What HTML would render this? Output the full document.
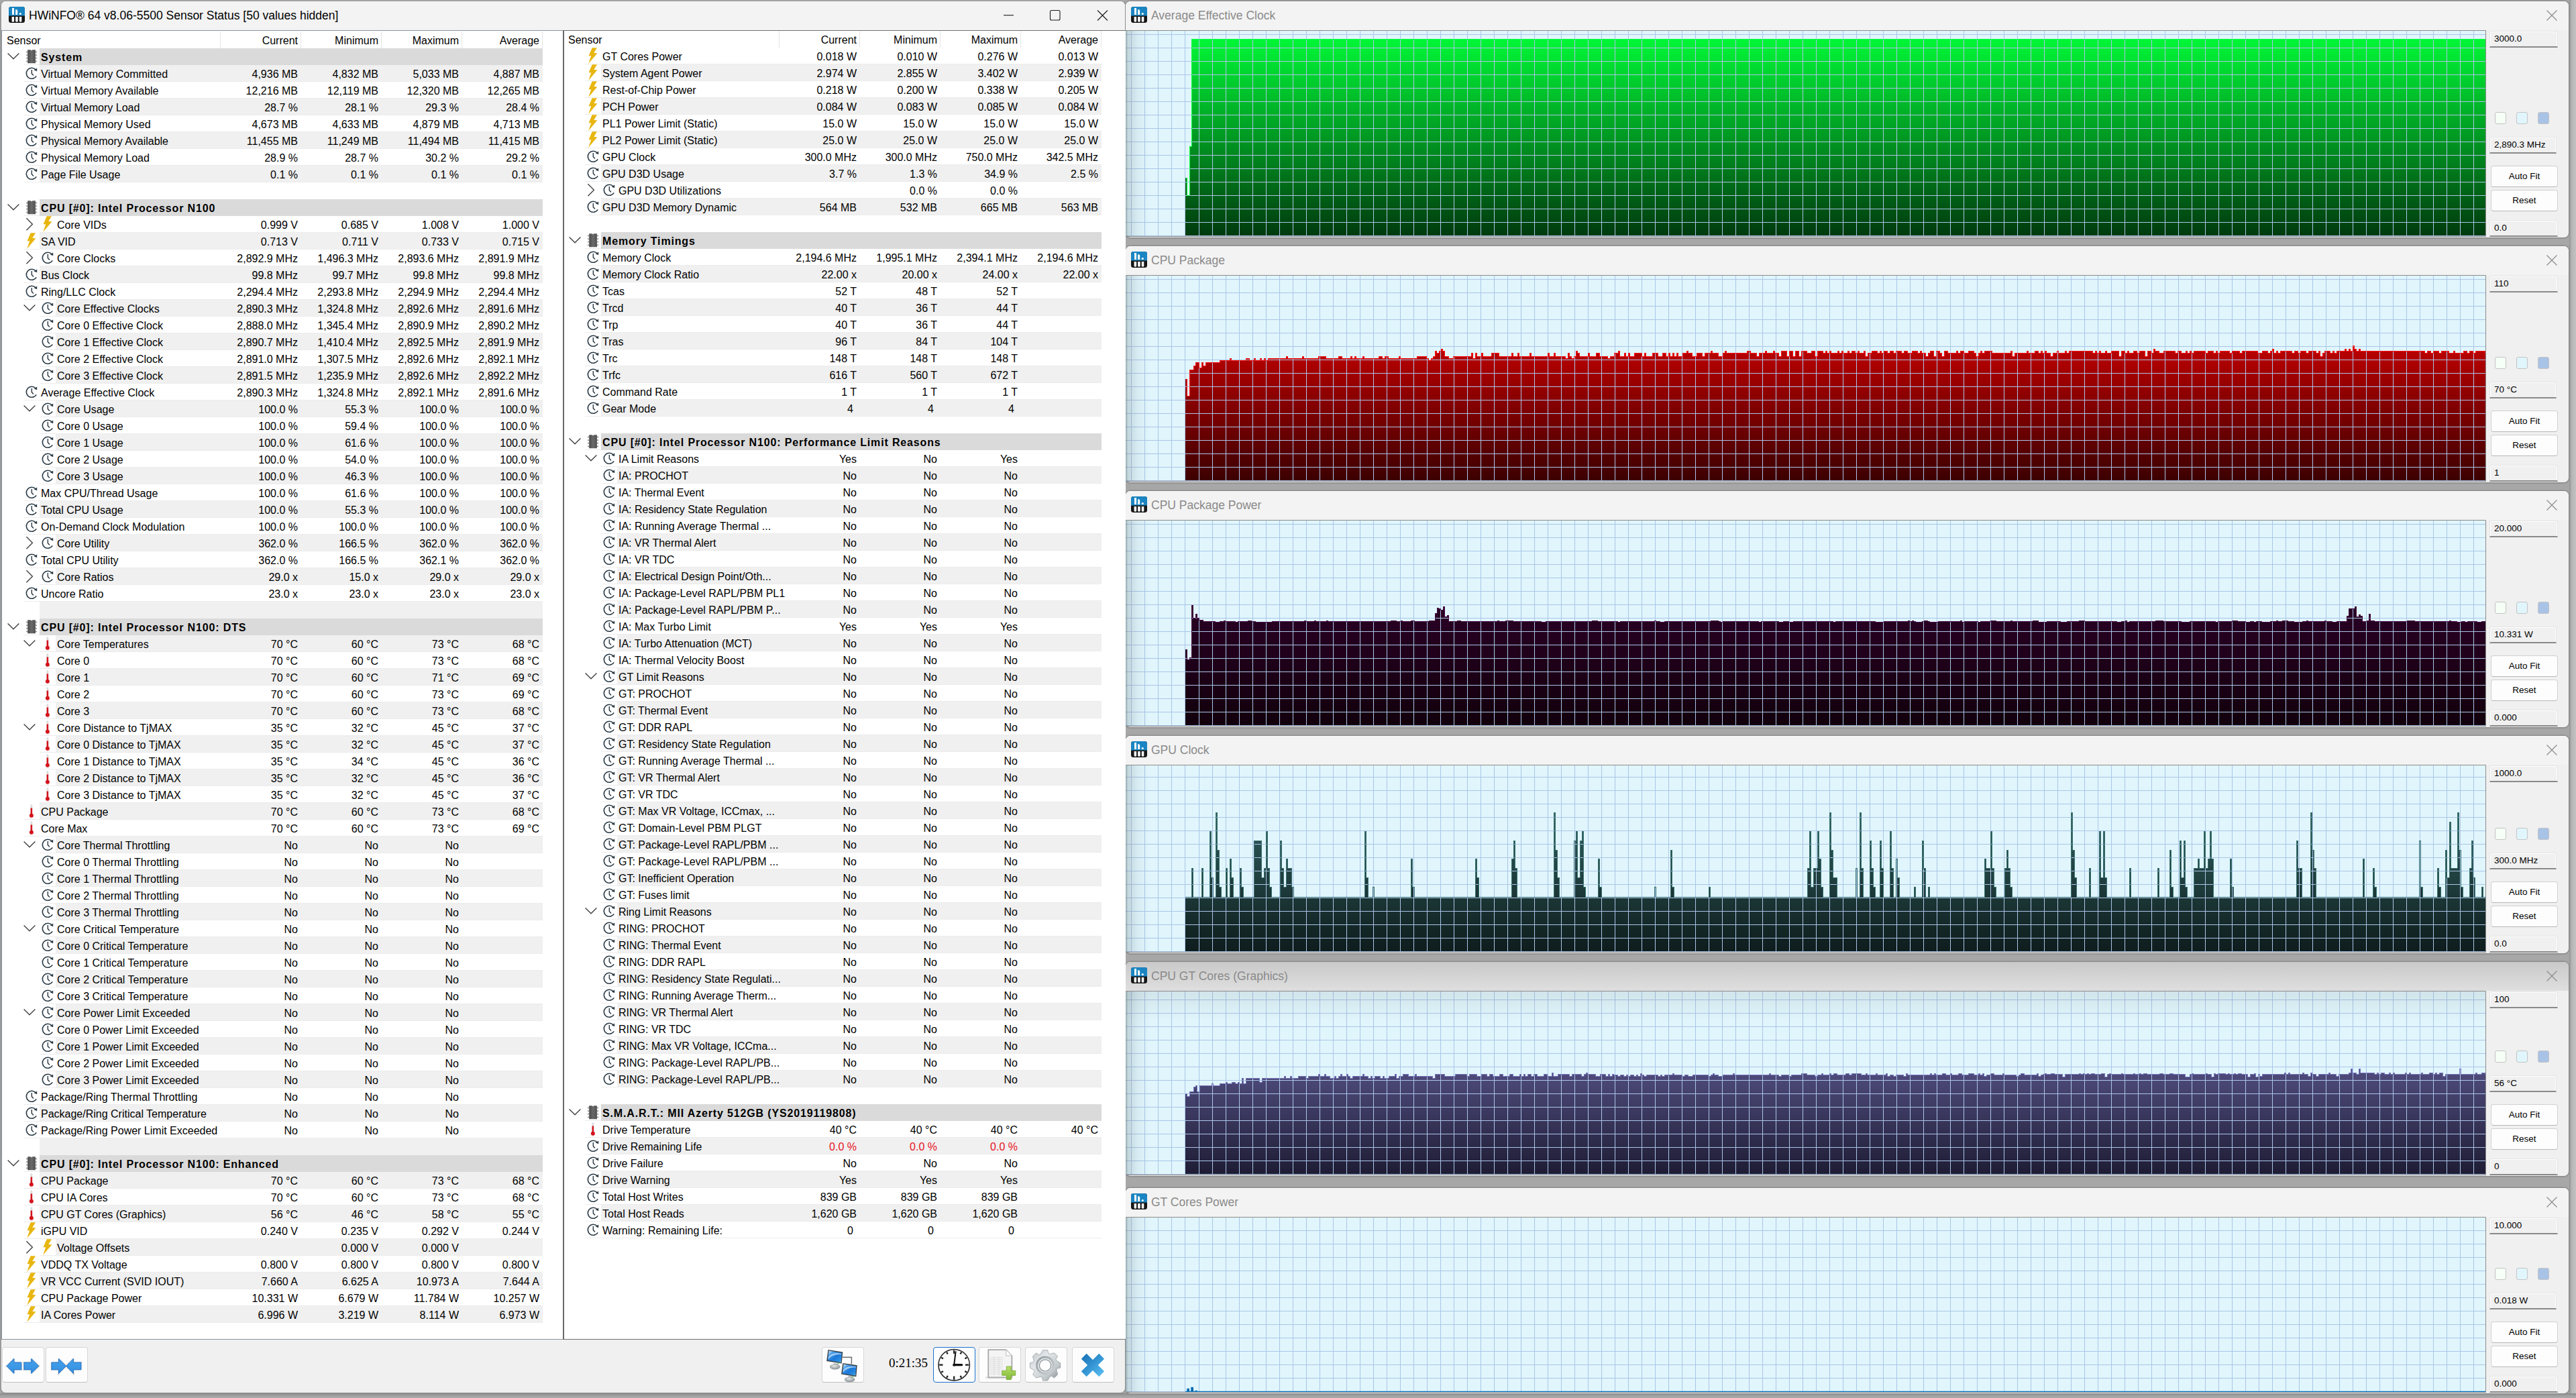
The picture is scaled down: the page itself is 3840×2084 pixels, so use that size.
<!DOCTYPE html><html><head><meta charset="utf-8"><style>
*{box-sizing:border-box}
html,body{margin:0;padding:0}
body{width:3840px;height:2084px;overflow:hidden;position:relative;background:#a7a7a7;font-family:"Liberation Sans",sans-serif;font-size:16px;color:#000}
.a{position:absolute}
.t{position:absolute;white-space:nowrap;line-height:27px;height:25px}
.v{position:absolute;white-space:nowrap;line-height:27px;height:25px;text-align:right;width:119px}
.bg1{position:absolute;height:25px;background:#f0f0f0}
.hd{position:absolute;height:25px;background:#dadada}
.sep{position:absolute;height:1px;background:#ececec}
.ic{position:absolute;width:24px;height:24px;background:#fcfcfc}
.b{font-weight:bold;letter-spacing:0.85px}
.red{color:#e81123}
svg.i{position:absolute;overflow:visible}
.btn{position:absolute;background:#fdfdfd;border:1px solid #d6d6d6;border-bottom-color:#c2c2c2;border-radius:4px}
.tb{position:absolute;background:#f0f0f0;border:1px solid #e4e4e4;border-bottom:2px solid #8a8a8a;box-shadow:inset 1px 1px 0 #fff,inset -1px 0 0 #fff;border-radius:3px 3px 0 0;font-size:13.5px;line-height:22px;padding-left:6px;white-space:nowrap}
.gbtn{position:absolute;background:#fdfdfd;border:1px solid #d0d0d0;border-bottom-color:#b8b8b8;border-radius:4px;font-size:13.5px;text-align:center;white-space:nowrap}
.sq{position:absolute;width:17px;height:18px;border:1px solid #c4c4c4;border-radius:3px}
</style></head><body>
<svg width="0" height="0" style="position:absolute"><defs>
<symbol id="clk" viewBox="0 0 24 25"><path d="M18.15 6.84 A8 8 0 1 0 19.23 16.3" fill="none" stroke="#2b3b46" stroke-width="1.6"/><path d="M20.2 4.6 L20.2 9.2 L15.8 7.6 Z" fill="#2b3b46"/><path d="M12.3 7 L12.3 12.6 L15 15.4" fill="none" stroke="#2b3b46" stroke-width="1.4"/></symbol>
<symbol id="bolt" viewBox="0 0 24 25"><path d="M10.7 0.3 L17.9 0.3 L13.3 8.1 L18.4 8.2 L5.2 24 L9.2 12.3 L5.5 12.3 Z" fill="#e8b611"/></symbol>
<symbol id="therm" viewBox="0 0 24 25"><rect x="10.4" y="2.2" width="2.9" height="15" rx="1.4" fill="#dcdcdc"/><rect x="10.6" y="7.5" width="2.5" height="10" fill="#d3141c"/><circle cx="11.85" cy="18.8" r="3" fill="#d3141c"/><ellipse cx="11.85" cy="22.7" rx="2.5" ry="0.5" fill="#e0e0e0"/></symbol>
<symbol id="chip" viewBox="0 0 24 25"><defs><linearGradient id="cg" x1="0" y1="0" x2="1" y2="0"><stop offset="0" stop-color="#4a4a4a"/><stop offset="0.5" stop-color="#6a6a6a"/><stop offset="1" stop-color="#505050"/></linearGradient></defs><g fill="#8a8a8a"><rect x="3.9" y="4.6" width="2.2" height="1.8" rx="0.8"/><rect x="3.9" y="9.2" width="2.2" height="1.8" rx="0.8"/><rect x="3.9" y="13.8" width="2.2" height="1.8" rx="0.8"/><rect x="3.9" y="18.4" width="2.2" height="1.8" rx="0.8"/><rect x="18" y="4.6" width="2.2" height="1.8" rx="0.8"/><rect x="18" y="9.2" width="2.2" height="1.8" rx="0.8"/><rect x="18" y="13.8" width="2.2" height="1.8" rx="0.8"/><rect x="18" y="18.4" width="2.2" height="1.8" rx="0.8"/></g><path d="M6.2 2.3 L10.8 2.3 L12 3.4 L13.2 2.3 L17.9 2.3 L17.9 22.3 L6.2 22.3 Z" fill="url(#cg)"/></symbol>
<symbol id="chv" viewBox="0 0 24 25"><path d="M0.6 7.4 L9 15.8 L17.4 7.4" fill="none" stroke="#404040" stroke-width="1.35"/></symbol>
<symbol id="chr" viewBox="0 0 24 25"><path d="M4.4 3.3 L13.4 12.3 L4.4 21.3" fill="none" stroke="#404040" stroke-width="1.35"/></symbol>
<symbol id="logo" viewBox="0 0 24 24"><rect x="0" y="0" width="24" height="24" rx="3.5" fill="#171717"/><path d="M3.5 0 H20.5 A3.5 3.5 0 0 1 24 3.5 V13.5 H0 V3.5 A3.5 3.5 0 0 1 3.5 0 Z" fill="#1a85c2"/><rect x="5" y="2" width="3" height="10" fill="#fff"/><path d="M10.2 4.3 H12 Q13.2 4.5 13.2 6.5 V12 H10.2 Z" fill="#fff"/><circle cx="17.3" cy="10.5" r="1.6" fill="#fff"/><path d="M4.6 15 H8.1 V22 Q6.4 23.3 4.6 22 Z M10.2 15 H13.7 V22 Q12 23.3 10.2 22 Z M15.8 15 H19.3 V22 Q17.6 23.3 15.8 22 Z" fill="#fff"/></symbol>
</defs></svg>
<div class="a" style="left:1677px;top:1px;width:2153px;height:354px;background:#f0f0f0;border:1px solid #8a8a8a;border-radius:8px;box-shadow:0 1px 1px rgba(0,0,0,0.12),0 -1px 1px rgba(0,0,0,0.08)"></div>
<div class="a" style="left:1678px;top:2px;width:2151px;height:43px;background:#f3f3f3;border-radius:7px 7px 0 0;border-top:1px solid #f9f9f9"></div>
<svg class="i" style="left:1686px;top:10px" width="24" height="24"><use href="#logo"/></svg>
<div class="a" style="left:1716px;top:11px;font-size:17.5px;line-height:24px;color:#8a8a8a;white-space:nowrap">Average Effective Clock</div>
<svg class="i" style="left:3796px;top:15px" width="16" height="16"><path d="M0.5 0.5 L15.5 15.5 M15.5 0.5 L0.5 15.5" stroke="#8e8e8e" stroke-width="1.3"/></svg>
<svg class="i" style="left:1678px;top:45px" width="2028" height="308">
<rect x="0" y="0" width="2028" height="308" fill="#e0f6fc"/>
<defs><linearGradient id="gc1" x1="0" y1="0" x2="0" y2="307" gradientUnits="userSpaceOnUse"><stop offset="0" stop-color="#00ff38"/><stop offset="1" stop-color="#003a0e"/></linearGradient></defs><path d="M89 307V220H92V246H95V173H98V13H101V13H104V13H107V13H110V13H113V13H116V13H119V13H122V13H125V13H128V13H131V13H134V13H137V13H140V13H143V13H146V13H149V13H152V13H155V13H158V13H161V13H164V13H167V13H170V13H173V13H176V13H179V13H182V13H185V13H188V13H191V13H194V13H197V13H200V13H203V13H206V13H209V13H212V13H215V13H218V13H221V13H224V13H227V13H230V13H233V13H236V13H239V13H242V13H245V13H248V13H251V13H254V13H257V13H260V13H263V13H266V13H269V13H272V13H275V13H278V13H281V13H284V13H287V13H290V13H293V13H296V13H299V13H302V13H305V13H308V13H311V13H314V13H317V13H320V13H323V13H326V13H329V13H332V13H335V13H338V13H341V13H344V13H347V13H350V13H353V13H356V13H359V13H362V13H365V13H368V13H371V13H374V13H377V13H380V13H383V13H386V13H389V13H392V13H395V13H398V13H401V13H404V13H407V13H410V13H413V13H416V13H419V13H422V13H425V13H428V13H431V13H434V13H437V13H440V13H443V13H446V13H449V13H452V13H455V13H458V13H461V13H464V13H467V13H470V13H473V13H476V13H479V13H482V13H485V13H488V13H491V13H494V13H497V13H500V13H503V13H506V13H509V13H512V13H515V13H518V13H521V13H524V13H527V13H530V13H533V13H536V13H539V13H542V13H545V13H548V13H551V13H554V13H557V13H560V13H563V13H566V13H569V13H572V13H575V13H578V13H581V13H584V13H587V13H590V13H593V13H596V13H599V13H602V13H605V13H608V13H611V13H614V13H617V13H620V13H623V13H626V13H629V13H632V13H635V13H638V13H641V13H644V13H647V13H650V13H653V13H656V13H659V13H662V13H665V13H668V13H671V13H674V13H677V13H680V13H683V13H686V13H689V13H692V13H695V13H698V13H701V13H704V13H707V13H710V13H713V13H716V13H719V13H722V13H725V13H728V13H731V13H734V13H737V13H740V13H743V13H746V13H749V13H752V13H755V13H758V13H761V13H764V13H767V13H770V13H773V13H776V13H779V13H782V13H785V13H788V13H791V13H794V13H797V13H800V13H803V13H806V13H809V13H812V13H815V13H818V13H821V13H824V13H827V13H830V13H833V13H836V13H839V13H842V13H845V13H848V13H851V13H854V13H857V13H860V13H863V13H866V13H869V13H872V13H875V13H878V13H881V13H884V13H887V13H890V13H893V13H896V13H899V13H902V13H905V13H908V13H911V13H914V13H917V13H920V13H923V13H926V13H929V13H932V13H935V13H938V13H941V13H944V13H947V13H950V13H953V13H956V13H959V13H962V13H965V13H968V13H971V13H974V13H977V13H980V13H983V13H986V13H989V13H992V13H995V13H998V13H1001V13H1004V13H1007V13H1010V13H1013V13H1016V13H1019V13H1022V13H1025V13H1028V13H1031V13H1034V13H1037V13H1040V13H1043V13H1046V13H1049V13H1052V13H1055V13H1058V13H1061V13H1064V13H1067V13H1070V13H1073V13H1076V13H1079V13H1082V13H1085V13H1088V13H1091V13H1094V13H1097V13H1100V13H1103V13H1106V13H1109V13H1112V13H1115V13H1118V13H1121V13H1124V13H1127V13H1130V13H1133V13H1136V13H1139V13H1142V13H1145V13H1148V13H1151V13H1154V13H1157V13H1160V13H1163V13H1166V13H1169V13H1172V13H1175V13H1178V13H1181V13H1184V13H1187V13H1190V13H1193V13H1196V13H1199V13H1202V13H1205V13H1208V13H1211V13H1214V13H1217V13H1220V13H1223V13H1226V13H1229V13H1232V13H1235V13H1238V13H1241V13H1244V13H1247V13H1250V13H1253V13H1256V13H1259V13H1262V13H1265V13H1268V13H1271V13H1274V13H1277V13H1280V13H1283V13H1286V13H1289V13H1292V13H1295V13H1298V13H1301V13H1304V13H1307V13H1310V13H1313V13H1316V13H1319V13H1322V13H1325V13H1328V13H1331V13H1334V13H1337V13H1340V13H1343V13H1346V13H1349V13H1352V13H1355V13H1358V13H1361V13H1364V13H1367V13H1370V13H1373V13H1376V13H1379V13H1382V13H1385V13H1388V13H1391V13H1394V13H1397V13H1400V13H1403V13H1406V13H1409V13H1412V13H1415V13H1418V13H1421V13H1424V13H1427V13H1430V13H1433V13H1436V13H1439V13H1442V13H1445V13H1448V13H1451V13H1454V13H1457V13H1460V13H1463V13H1466V13H1469V13H1472V13H1475V13H1478V13H1481V13H1484V13H1487V13H1490V13H1493V13H1496V13H1499V13H1502V13H1505V13H1508V13H1511V13H1514V13H1517V13H1520V13H1523V13H1526V13H1529V13H1532V13H1535V13H1538V13H1541V13H1544V13H1547V13H1550V13H1553V13H1556V13H1559V13H1562V13H1565V13H1568V13H1571V13H1574V13H1577V13H1580V13H1583V13H1586V13H1589V13H1592V13H1595V13H1598V13H1601V13H1604V13H1607V13H1610V13H1613V13H1616V13H1619V13H1622V13H1625V13H1628V13H1631V13H1634V13H1637V13H1640V13H1643V13H1646V13H1649V13H1652V13H1655V13H1658V13H1661V13H1664V13H1667V13H1670V13H1673V13H1676V13H1679V13H1682V13H1685V13H1688V13H1691V13H1694V13H1697V13H1700V13H1703V13H1706V13H1709V13H1712V13H1715V13H1718V13H1721V13H1724V13H1727V13H1730V13H1733V13H1736V13H1739V13H1742V13H1745V13H1748V13H1751V13H1754V13H1757V13H1760V13H1763V13H1766V13H1769V13H1772V13H1775V13H1778V13H1781V13H1784V13H1787V13H1790V13H1793V13H1796V13H1799V13H1802V13H1805V13H1808V13H1811V13H1814V13H1817V13H1820V13H1823V13H1826V13H1829V13H1832V13H1835V13H1838V13H1841V13H1844V13H1847V13H1850V13H1853V13H1856V13H1859V13H1862V13H1865V13H1868V13H1871V13H1874V13H1877V13H1880V13H1883V13H1886V13H1889V13H1892V13H1895V13H1898V13H1901V13H1904V13H1907V13H1910V13H1913V13H1916V13H1919V13H1922V13H1925V13H1928V13H1931V13H1934V13H1937V13H1940V13H1943V13H1946V13H1949V13H1952V13H1955V13H1958V13H1961V13H1964V13H1967V13H1970V13H1973V13H1976V13H1979V13H1982V13H1985V13H1988V13H1991V13H1994V13H1997V13H2000V13H2003V13H2006V13H2009V13H2012V13H2015V13H2018V13H2021V13H2024V13H2027V13H2027V307Z" fill="url(#gc1)"/>
<path d="M8.5 1V307M28.5 1V307M48.5 1V307M68.5 1V307M88.5 1V307M109.5 1V307M129.5 1V307M149.5 1V307M169.5 1V307M189.5 1V307M209.5 1V307M229.5 1V307M249.5 1V307M269.5 1V307M289.5 1V307M309.5 1V307M329.5 1V307M349.5 1V307M369.5 1V307M389.5 1V307M409.5 1V307M429.5 1V307M449.5 1V307M469.5 1V307M489.5 1V307M509.5 1V307M529.5 1V307M549.5 1V307M569.5 1V307M589.5 1V307M609.5 1V307M629.5 1V307M649.5 1V307M669.5 1V307M689.5 1V307M709.5 1V307M729.5 1V307M749.5 1V307M769.5 1V307M789.5 1V307M809.5 1V307M829.5 1V307M849.5 1V307M869.5 1V307M889.5 1V307M909.5 1V307M929.5 1V307M949.5 1V307M969.5 1V307M989.5 1V307M1009.5 1V307M1029.5 1V307M1049.5 1V307M1069.5 1V307M1089.5 1V307M1109.5 1V307M1129.5 1V307M1149.5 1V307M1169.5 1V307M1189.5 1V307M1209.5 1V307M1229.5 1V307M1249.5 1V307M1269.5 1V307M1289.5 1V307M1309.5 1V307M1329.5 1V307M1349.5 1V307M1369.5 1V307M1389.5 1V307M1409.5 1V307M1429.5 1V307M1449.5 1V307M1469.5 1V307M1489.5 1V307M1509.5 1V307M1529.5 1V307M1549.5 1V307M1569.5 1V307M1589.5 1V307M1609.5 1V307M1629.5 1V307M1649.5 1V307M1669.5 1V307M1689.5 1V307M1709.5 1V307M1729.5 1V307M1749.5 1V307M1769.5 1V307M1789.5 1V307M1809.5 1V307M1829.5 1V307M1849.5 1V307M1869.5 1V307M1889.5 1V307M1909.5 1V307M1929.5 1V307M1949.5 1V307M1969.5 1V307M1989.5 1V307M2009.5 1V307M0 306.5H2027M0 286.5H2027M0 266.5H2027M0 246.5H2027M0 226.5H2027M0 206.5H2027M0 186.5H2027M0 166.5H2027M0 146.5H2027M0 126.5H2027M0 106.5H2027M0 86.5H2027M0 66.5H2027M0 46.5H2027M0 26.5H2027M0 6.5H2027" stroke="#abc5e8" stroke-width="1" fill="none"/>
<path d="M89.5 220.5H91.5H91.5V246.5H94.5H95.5V173.5H97.5H98.5V13.5H100.5H103.5H106.5H109.5H112.5H115.5H118.5H121.5H124.5H127.5H130.5H133.5H136.5H139.5H142.5H145.5H148.5H151.5H154.5H157.5H160.5H163.5H166.5H169.5H172.5H175.5H178.5H181.5H184.5H187.5H190.5H193.5H196.5H199.5H202.5H205.5H208.5H211.5H214.5H217.5H220.5H223.5H226.5H229.5H232.5H235.5H238.5H241.5H244.5H247.5H250.5H253.5H256.5H259.5H262.5H265.5H268.5H271.5H274.5H277.5H280.5H283.5H286.5H289.5H292.5H295.5H298.5H301.5H304.5H307.5H310.5H313.5H316.5H319.5H322.5H325.5H328.5H331.5H334.5H337.5H340.5H343.5H346.5H349.5H352.5H355.5H358.5H361.5H364.5H367.5H370.5H373.5H376.5H379.5H382.5H385.5H388.5H391.5H394.5H397.5H400.5H403.5H406.5H409.5H412.5H415.5H418.5H421.5H424.5H427.5H430.5H433.5H436.5H439.5H442.5H445.5H448.5H451.5H454.5H457.5H460.5H463.5H466.5H469.5H472.5H475.5H478.5H481.5H484.5H487.5H490.5H493.5H496.5H499.5H502.5H505.5H508.5H511.5H514.5H517.5H520.5H523.5H526.5H529.5H532.5H535.5H538.5H541.5H544.5H547.5H550.5H553.5H556.5H559.5H562.5H565.5H568.5H571.5H574.5H577.5H580.5H583.5H586.5H589.5H592.5H595.5H598.5H601.5H604.5H607.5H610.5H613.5H616.5H619.5H622.5H625.5H628.5H631.5H634.5H637.5H640.5H643.5H646.5H649.5H652.5H655.5H658.5H661.5H664.5H667.5H670.5H673.5H676.5H679.5H682.5H685.5H688.5H691.5H694.5H697.5H700.5H703.5H706.5H709.5H712.5H715.5H718.5H721.5H724.5H727.5H730.5H733.5H736.5H739.5H742.5H745.5H748.5H751.5H754.5H757.5H760.5H763.5H766.5H769.5H772.5H775.5H778.5H781.5H784.5H787.5H790.5H793.5H796.5H799.5H802.5H805.5H808.5H811.5H814.5H817.5H820.5H823.5H826.5H829.5H832.5H835.5H838.5H841.5H844.5H847.5H850.5H853.5H856.5H859.5H862.5H865.5H868.5H871.5H874.5H877.5H880.5H883.5H886.5H889.5H892.5H895.5H898.5H901.5H904.5H907.5H910.5H913.5H916.5H919.5H922.5H925.5H928.5H931.5H934.5H937.5H940.5H943.5H946.5H949.5H952.5H955.5H958.5H961.5H964.5H967.5H970.5H973.5H976.5H979.5H982.5H985.5H988.5H991.5H994.5H997.5H1000.5H1003.5H1006.5H1009.5H1012.5H1015.5H1018.5H1021.5H1024.5H1027.5H1030.5H1033.5H1036.5H1039.5H1042.5H1045.5H1048.5H1051.5H1054.5H1057.5H1060.5H1063.5H1066.5H1069.5H1072.5H1075.5H1078.5H1081.5H1084.5H1087.5H1090.5H1093.5H1096.5H1099.5H1102.5H1105.5H1108.5H1111.5H1114.5H1117.5H1120.5H1123.5H1126.5H1129.5H1132.5H1135.5H1138.5H1141.5H1144.5H1147.5H1150.5H1153.5H1156.5H1159.5H1162.5H1165.5H1168.5H1171.5H1174.5H1177.5H1180.5H1183.5H1186.5H1189.5H1192.5H1195.5H1198.5H1201.5H1204.5H1207.5H1210.5H1213.5H1216.5H1219.5H1222.5H1225.5H1228.5H1231.5H1234.5H1237.5H1240.5H1243.5H1246.5H1249.5H1252.5H1255.5H1258.5H1261.5H1264.5H1267.5H1270.5H1273.5H1276.5H1279.5H1282.5H1285.5H1288.5H1291.5H1294.5H1297.5H1300.5H1303.5H1306.5H1309.5H1312.5H1315.5H1318.5H1321.5H1324.5H1327.5H1330.5H1333.5H1336.5H1339.5H1342.5H1345.5H1348.5H1351.5H1354.5H1357.5H1360.5H1363.5H1366.5H1369.5H1372.5H1375.5H1378.5H1381.5H1384.5H1387.5H1390.5H1393.5H1396.5H1399.5H1402.5H1405.5H1408.5H1411.5H1414.5H1417.5H1420.5H1423.5H1426.5H1429.5H1432.5H1435.5H1438.5H1441.5H1444.5H1447.5H1450.5H1453.5H1456.5H1459.5H1462.5H1465.5H1468.5H1471.5H1474.5H1477.5H1480.5H1483.5H1486.5H1489.5H1492.5H1495.5H1498.5H1501.5H1504.5H1507.5H1510.5H1513.5H1516.5H1519.5H1522.5H1525.5H1528.5H1531.5H1534.5H1537.5H1540.5H1543.5H1546.5H1549.5H1552.5H1555.5H1558.5H1561.5H1564.5H1567.5H1570.5H1573.5H1576.5H1579.5H1582.5H1585.5H1588.5H1591.5H1594.5H1597.5H1600.5H1603.5H1606.5H1609.5H1612.5H1615.5H1618.5H1621.5H1624.5H1627.5H1630.5H1633.5H1636.5H1639.5H1642.5H1645.5H1648.5H1651.5H1654.5H1657.5H1660.5H1663.5H1666.5H1669.5H1672.5H1675.5H1678.5H1681.5H1684.5H1687.5H1690.5H1693.5H1696.5H1699.5H1702.5H1705.5H1708.5H1711.5H1714.5H1717.5H1720.5H1723.5H1726.5H1729.5H1732.5H1735.5H1738.5H1741.5H1744.5H1747.5H1750.5H1753.5H1756.5H1759.5H1762.5H1765.5H1768.5H1771.5H1774.5H1777.5H1780.5H1783.5H1786.5H1789.5H1792.5H1795.5H1798.5H1801.5H1804.5H1807.5H1810.5H1813.5H1816.5H1819.5H1822.5H1825.5H1828.5H1831.5H1834.5H1837.5H1840.5H1843.5H1846.5H1849.5H1852.5H1855.5H1858.5H1861.5H1864.5H1867.5H1870.5H1873.5H1876.5H1879.5H1882.5H1885.5H1888.5H1891.5H1894.5H1897.5H1900.5H1903.5H1906.5H1909.5H1912.5H1915.5H1918.5H1921.5H1924.5H1927.5H1930.5H1933.5H1936.5H1939.5H1942.5H1945.5H1948.5H1951.5H1954.5H1957.5H1960.5H1963.5H1966.5H1969.5H1972.5H1975.5H1978.5H1981.5H1984.5H1987.5H1990.5H1993.5H1996.5H1999.5H2002.5H2005.5H2008.5H2011.5H2014.5H2017.5H2020.5H2023.5H2026.5H2026.5" fill="none" stroke="#00ff40" stroke-width="1"/>
<path d="M0 0.5H2027.5V307.5H0" stroke="#8c8c8c" stroke-width="1" fill="none"/>
<defs><linearGradient id="shc1" x1="0" x2="1"><stop offset="0" stop-color="#4e5e64" stop-opacity="0.5"/><stop offset="0.1" stop-color="#5a6a70" stop-opacity="0.22"/><stop offset="0.5" stop-color="#5a6a70" stop-opacity="0.07"/><stop offset="1" stop-color="#5a6a70" stop-opacity="0"/></linearGradient></defs>
<rect x="0" y="1" width="36" height="306" fill="url(#shc1)"/>
</svg>
<div class="tb" style="left:3711px;top:46px;width:102px;height:25px">3000.0</div>
<div class="sq" style="left:3719px;top:167px;background:#f6fff6"></div>
<div class="sq" style="left:3751px;top:167px;background:#e0f6fc"></div>
<div class="sq" style="left:3783px;top:167px;background:#a9c3e6"></div>
<div class="tb" style="left:3711px;top:204px;width:100px;height:25px">2,890.3 MHz</div>
<div class="gbtn" style="left:3713px;top:247px;width:100px;height:32px;line-height:30px">Auto Fit</div>
<div class="gbtn" style="left:3713px;top:283px;width:100px;height:32px;line-height:30px">Reset</div>
<div class="tb" style="left:3711px;top:328px;width:102px;height:25px">0.0</div>
<div class="a" style="left:1677px;top:366px;width:2153px;height:354px;background:#f0f0f0;border:1px solid #8a8a8a;border-radius:8px;box-shadow:0 1px 1px rgba(0,0,0,0.12),0 -1px 1px rgba(0,0,0,0.08)"></div>
<div class="a" style="left:1678px;top:367px;width:2151px;height:43px;background:#f3f3f3;border-radius:7px 7px 0 0;border-top:1px solid #f9f9f9"></div>
<svg class="i" style="left:1686px;top:375px" width="24" height="24"><use href="#logo"/></svg>
<div class="a" style="left:1716px;top:376px;font-size:17.5px;line-height:24px;color:#8a8a8a;white-space:nowrap">CPU Package</div>
<svg class="i" style="left:3796px;top:380px" width="16" height="16"><path d="M0.5 0.5 L15.5 15.5 M15.5 0.5 L0.5 15.5" stroke="#8e8e8e" stroke-width="1.3"/></svg>
<svg class="i" style="left:1678px;top:410px" width="2028" height="308">
<rect x="0" y="0" width="2028" height="308" fill="#e0f6fc"/>
<defs><linearGradient id="gc2" x1="0" y1="0" x2="0" y2="307" gradientUnits="userSpaceOnUse"><stop offset="0" stop-color="#ff0000"/><stop offset="1" stop-color="#3c0000"/></linearGradient></defs><path d="M89 307V155H92V180H95V141H98V141H101V135H104V130H107V130H110V138H113V130H116V135H119V130H122V130H125V130H128V130H131V130H134V130H137V130H140V127H143V127H146V127H149V127H152V127H155V124H158V127H161V127H164V127H167V127H170V127H173V127H176V127H179V124H182V124H185V127H188V127H191V124H194V127H197V127H200V124H203V127H206V124H209V127H212V124H215V124H218V124H221V124H224V124H227V124H230V124H233V124H236V124H239V121H242V124H245V124H248V124H251V124H254V124H257V124H260V124H263V121H266V124H269V124H272V124H275V124H278V124H281V124H284V124H287V121H290V121H293V121H296V121H299V124H302V124H305V124H308V124H311V124H314V124H317V121H320V121H323V124H326V124H329V124H332V124H335V121H338V124H341V121H344V124H347V124H350V124H353V121H356V124H359V124H362V124H365V124H368V124H371V124H374V124H377V121H380V121H383V124H386V121H389V121H392V124H395V124H398V124H401V124H404V124H407V121H410V124H413V124H416V124H419V124H422V124H425V124H428V124H431V124H434V121H437V121H440V121H443V121H446V121H449V124H452V127H455V124H458V121H461V113H464V116H467V113H470V110H473V113H476V121H479V121H482V124H485V124H488V121H491V121H494V121H497V121H500V121H503V121H506V121H509V121H512V121H515V116H518V124H521V116H524V121H527V121H530V116H533V121H536V121H539V121H542V121H545V116H548V116H551V116H554V116H557V121H560V121H563V121H566V121H569V121H572V121H575V116H578V121H581V121H584V116H587V121H590V121H593V121H596V121H599V121H602V116H605V121H608V121H611V121H614V121H617V121H620V121H623V121H626V121H629V116H632V121H635V121H638V116H641V121H644V121H647V121H650V121H653V121H656V124H659V116H662V121H665V124H668V121H671V113H674V116H677V121H680V121H683V121H686V121H689V116H692V121H695V121H698V121H701V116H704V116H707V121H710V121H713V121H716V121H719V124H722V121H725V121H728V116H731V116H734V113H737V121H740V121H743V116H746V121H749V116H752V121H755V121H758V116H761V116H764V116H767V116H770V121H773V116H776V121H779V121H782V121H785V116H788V116H791V116H794V121H797V121H800V116H803V116H806V121H809V116H812V121H815V116H818V121H821V116H824V121H827V121H830V116H833V116H836V113H839V116H842V116H845V121H848V121H851V116H854V116H857V116H860V121H863V116H866V116H869V116H872V113H875V116H878V116H881V116H884V121H887V121H890V116H893V113H896V116H899V116H902V116H905V116H908V116H911V116H914V116H917V116H920V116H923V116H926V113H929V113H932V116H935V116H938V116H941V121H944V116H947V116H950V116H953V113H956V116H959V116H962V116H965V113H968V116H971V116H974V121H977V113H980V113H983V113H986V121H989V113H992V113H995V121H998V113H1001V113H1004V121H1007V113H1010V113H1013V113H1016V116H1019V116H1022V113H1025V113H1028V121H1031V113H1034V113H1037V113H1040V116H1043V113H1046V116H1049V113H1052V116H1055V116H1058V116H1061V113H1064V116H1067V113H1070V116H1073V116H1076V113H1079V116H1082V113H1085V113H1088V116H1091V113H1094V116H1097V116H1100V113H1103V121H1106V116H1109V116H1112V113H1115V113H1118V113H1121V116H1124V113H1127V116H1130V113H1133V113H1136V116H1139V113H1142V113H1145V116H1148V113H1151V113H1154V113H1157V116H1160V113H1163V113H1166V116H1169V116H1172V113H1175V113H1178V113H1181V116H1184V113H1187V116H1190V116H1193V121H1196V116H1199V113H1202V113H1205V121H1208V113H1211V113H1214V116H1217V121H1220V113H1223V113H1226V116H1229V116H1232V116H1235V116H1238V113H1241V116H1244V113H1247V113H1250V116H1253V116H1256V113H1259V113H1262V113H1265V116H1268V121H1271V116H1274V113H1277V116H1280V113H1283V113H1286V113H1289V113H1292V116H1295V116H1298V116H1301V116H1304V116H1307V116H1310V116H1313V116H1316V116H1319V113H1322V121H1325V116H1328V116H1331V116H1334V116H1337V116H1340V116H1343V113H1346V116H1349V116H1352V116H1355V113H1358V113H1361V116H1364V113H1367V116H1370V113H1373V116H1376V116H1379V121H1382V116H1385V116H1388V113H1391V116H1394V116H1397V116H1400V113H1403V116H1406V113H1409V113H1412V113H1415V113H1418V113H1421V113H1424V113H1427V113H1430V113H1433V113H1436V113H1439V113H1442V116H1445V113H1448V116H1451V113H1454V116H1457V116H1460V113H1463V116H1466V116H1469V113H1472V113H1475V113H1478V113H1481V121H1484V113H1487V113H1490V116H1493V113H1496V116H1499V116H1502V113H1505V113H1508V116H1511V113H1514V113H1517V113H1520V121H1523V113H1526V113H1529V116H1532V110H1535V113H1538V113H1541V116H1544V116H1547V113H1550V113H1553V113H1556V113H1559V113H1562V113H1565V116H1568V113H1571V113H1574V116H1577V116H1580V113H1583V116H1586V113H1589V116H1592V113H1595V113H1598V113H1601V113H1604V113H1607V113H1610V116H1613V113H1616V113H1619V113H1622V116H1625V113H1628V116H1631V113H1634V113H1637V113H1640V113H1643V113H1646V116H1649V113H1652V113H1655V113H1658V113H1661V116H1664V113H1667V113H1670V113H1673V113H1676V113H1679V113H1682V113H1685V113H1688V116H1691V116H1694V113H1697V113H1700V113H1703V116H1706V113H1709V110H1712V116H1715V113H1718V116H1721V113H1724V113H1727V113H1730V113H1733V113H1736V113H1739V116H1742V113H1745V113H1748V116H1751V113H1754V113H1757V113H1760V116H1763V113H1766V113H1769V113H1772V113H1775V116H1778V113H1781V121H1784V116H1787V113H1790V113H1793V113H1796V116H1799V113H1802V116H1805V113H1808V113H1811V113H1814V113H1817V110H1820V113H1823V110H1826V113H1829V105H1832V110H1835V113H1838V110H1841V113H1844V113H1847V113H1850V113H1853V113H1856V113H1859V113H1862V113H1865V113H1868V113H1871V113H1874V113H1877V113H1880V113H1883V113H1886V113H1889V113H1892V113H1895V113H1898V113H1901V113H1904V113H1907V113H1910V113H1913V113H1916V113H1919V113H1922V113H1925V113H1928V113H1931V113H1934V113H1937V116H1940V113H1943V113H1946V116H1949V113H1952V113H1955V113H1958V116H1961V113H1964V113H1967V113H1970V113H1973V116H1976V116H1979V113H1982V116H1985V116H1988V116H1991V116H1994V113H1997V113H2000V116H2003V113H2006V113H2009V116H2012V113H2015V113H2018V113H2021V113H2024V113H2027V116H2027V307Z" fill="url(#gc2)"/>
<path d="M8.5 1V307M28.5 1V307M48.5 1V307M68.5 1V307M88.5 1V307M109.5 1V307M129.5 1V307M149.5 1V307M169.5 1V307M189.5 1V307M209.5 1V307M229.5 1V307M249.5 1V307M269.5 1V307M289.5 1V307M309.5 1V307M329.5 1V307M349.5 1V307M369.5 1V307M389.5 1V307M409.5 1V307M429.5 1V307M449.5 1V307M469.5 1V307M489.5 1V307M509.5 1V307M529.5 1V307M549.5 1V307M569.5 1V307M589.5 1V307M609.5 1V307M629.5 1V307M649.5 1V307M669.5 1V307M689.5 1V307M709.5 1V307M729.5 1V307M749.5 1V307M769.5 1V307M789.5 1V307M809.5 1V307M829.5 1V307M849.5 1V307M869.5 1V307M889.5 1V307M909.5 1V307M929.5 1V307M949.5 1V307M969.5 1V307M989.5 1V307M1009.5 1V307M1029.5 1V307M1049.5 1V307M1069.5 1V307M1089.5 1V307M1109.5 1V307M1129.5 1V307M1149.5 1V307M1169.5 1V307M1189.5 1V307M1209.5 1V307M1229.5 1V307M1249.5 1V307M1269.5 1V307M1289.5 1V307M1309.5 1V307M1329.5 1V307M1349.5 1V307M1369.5 1V307M1389.5 1V307M1409.5 1V307M1429.5 1V307M1449.5 1V307M1469.5 1V307M1489.5 1V307M1509.5 1V307M1529.5 1V307M1549.5 1V307M1569.5 1V307M1589.5 1V307M1609.5 1V307M1629.5 1V307M1649.5 1V307M1669.5 1V307M1689.5 1V307M1709.5 1V307M1729.5 1V307M1749.5 1V307M1769.5 1V307M1789.5 1V307M1809.5 1V307M1829.5 1V307M1849.5 1V307M1869.5 1V307M1889.5 1V307M1909.5 1V307M1929.5 1V307M1949.5 1V307M1969.5 1V307M1989.5 1V307M2009.5 1V307M0 306.5H2027M0 286.5H2027M0 266.5H2027M0 246.5H2027M0 226.5H2027M0 206.5H2027M0 186.5H2027M0 166.5H2027M0 146.5H2027M0 126.5H2027M0 106.5H2027M0 86.5H2027M0 66.5H2027M0 46.5H2027M0 26.5H2027M0 6.5H2027" stroke="#abc5e8" stroke-width="1" fill="none"/>
<path d="M89.5 155.5H91.5H91.5V180.5H94.5H95.5V141.5H97.5H100.5H101.5V135.5H103.5H104.5V130.5H106.5H109.5H109.5V138.5H112.5H113.5V130.5H115.5H115.5V135.5H118.5H119.5V130.5H121.5H124.5H127.5H130.5H133.5H136.5H139.5H140.5V127.5H142.5H145.5H148.5H151.5H154.5H155.5V124.5H157.5H157.5V127.5H160.5H163.5H166.5H169.5H172.5H175.5H178.5H179.5V124.5H181.5H184.5H184.5V127.5H187.5H190.5H191.5V124.5H193.5H193.5V127.5H196.5H199.5H200.5V124.5H202.5H202.5V127.5H205.5H206.5V124.5H208.5H208.5V127.5H211.5H212.5V124.5H214.5H217.5H220.5H223.5H226.5H229.5H232.5H235.5H238.5H239.5V121.5H241.5H241.5V124.5H244.5H247.5H250.5H253.5H256.5H259.5H262.5H263.5V121.5H265.5H265.5V124.5H268.5H271.5H274.5H277.5H280.5H283.5H286.5H287.5V121.5H289.5H292.5H295.5H298.5H298.5V124.5H301.5H304.5H307.5H310.5H313.5H316.5H317.5V121.5H319.5H322.5H322.5V124.5H325.5H328.5H331.5H334.5H335.5V121.5H337.5H337.5V124.5H340.5H341.5V121.5H343.5H343.5V124.5H346.5H349.5H352.5H353.5V121.5H355.5H355.5V124.5H358.5H361.5H364.5H367.5H370.5H373.5H376.5H377.5V121.5H379.5H382.5H382.5V124.5H385.5H386.5V121.5H388.5H391.5H391.5V124.5H394.5H397.5H400.5H403.5H406.5H407.5V121.5H409.5H409.5V124.5H412.5H415.5H418.5H421.5H424.5H427.5H430.5H433.5H434.5V121.5H436.5H439.5H442.5H445.5H448.5H448.5V124.5H451.5H451.5V127.5H454.5H455.5V124.5H457.5H458.5V121.5H460.5H461.5V113.5H463.5H463.5V116.5H466.5H467.5V113.5H469.5H470.5V110.5H472.5H472.5V113.5H475.5H475.5V121.5H478.5H481.5H481.5V124.5H484.5H487.5H488.5V121.5H490.5H493.5H496.5H499.5H502.5H505.5H508.5H511.5H514.5H515.5V116.5H517.5H517.5V124.5H520.5H521.5V116.5H523.5H523.5V121.5H526.5H529.5H530.5V116.5H532.5H532.5V121.5H535.5H538.5H541.5H544.5H545.5V116.5H547.5H550.5H553.5H556.5H556.5V121.5H559.5H562.5H565.5H568.5H571.5H574.5H575.5V116.5H577.5H577.5V121.5H580.5H583.5H584.5V116.5H586.5H586.5V121.5H589.5H592.5H595.5H598.5H601.5H602.5V116.5H604.5H604.5V121.5H607.5H610.5H613.5H616.5H619.5H622.5H625.5H628.5H629.5V116.5H631.5H631.5V121.5H634.5H637.5H638.5V116.5H640.5H640.5V121.5H643.5H646.5H649.5H652.5H655.5H655.5V124.5H658.5H659.5V116.5H661.5H661.5V121.5H664.5H664.5V124.5H667.5H668.5V121.5H670.5H671.5V113.5H673.5H673.5V116.5H676.5H676.5V121.5H679.5H682.5H685.5H688.5H689.5V116.5H691.5H691.5V121.5H694.5H697.5H700.5H701.5V116.5H703.5H706.5H706.5V121.5H709.5H712.5H715.5H718.5H718.5V124.5H721.5H722.5V121.5H724.5H727.5H728.5V116.5H730.5H733.5H734.5V113.5H736.5H736.5V121.5H739.5H742.5H743.5V116.5H745.5H745.5V121.5H748.5H749.5V116.5H751.5H751.5V121.5H754.5H757.5H758.5V116.5H760.5H763.5H766.5H769.5H769.5V121.5H772.5H773.5V116.5H775.5H775.5V121.5H778.5H781.5H784.5H785.5V116.5H787.5H790.5H793.5H793.5V121.5H796.5H799.5H800.5V116.5H802.5H805.5H805.5V121.5H808.5H809.5V116.5H811.5H811.5V121.5H814.5H815.5V116.5H817.5H817.5V121.5H820.5H821.5V116.5H823.5H823.5V121.5H826.5H829.5H830.5V116.5H832.5H835.5H836.5V113.5H838.5H838.5V116.5H841.5H844.5H844.5V121.5H847.5H850.5H851.5V116.5H853.5H856.5H859.5H859.5V121.5H862.5H863.5V116.5H865.5H868.5H871.5H872.5V113.5H874.5H874.5V116.5H877.5H880.5H883.5H883.5V121.5H886.5H889.5H890.5V116.5H892.5H893.5V113.5H895.5H895.5V116.5H898.5H901.5H904.5H907.5H910.5H913.5H916.5H919.5H922.5H925.5H926.5V113.5H928.5H931.5H931.5V116.5H934.5H937.5H940.5H940.5V121.5H943.5H944.5V116.5H946.5H949.5H952.5H953.5V113.5H955.5H955.5V116.5H958.5H961.5H964.5H965.5V113.5H967.5H967.5V116.5H970.5H973.5H973.5V121.5H976.5H977.5V113.5H979.5H982.5H985.5H985.5V121.5H988.5H989.5V113.5H991.5H994.5H994.5V121.5H997.5H998.5V113.5H1000.5H1003.5H1003.5V121.5H1006.5H1007.5V113.5H1009.5H1012.5H1015.5H1015.5V116.5H1018.5H1021.5H1022.5V113.5H1024.5H1027.5H1027.5V121.5H1030.5H1031.5V113.5H1033.5H1036.5H1039.5H1039.5V116.5H1042.5H1043.5V113.5H1045.5H1045.5V116.5H1048.5H1049.5V113.5H1051.5H1051.5V116.5H1054.5H1057.5H1060.5H1061.5V113.5H1063.5H1063.5V116.5H1066.5H1067.5V113.5H1069.5H1069.5V116.5H1072.5H1075.5H1076.5V113.5H1078.5H1078.5V116.5H1081.5H1082.5V113.5H1084.5H1087.5H1087.5V116.5H1090.5H1091.5V113.5H1093.5H1093.5V116.5H1096.5H1099.5H1100.5V113.5H1102.5H1102.5V121.5H1105.5H1106.5V116.5H1108.5H1111.5H1112.5V113.5H1114.5H1117.5H1120.5H1120.5V116.5H1123.5H1124.5V113.5H1126.5H1126.5V116.5H1129.5H1130.5V113.5H1132.5H1135.5H1135.5V116.5H1138.5H1139.5V113.5H1141.5H1144.5H1144.5V116.5H1147.5H1148.5V113.5H1150.5H1153.5H1156.5H1156.5V116.5H1159.5H1160.5V113.5H1162.5H1165.5H1165.5V116.5H1168.5H1171.5H1172.5V113.5H1174.5H1177.5H1180.5H1180.5V116.5H1183.5H1184.5V113.5H1186.5H1186.5V116.5H1189.5H1192.5H1192.5V121.5H1195.5H1196.5V116.5H1198.5H1199.5V113.5H1201.5H1204.5H1204.5V121.5H1207.5H1208.5V113.5H1210.5H1213.5H1213.5V116.5H1216.5H1216.5V121.5H1219.5H1220.5V113.5H1222.5H1225.5H1225.5V116.5H1228.5H1231.5H1234.5H1237.5H1238.5V113.5H1240.5H1240.5V116.5H1243.5H1244.5V113.5H1246.5H1249.5H1249.5V116.5H1252.5H1255.5H1256.5V113.5H1258.5H1261.5H1264.5H1264.5V116.5H1267.5H1267.5V121.5H1270.5H1271.5V116.5H1273.5H1274.5V113.5H1276.5H1276.5V116.5H1279.5H1280.5V113.5H1282.5H1285.5H1288.5H1291.5H1291.5V116.5H1294.5H1297.5H1300.5H1303.5H1306.5H1309.5H1312.5H1315.5H1318.5H1319.5V113.5H1321.5H1321.5V121.5H1324.5H1325.5V116.5H1327.5H1330.5H1333.5H1336.5H1339.5H1342.5H1343.5V113.5H1345.5H1345.5V116.5H1348.5H1351.5H1354.5H1355.5V113.5H1357.5H1360.5H1360.5V116.5H1363.5H1364.5V113.5H1366.5H1366.5V116.5H1369.5H1370.5V113.5H1372.5H1372.5V116.5H1375.5H1378.5H1378.5V121.5H1381.5H1382.5V116.5H1384.5H1387.5H1388.5V113.5H1390.5H1390.5V116.5H1393.5H1396.5H1399.5H1400.5V113.5H1402.5H1402.5V116.5H1405.5H1406.5V113.5H1408.5H1411.5H1414.5H1417.5H1420.5H1423.5H1426.5H1429.5H1432.5H1435.5H1438.5H1441.5H1441.5V116.5H1444.5H1445.5V113.5H1447.5H1447.5V116.5H1450.5H1451.5V113.5H1453.5H1453.5V116.5H1456.5H1459.5H1460.5V113.5H1462.5H1462.5V116.5H1465.5H1468.5H1469.5V113.5H1471.5H1474.5H1477.5H1480.5H1480.5V121.5H1483.5H1484.5V113.5H1486.5H1489.5H1489.5V116.5H1492.5H1493.5V113.5H1495.5H1495.5V116.5H1498.5H1501.5H1502.5V113.5H1504.5H1507.5H1507.5V116.5H1510.5H1511.5V113.5H1513.5H1516.5H1519.5H1519.5V121.5H1522.5H1523.5V113.5H1525.5H1528.5H1528.5V116.5H1531.5H1532.5V110.5H1534.5H1534.5V113.5H1537.5H1540.5H1540.5V116.5H1543.5H1546.5H1547.5V113.5H1549.5H1552.5H1555.5H1558.5H1561.5H1564.5H1564.5V116.5H1567.5H1568.5V113.5H1570.5H1573.5H1573.5V116.5H1576.5H1579.5H1580.5V113.5H1582.5H1582.5V116.5H1585.5H1586.5V113.5H1588.5H1588.5V116.5H1591.5H1592.5V113.5H1594.5H1597.5H1600.5H1603.5H1606.5H1609.5H1609.5V116.5H1612.5H1613.5V113.5H1615.5H1618.5H1621.5H1621.5V116.5H1624.5H1625.5V113.5H1627.5H1627.5V116.5H1630.5H1631.5V113.5H1633.5H1636.5H1639.5H1642.5H1645.5H1645.5V116.5H1648.5H1649.5V113.5H1651.5H1654.5H1657.5H1660.5H1660.5V116.5H1663.5H1664.5V113.5H1666.5H1669.5H1672.5H1675.5H1678.5H1681.5H1684.5H1687.5H1687.5V116.5H1690.5H1693.5H1694.5V113.5H1696.5H1699.5H1702.5H1702.5V116.5H1705.5H1706.5V113.5H1708.5H1709.5V110.5H1711.5H1711.5V116.5H1714.5H1715.5V113.5H1717.5H1717.5V116.5H1720.5H1721.5V113.5H1723.5H1726.5H1729.5H1732.5H1735.5H1738.5H1738.5V116.5H1741.5H1742.5V113.5H1744.5H1747.5H1747.5V116.5H1750.5H1751.5V113.5H1753.5H1756.5H1759.5H1759.5V116.5H1762.5H1763.5V113.5H1765.5H1768.5H1771.5H1774.5H1774.5V116.5H1777.5H1778.5V113.5H1780.5H1780.5V121.5H1783.5H1784.5V116.5H1786.5H1787.5V113.5H1789.5H1792.5H1795.5H1795.5V116.5H1798.5H1799.5V113.5H1801.5H1801.5V116.5H1804.5H1805.5V113.5H1807.5H1810.5H1813.5H1816.5H1817.5V110.5H1819.5H1819.5V113.5H1822.5H1823.5V110.5H1825.5H1825.5V113.5H1828.5H1829.5V105.5H1831.5H1831.5V110.5H1834.5H1834.5V113.5H1837.5H1838.5V110.5H1840.5H1840.5V113.5H1843.5H1846.5H1849.5H1852.5H1855.5H1858.5H1861.5H1864.5H1867.5H1870.5H1873.5H1876.5H1879.5H1882.5H1885.5H1888.5H1891.5H1894.5H1897.5H1900.5H1903.5H1906.5H1909.5H1912.5H1915.5H1918.5H1921.5H1924.5H1927.5H1930.5H1933.5H1936.5H1936.5V116.5H1939.5H1940.5V113.5H1942.5H1945.5H1945.5V116.5H1948.5H1949.5V113.5H1951.5H1954.5H1957.5H1957.5V116.5H1960.5H1961.5V113.5H1963.5H1966.5H1969.5H1972.5H1972.5V116.5H1975.5H1978.5H1979.5V113.5H1981.5H1981.5V116.5H1984.5H1987.5H1990.5H1993.5H1994.5V113.5H1996.5H1999.5H1999.5V116.5H2002.5H2003.5V113.5H2005.5H2008.5H2008.5V116.5H2011.5H2012.5V113.5H2014.5H2017.5H2020.5H2023.5H2026.5H2026.5V116.5H2026.5" fill="none" stroke="#ff1010" stroke-width="1"/>
<path d="M0 0.5H2027.5V307.5H0" stroke="#8c8c8c" stroke-width="1" fill="none"/>
<defs><linearGradient id="shc2" x1="0" x2="1"><stop offset="0" stop-color="#4e5e64" stop-opacity="0.5"/><stop offset="0.1" stop-color="#5a6a70" stop-opacity="0.22"/><stop offset="0.5" stop-color="#5a6a70" stop-opacity="0.07"/><stop offset="1" stop-color="#5a6a70" stop-opacity="0"/></linearGradient></defs>
<rect x="0" y="1" width="36" height="306" fill="url(#shc2)"/>
</svg>
<div class="tb" style="left:3711px;top:411px;width:102px;height:25px">110</div>
<div class="sq" style="left:3719px;top:532px;background:#f6fff6"></div>
<div class="sq" style="left:3751px;top:532px;background:#e0f6fc"></div>
<div class="sq" style="left:3783px;top:532px;background:#a9c3e6"></div>
<div class="tb" style="left:3711px;top:569px;width:100px;height:25px">70 °C</div>
<div class="gbtn" style="left:3713px;top:612px;width:100px;height:32px;line-height:30px">Auto Fit</div>
<div class="gbtn" style="left:3713px;top:648px;width:100px;height:32px;line-height:30px">Reset</div>
<div class="tb" style="left:3711px;top:693px;width:102px;height:25px">1</div>
<div class="a" style="left:1677px;top:731px;width:2153px;height:354px;background:#f0f0f0;border:1px solid #8a8a8a;border-radius:8px;box-shadow:0 1px 1px rgba(0,0,0,0.12),0 -1px 1px rgba(0,0,0,0.08)"></div>
<div class="a" style="left:1678px;top:732px;width:2151px;height:43px;background:#f3f3f3;border-radius:7px 7px 0 0;border-top:1px solid #f9f9f9"></div>
<svg class="i" style="left:1686px;top:740px" width="24" height="24"><use href="#logo"/></svg>
<div class="a" style="left:1716px;top:741px;font-size:17.5px;line-height:24px;color:#8a8a8a;white-space:nowrap">CPU Package Power</div>
<svg class="i" style="left:3796px;top:745px" width="16" height="16"><path d="M0.5 0.5 L15.5 15.5 M15.5 0.5 L0.5 15.5" stroke="#8e8e8e" stroke-width="1.3"/></svg>
<svg class="i" style="left:1678px;top:775px" width="2028" height="308">
<rect x="0" y="0" width="2028" height="308" fill="#e0f6fc"/>
<defs><linearGradient id="gc3" x1="0" y1="0" x2="0" y2="307" gradientUnits="userSpaceOnUse"><stop offset="0" stop-color="#3a0036"/><stop offset="1" stop-color="#12000c"/></linearGradient></defs><path d="M89 307V193H92V208H95V205H98V127H101V146H104V140H107V146H110V149H113V149H116V151H119V151H122V151H125V151H128V151H131V151H134V152H137V152H140V151H143V151H146V150H149V151H152V151H155V151H158V151H161V151H164V152H167V151H170V151H173V151H176V151H179V151H182V150H185V150H188V151H191V151H194V152H197V152H200V152H203V152H206V152H209V152H212V152H215V152H218V151H221V151H224V151H227V151H230V151H233V151H236V151H239V151H242V151H245V151H248V151H251V151H254V151H257V151H260V151H263V151H266V150H269V151H272V151H275V151H278V151H281V150H284V151H287V151H290V151H293V151H296V151H299V150H302V151H305V151H308V151H311V151H314V151H317V151H320V151H323V151H326V151H329V151H332V151H335V151H338V151H341V151H344V151H347V151H350V151H353V151H356V151H359V151H362V151H365V151H368V151H371V151H374V151H377V151H380V151H383V151H386V151H389V151H392V151H395V150H398V150H401V150H404V151H407V151H410V150H413V151H416V151H419V151H422V151H425V150H428V150H431V151H434V151H437V151H440V151H443V151H446V151H449V151H452V150H455V150H458V150H461V139H464V131H467V132H470V134H473V129H476V144H479V142H482V151H485V151H488V151H491V151H494V150H497V150H500V151H503V151H506V151H509V151H512V151H515V151H518V151H521V151H524V151H527V151H530V151H533V151H536V151H539V151H542V151H545V151H548V151H551V151H554V150H557V151H560V151H563V151H566V150H569V150H572V150H575V150H578V151H581V151H584V151H587V151H590V151H593V151H596V151H599V151H602V151H605V151H608V151H611V151H614V151H617V151H620V152H623V152H626V151H629V151H632V151H635V151H638V151H641V151H644V151H647V151H650V151H653V151H656V151H659V151H662V151H665V151H668V151H671V151H674V151H677V151H680V151H683V151H686V151H689V151H692V151H695V150H698V150H701V150H704V151H707V151H710V151H713V151H716V151H719V151H722V151H725V151H728V151H731V151H734V152H737V151H740V151H743V151H746V151H749V151H752V151H755V151H758V151H761V151H764V151H767V151H770V151H773V151H776V151H779V151H782V151H785V151H788V150H791V151H794V151H797V152H800V152H803V151H806V151H809V151H812V151H815V151H818V151H821V151H824V151H827V151H830V151H833V151H836V151H839V151H842V151H845V151H848V151H851V151H854V151H857V151H860V151H863V151H866V151H869V151H872V150H875V150H878V150H881V150H884V151H887V152H890V151H893V151H896V151H899V151H902V151H905V151H908V151H911V151H914V151H917V151H920V151H923V151H926V151H929V151H932V151H935V151H938V151H941V151H944V152H947V151H950V151H953V151H956V151H959V151H962V151H965V151H968V151H971V151H974V152H977V152H980V151H983V151H986V151H989V152H992V152H995V151H998V151H1001V151H1004V151H1007V151H1010V151H1013V151H1016V151H1019V151H1022V151H1025V151H1028V151H1031V151H1034V151H1037V151H1040V151H1043V151H1046V151H1049V151H1052V151H1055V152H1058V151H1061V151H1064V151H1067V151H1070V151H1073V151H1076V151H1079V151H1082V151H1085V151H1088V151H1091V151H1094V151H1097V151H1100V151H1103V151H1106V151H1109V151H1112V151H1115V151H1118V152H1121V152H1124V152H1127V152H1130V151H1133V151H1136V151H1139V151H1142V151H1145V151H1148V151H1151V151H1154V151H1157V151H1160V151H1163V151H1166V150H1169V151H1172V150H1175V151H1178V152H1181V152H1184V152H1187V151H1190V150H1193V150H1196V151H1199V152H1202V152H1205V152H1208V152H1211V151H1214V151H1217V151H1220V151H1223V151H1226V151H1229V151H1232V151H1235V151H1238V151H1241V151H1244V150H1247V152H1250V151H1253V151H1256V151H1259V151H1262V151H1265V151H1268V151H1271V152H1274V151H1277V151H1280V151H1283V151H1286V151H1289V150H1292V150H1295V150H1298V151H1301V151H1304V151H1307V151H1310V151H1313V151H1316V151H1319V150H1322V151H1325V151H1328V151H1331V151H1334V151H1337V151H1340V151H1343V151H1346V151H1349V151H1352V150H1355V150H1358V150H1361V152H1364V152H1367V152H1370V152H1373V151H1376V151H1379V151H1382V151H1385V151H1388V151H1391V151H1394V152H1397V152H1400V152H1403V151H1406V151H1409V151H1412V151H1415V151H1418V151H1421V150H1424V150H1427V150H1430V151H1433V151H1436V151H1439V151H1442V151H1445V151H1448V151H1451V151H1454V151H1457V151H1460V151H1463V151H1466V151H1469V151H1472V151H1475V151H1478V152H1481V152H1484V151H1487V151H1490V150H1493V152H1496V151H1499V151H1502V151H1505V151H1508V151H1511V151H1514V151H1517V151H1520V151H1523V151H1526V151H1529V151H1532V151H1535V150H1538V150H1541V150H1544V150H1547V151H1550V151H1553V151H1556V151H1559V151H1562V151H1565V151H1568V151H1571V151H1574V152H1577V152H1580V152H1583V152H1586V151H1589V151H1592V151H1595V151H1598V151H1601V151H1604V151H1607V151H1610V151H1613V151H1616V151H1619V151H1622V151H1625V152H1628V151H1631V151H1634V151H1637V151H1640V151H1643V151H1646V151H1649V150H1652V150H1655V150H1658V151H1661V151H1664V151H1667V151H1670V152H1673V152H1676V151H1679V151H1682V152H1685V151H1688V151H1691V151H1694V152H1697V152H1700V152H1703V152H1706V151H1709V151H1712V151H1715V150H1718V151H1721V151H1724V150H1727V150H1730V150H1733V151H1736V151H1739V151H1742V152H1745V152H1748V152H1751V152H1754V151H1757V151H1760V150H1763V151H1766V151H1769V151H1772V151H1775V151H1778V151H1781V151H1784V151H1787V150H1790V151H1793V151H1796V151H1799V152H1802V152H1805V151H1808V151H1811V151H1814V151H1817V151H1820V143H1823V132H1826V132H1829V132H1832V129H1835V144H1838V141H1841V143H1844V151H1847V151H1850V150H1853V140H1856V150H1859V150H1862V151H1865V151H1868V151H1871V151H1874V151H1877V151H1880V151H1883V151H1886V151H1889V151H1892V151H1895V151H1898V151H1901V151H1904V151H1907V151H1910V150H1913V150H1916V150H1919V150H1922V151H1925V151H1928V151H1931V151H1934V151H1937V151H1940V151H1943V151H1946V151H1949V151H1952V151H1955V151H1958V151H1961V151H1964V151H1967V151H1970V151H1973V150H1976V151H1979V151H1982V151H1985V152H1988V152H1991V151H1994V151H1997V152H2000V151H2003V151H2006V151H2009V151H2012V151H2015V152H2018V152H2021V151H2024V151H2027V151H2027V307Z" fill="url(#gc3)"/>
<path d="M8.5 1V307M28.5 1V307M48.5 1V307M68.5 1V307M88.5 1V307M109.5 1V307M129.5 1V307M149.5 1V307M169.5 1V307M189.5 1V307M209.5 1V307M229.5 1V307M249.5 1V307M269.5 1V307M289.5 1V307M309.5 1V307M329.5 1V307M349.5 1V307M369.5 1V307M389.5 1V307M409.5 1V307M429.5 1V307M449.5 1V307M469.5 1V307M489.5 1V307M509.5 1V307M529.5 1V307M549.5 1V307M569.5 1V307M589.5 1V307M609.5 1V307M629.5 1V307M649.5 1V307M669.5 1V307M689.5 1V307M709.5 1V307M729.5 1V307M749.5 1V307M769.5 1V307M789.5 1V307M809.5 1V307M829.5 1V307M849.5 1V307M869.5 1V307M889.5 1V307M909.5 1V307M929.5 1V307M949.5 1V307M969.5 1V307M989.5 1V307M1009.5 1V307M1029.5 1V307M1049.5 1V307M1069.5 1V307M1089.5 1V307M1109.5 1V307M1129.5 1V307M1149.5 1V307M1169.5 1V307M1189.5 1V307M1209.5 1V307M1229.5 1V307M1249.5 1V307M1269.5 1V307M1289.5 1V307M1309.5 1V307M1329.5 1V307M1349.5 1V307M1369.5 1V307M1389.5 1V307M1409.5 1V307M1429.5 1V307M1449.5 1V307M1469.5 1V307M1489.5 1V307M1509.5 1V307M1529.5 1V307M1549.5 1V307M1569.5 1V307M1589.5 1V307M1609.5 1V307M1629.5 1V307M1649.5 1V307M1669.5 1V307M1689.5 1V307M1709.5 1V307M1729.5 1V307M1749.5 1V307M1769.5 1V307M1789.5 1V307M1809.5 1V307M1829.5 1V307M1849.5 1V307M1869.5 1V307M1889.5 1V307M1909.5 1V307M1929.5 1V307M1949.5 1V307M1969.5 1V307M1989.5 1V307M2009.5 1V307M0 306.5H2027M0 286.5H2027M0 266.5H2027M0 246.5H2027M0 226.5H2027M0 206.5H2027M0 186.5H2027M0 166.5H2027M0 146.5H2027M0 126.5H2027M0 106.5H2027M0 86.5H2027M0 66.5H2027M0 46.5H2027M0 26.5H2027M0 6.5H2027" stroke="#abc5e8" stroke-width="1" fill="none"/>
<path d="M89.5 193.5H91.5H91.5V208.5H94.5H95.5V205.5H97.5H98.5V127.5H100.5H100.5V146.5H103.5H104.5V140.5H106.5H106.5V146.5H109.5H109.5V149.5H112.5H115.5H115.5V151.5H118.5H121.5H124.5H127.5H130.5H133.5H133.5V152.5H136.5H139.5H140.5V151.5H142.5H145.5H146.5V150.5H148.5H148.5V151.5H151.5H154.5H157.5H160.5H163.5H163.5V152.5H166.5H167.5V151.5H169.5H172.5H175.5H178.5H181.5H182.5V150.5H184.5H187.5H187.5V151.5H190.5H193.5H193.5V152.5H196.5H199.5H202.5H205.5H208.5H211.5H214.5H217.5H218.5V151.5H220.5H223.5H226.5H229.5H232.5H235.5H238.5H241.5H244.5H247.5H250.5H253.5H256.5H259.5H262.5H265.5H266.5V150.5H268.5H268.5V151.5H271.5H274.5H277.5H280.5H281.5V150.5H283.5H283.5V151.5H286.5H289.5H292.5H295.5H298.5H299.5V150.5H301.5H301.5V151.5H304.5H307.5H310.5H313.5H316.5H319.5H322.5H325.5H328.5H331.5H334.5H337.5H340.5H343.5H346.5H349.5H352.5H355.5H358.5H361.5H364.5H367.5H370.5H373.5H376.5H379.5H382.5H385.5H388.5H391.5H394.5H395.5V150.5H397.5H400.5H403.5H403.5V151.5H406.5H409.5H410.5V150.5H412.5H412.5V151.5H415.5H418.5H421.5H424.5H425.5V150.5H427.5H430.5H430.5V151.5H433.5H436.5H439.5H442.5H445.5H448.5H451.5H452.5V150.5H454.5H457.5H460.5H461.5V139.5H463.5H464.5V131.5H466.5H466.5V132.5H469.5H469.5V134.5H472.5H473.5V129.5H475.5H475.5V144.5H478.5H479.5V142.5H481.5H481.5V151.5H484.5H487.5H490.5H493.5H494.5V150.5H496.5H499.5H499.5V151.5H502.5H505.5H508.5H511.5H514.5H517.5H520.5H523.5H526.5H529.5H532.5H535.5H538.5H541.5H544.5H547.5H550.5H553.5H554.5V150.5H556.5H556.5V151.5H559.5H562.5H565.5H566.5V150.5H568.5H571.5H574.5H577.5H577.5V151.5H580.5H583.5H586.5H589.5H592.5H595.5H598.5H601.5H604.5H607.5H610.5H613.5H616.5H619.5H619.5V152.5H622.5H625.5H626.5V151.5H628.5H631.5H634.5H637.5H640.5H643.5H646.5H649.5H652.5H655.5H658.5H661.5H664.5H667.5H670.5H673.5H676.5H679.5H682.5H685.5H688.5H691.5H694.5H695.5V150.5H697.5H700.5H703.5H703.5V151.5H706.5H709.5H712.5H715.5H718.5H721.5H724.5H727.5H730.5H733.5H733.5V152.5H736.5H737.5V151.5H739.5H742.5H745.5H748.5H751.5H754.5H757.5H760.5H763.5H766.5H769.5H772.5H775.5H778.5H781.5H784.5H787.5H788.5V150.5H790.5H790.5V151.5H793.5H796.5H796.5V152.5H799.5H802.5H803.5V151.5H805.5H808.5H811.5H814.5H817.5H820.5H823.5H826.5H829.5H832.5H835.5H838.5H841.5H844.5H847.5H850.5H853.5H856.5H859.5H862.5H865.5H868.5H871.5H872.5V150.5H874.5H877.5H880.5H883.5H883.5V151.5H886.5H886.5V152.5H889.5H890.5V151.5H892.5H895.5H898.5H901.5H904.5H907.5H910.5H913.5H916.5H919.5H922.5H925.5H928.5H931.5H934.5H937.5H940.5H943.5H943.5V152.5H946.5H947.5V151.5H949.5H952.5H955.5H958.5H961.5H964.5H967.5H970.5H973.5H973.5V152.5H976.5H979.5H980.5V151.5H982.5H985.5H988.5H988.5V152.5H991.5H994.5H995.5V151.5H997.5H1000.5H1003.5H1006.5H1009.5H1012.5H1015.5H1018.5H1021.5H1024.5H1027.5H1030.5H1033.5H1036.5H1039.5H1042.5H1045.5H1048.5H1051.5H1054.5H1054.5V152.5H1057.5H1058.5V151.5H1060.5H1063.5H1066.5H1069.5H1072.5H1075.5H1078.5H1081.5H1084.5H1087.5H1090.5H1093.5H1096.5H1099.5H1102.5H1105.5H1108.5H1111.5H1114.5H1117.5H1117.5V152.5H1120.5H1123.5H1126.5H1129.5H1130.5V151.5H1132.5H1135.5H1138.5H1141.5H1144.5H1147.5H1150.5H1153.5H1156.5H1159.5H1162.5H1165.5H1166.5V150.5H1168.5H1168.5V151.5H1171.5H1172.5V150.5H1174.5H1174.5V151.5H1177.5H1177.5V152.5H1180.5H1183.5H1186.5H1187.5V151.5H1189.5H1190.5V150.5H1192.5H1195.5H1195.5V151.5H1198.5H1198.5V152.5H1201.5H1204.5H1207.5H1210.5H1211.5V151.5H1213.5H1216.5H1219.5H1222.5H1225.5H1228.5H1231.5H1234.5H1237.5H1240.5H1243.5H1244.5V150.5H1246.5H1246.5V152.5H1249.5H1250.5V151.5H1252.5H1255.5H1258.5H1261.5H1264.5H1267.5H1270.5H1270.5V152.5H1273.5H1274.5V151.5H1276.5H1279.5H1282.5H1285.5H1288.5H1289.5V150.5H1291.5H1294.5H1297.5H1297.5V151.5H1300.5H1303.5H1306.5H1309.5H1312.5H1315.5H1318.5H1319.5V150.5H1321.5H1321.5V151.5H1324.5H1327.5H1330.5H1333.5H1336.5H1339.5H1342.5H1345.5H1348.5H1351.5H1352.5V150.5H1354.5H1357.5H1360.5H1360.5V152.5H1363.5H1366.5H1369.5H1372.5H1373.5V151.5H1375.5H1378.5H1381.5H1384.5H1387.5H1390.5H1393.5H1393.5V152.5H1396.5H1399.5H1402.5H1403.5V151.5H1405.5H1408.5H1411.5H1414.5H1417.5H1420.5H1421.5V150.5H1423.5H1426.5H1429.5H1429.5V151.5H1432.5H1435.5H1438.5H1441.5H1444.5H1447.5H1450.5H1453.5H1456.5H1459.5H1462.5H1465.5H1468.5H1471.5H1474.5H1477.5H1477.5V152.5H1480.5H1483.5H1484.5V151.5H1486.5H1489.5H1490.5V150.5H1492.5H1492.5V152.5H1495.5H1496.5V151.5H1498.5H1501.5H1504.5H1507.5H1510.5H1513.5H1516.5H1519.5H1522.5H1525.5H1528.5H1531.5H1534.5H1535.5V150.5H1537.5H1540.5H1543.5H1546.5H1546.5V151.5H1549.5H1552.5H1555.5H1558.5H1561.5H1564.5H1567.5H1570.5H1573.5H1573.5V152.5H1576.5H1579.5H1582.5H1585.5H1586.5V151.5H1588.5H1591.5H1594.5H1597.5H1600.5H1603.5H1606.5H1609.5H1612.5H1615.5H1618.5H1621.5H1624.5H1624.5V152.5H1627.5H1628.5V151.5H1630.5H1633.5H1636.5H1639.5H1642.5H1645.5H1648.5H1649.5V150.5H1651.5H1654.5H1657.5H1657.5V151.5H1660.5H1663.5H1666.5H1669.5H1669.5V152.5H1672.5H1675.5H1676.5V151.5H1678.5H1681.5H1681.5V152.5H1684.5H1685.5V151.5H1687.5H1690.5H1693.5H1693.5V152.5H1696.5H1699.5H1702.5H1705.5H1706.5V151.5H1708.5H1711.5H1714.5H1715.5V150.5H1717.5H1717.5V151.5H1720.5H1723.5H1724.5V150.5H1726.5H1729.5H1732.5H1732.5V151.5H1735.5H1738.5H1741.5H1741.5V152.5H1744.5H1747.5H1750.5H1753.5H1754.5V151.5H1756.5H1759.5H1760.5V150.5H1762.5H1762.5V151.5H1765.5H1768.5H1771.5H1774.5H1777.5H1780.5H1783.5H1786.5H1787.5V150.5H1789.5H1789.5V151.5H1792.5H1795.5H1798.5H1798.5V152.5H1801.5H1804.5H1805.5V151.5H1807.5H1810.5H1813.5H1816.5H1819.5H1820.5V143.5H1822.5H1823.5V132.5H1825.5H1828.5H1831.5H1832.5V129.5H1834.5H1834.5V144.5H1837.5H1838.5V141.5H1840.5H1840.5V143.5H1843.5H1843.5V151.5H1846.5H1849.5H1850.5V150.5H1852.5H1853.5V140.5H1855.5H1855.5V150.5H1858.5H1861.5H1861.5V151.5H1864.5H1867.5H1870.5H1873.5H1876.5H1879.5H1882.5H1885.5H1888.5H1891.5H1894.5H1897.5H1900.5H1903.5H1906.5H1909.5H1910.5V150.5H1912.5H1915.5H1918.5H1921.5H1921.5V151.5H1924.5H1927.5H1930.5H1933.5H1936.5H1939.5H1942.5H1945.5H1948.5H1951.5H1954.5H1957.5H1960.5H1963.5H1966.5H1969.5H1972.5H1973.5V150.5H1975.5H1975.5V151.5H1978.5H1981.5H1984.5H1984.5V152.5H1987.5H1990.5H1991.5V151.5H1993.5H1996.5H1996.5V152.5H1999.5H2000.5V151.5H2002.5H2005.5H2008.5H2011.5H2014.5H2014.5V152.5H2017.5H2020.5H2021.5V151.5H2023.5H2026.5H2026.5" fill="none" stroke="#4a0a44" stroke-width="1"/>
<path d="M0 0.5H2027.5V307.5H0" stroke="#8c8c8c" stroke-width="1" fill="none"/>
<defs><linearGradient id="shc3" x1="0" x2="1"><stop offset="0" stop-color="#4e5e64" stop-opacity="0.5"/><stop offset="0.1" stop-color="#5a6a70" stop-opacity="0.22"/><stop offset="0.5" stop-color="#5a6a70" stop-opacity="0.07"/><stop offset="1" stop-color="#5a6a70" stop-opacity="0"/></linearGradient></defs>
<rect x="0" y="1" width="36" height="306" fill="url(#shc3)"/>
</svg>
<div class="tb" style="left:3711px;top:776px;width:102px;height:25px">20.000</div>
<div class="sq" style="left:3719px;top:897px;background:#f6fff6"></div>
<div class="sq" style="left:3751px;top:897px;background:#e0f6fc"></div>
<div class="sq" style="left:3783px;top:897px;background:#a9c3e6"></div>
<div class="tb" style="left:3711px;top:934px;width:100px;height:25px">10.331 W</div>
<div class="gbtn" style="left:3713px;top:977px;width:100px;height:32px;line-height:30px">Auto Fit</div>
<div class="gbtn" style="left:3713px;top:1013px;width:100px;height:32px;line-height:30px">Reset</div>
<div class="tb" style="left:3711px;top:1058px;width:102px;height:25px">0.000</div>
<div class="a" style="left:1677px;top:1096px;width:2153px;height:326px;background:#f0f0f0;border:1px solid #8a8a8a;border-radius:8px;box-shadow:0 1px 1px rgba(0,0,0,0.12),0 -1px 1px rgba(0,0,0,0.08)"></div>
<div class="a" style="left:1678px;top:1097px;width:2151px;height:43px;background:#f3f3f3;border-radius:7px 7px 0 0;border-top:1px solid #f9f9f9"></div>
<svg class="i" style="left:1686px;top:1105px" width="24" height="24"><use href="#logo"/></svg>
<div class="a" style="left:1716px;top:1106px;font-size:17.5px;line-height:24px;color:#8a8a8a;white-space:nowrap">GPU Clock</div>
<svg class="i" style="left:3796px;top:1110px" width="16" height="16"><path d="M0.5 0.5 L15.5 15.5 M15.5 0.5 L0.5 15.5" stroke="#8e8e8e" stroke-width="1.3"/></svg>
<svg class="i" style="left:1678px;top:1140px" width="2028" height="280">
<rect x="0" y="0" width="2028" height="280" fill="#e0f6fc"/>
<defs><linearGradient id="gc4" x1="0" y1="0" x2="0" y2="279" gradientUnits="userSpaceOnUse"><stop offset="0" stop-color="#3c7474"/><stop offset="1" stop-color="#0e1c1c"/></linearGradient></defs><path d="M89 279V197H92V197H95V197H98V154H101V197H104V197H107V197H110V197H113V154H116V197H119V197H122V197H125V99H128V168H131V197H134V71H137V127H140V182H143V197H146V197H149V154H152V197H155V140H158V168H161V197H164V197H167V197H170V154H173V182H176V197H179V197H182V197H185V197H188V197H191V113H194V113H197V113H200V113H203V168H206V154H209V99H212V154H215V182H218V197H221V197H224V197H227V197H230V113H233V154H236V182H239V140H242V154H245V154H248V182H251V197H254V197H257V197H260V197H263V197H266V197H269V197H272V197H275V197H278V197H281V197H284V197H287V197H290V197H293V197H296V197H299V197H302V197H305V197H308V197H311V197H314V197H317V197H320V197H323V197H326V197H329V197H332V197H335V197H338V197H341V197H344V197H347V197H350V197H353V197H356V99H359V168H362V197H365V197H368V182H371V197H374V197H377V197H380V197H383V197H386V197H389V197H392V197H395V197H398V197H401V197H404V197H407V197H410V197H413V197H416V197H419V197H422V197H425V140H428V182H431V197H434V197H437V197H440V197H443V197H446V197H449V197H452V197H455V197H458V197H461V197H464V197H467V197H470V197H473V197H476V197H479V197H482V197H485V197H488V197H491V197H494V197H497V197H500V197H503V197H506V197H509V197H512V197H515V197H518V197H521V140H524V168H527V197H530V197H533V197H536V197H539V197H542V197H545V197H548V197H551V197H554V197H557V197H560V197H563V197H566V197H569V197H572V197H575V140H578V113H581V154H584V197H587V197H590V197H593V197H596V197H599V197H602V197H605V197H608V197H611V197H614V197H617V197H620V197H623V197H626V197H629V197H632V197H635V197H638V71H641V127H644V168H647V197H650V197H653V197H656V197H659V197H662V197H665V197H668V113H671V99H674V168H677V113H680V99H683V182H686V197H689V197H692V197H695V197H698V197H701V197H704V140H707V182H710V197H713V197H716V197H719V197H722V197H725V197H728V197H731V197H734V197H737V197H740V197H743V197H746V197H749V197H752V197H755V197H758V197H761V197H764V197H767V197H770V197H773V197H776V197H779V197H782V197H785V197H788V182H791V197H794V197H797V197H800V197H803V197H806V197H809V197H812V127H815V182H818V197H821V197H824V197H827V197H830V197H833V197H836V197H839V197H842V197H845V197H848V197H851V197H854V197H857V197H860V197H863V197H866V197H869V182H872V197H875V197H878V197H881V197H884V197H887V197H890V197H893V197H896V197H899V197H902V197H905V197H908V197H911V197H914V197H917V197H920V197H923V197H926V197H929V197H932V197H935V197H938V197H941V197H944V197H947V197H950V197H953V197H956V197H959V197H962V197H965V197H968V197H971V197H974V197H977V197H980V197H983V197H986V197H989V197H992V197H995V197H998V197H1001V197H1004V197H1007V197H1010V197H1013V197H1016V154H1019V99H1022V182H1025V154H1028V154H1031V99H1034V140H1037V182H1040V197H1043V197H1046V197H1049V71H1052V127H1055V168H1058V168H1061V197H1064V197H1067V197H1070V197H1073V197H1076V197H1079V197H1082V197H1085V197H1088V154H1091V197H1094V71H1097V154H1100V197H1103V197H1106V197H1109V113H1112V154H1115V182H1118V197H1121V197H1124V113H1127V154H1130V197H1133V197H1136V197H1139V99H1142V154H1145V197H1148V140H1151V168H1154V197H1157V197H1160V197H1163V197H1166V197H1169V197H1172V197H1175V182H1178V197H1181V197H1184V197H1187V113H1190V154H1193V197H1196V182H1199V197H1202V197H1205V197H1208V197H1211V197H1214V197H1217V197H1220V197H1223V197H1226V197H1229V197H1232V197H1235V197H1238V197H1241V197H1244V197H1247V197H1250V197H1253V197H1256V197H1259V197H1262V197H1265V197H1268V197H1271V197H1274V197H1277V197H1280V140H1283V154H1286V154H1289V99H1292V154H1295V182H1298V197H1301V197H1304V197H1307V197H1310V154H1313V127H1316V154H1319V182H1322V197H1325V197H1328V197H1331V197H1334V197H1337V197H1340V197H1343V197H1346V197H1349V197H1352V197H1355V197H1358V197H1361V197H1364V197H1367V197H1370V197H1373V197H1376V197H1379V197H1382V197H1385V197H1388V197H1391V197H1394V197H1397V197H1400V197H1403V197H1406V197H1409V71H1412V127H1415V168H1418V197H1421V197H1424V197H1427V197H1430V197H1433V197H1436V154H1439V197H1442V197H1445V197H1448V197H1451V99H1454V168H1457V99H1460V168H1463V197H1466V197H1469V197H1472V197H1475V197H1478V197H1481V197H1484V197H1487V197H1490V197H1493V197H1496V154H1499V197H1502V197H1505V197H1508V197H1511V197H1514V197H1517V197H1520V197H1523V197H1526V197H1529V197H1532V197H1535V197H1538V154H1541V197H1544V197H1547V197H1550V197H1553V197H1556V127H1559V182H1562V197H1565V197H1568V197H1571V113H1574V168H1577V113H1580V182H1583V197H1586V197H1589V197H1592V154H1595V154H1598V140H1601V154H1604V154H1607V99H1610V154H1613V140H1616V99H1619V140H1622V197H1625V197H1628V197H1631V197H1634V197H1637V197H1640V197H1643V197H1646V140H1649V182H1652V197H1655V197H1658V197H1661V197H1664V197H1667V197H1670V197H1673V197H1676V197H1679V197H1682V197H1685V197H1688V197H1691V197H1694V197H1697V197H1700V197H1703V197H1706V197H1709V197H1712V197H1715V197H1718V197H1721V197H1724V197H1727V197H1730V197H1733V197H1736V197H1739V197H1742V197H1745V113H1748V154H1751V154H1754V197H1757V197H1760V197H1763V197H1766V71H1769V127H1772V154H1775V197H1778V197H1781V197H1784V197H1787V197H1790V197H1793V197H1796V197H1799V197H1802V197H1805V197H1808V197H1811V197H1814V197H1817V197H1820V197H1823V197H1826V197H1829V197H1832V197H1835V197H1838V197H1841V197H1844V140H1847V197H1850V197H1853V197H1856V197H1859V154H1862V182H1865V197H1868V197H1871V197H1874V197H1877V197H1880V197H1883V197H1886V197H1889V197H1892V197H1895V197H1898V197H1901V197H1904V197H1907V197H1910V197H1913V197H1916V197H1919V197H1922V197H1925V197H1928V113H1931V182H1934V197H1937V197H1940V197H1943V197H1946V197H1949V197H1952V197H1955V154H1958V182H1961V197H1964V197H1967V127H1970V168H1973V85H1976V154H1979V154H1982V154H1985V71H1988V127H1991V182H1994V197H1997V197H2000V197H2003V154H2006V113H2009V168H2012V197H2015V197H2018V197H2021V182H2024V197H2027V197H2027V279Z" fill="url(#gc4)"/>
<path d="M8.5 1V279M28.5 1V279M48.5 1V279M68.5 1V279M88.5 1V279M109.5 1V279M129.5 1V279M149.5 1V279M169.5 1V279M189.5 1V279M209.5 1V279M229.5 1V279M249.5 1V279M269.5 1V279M289.5 1V279M309.5 1V279M329.5 1V279M349.5 1V279M369.5 1V279M389.5 1V279M409.5 1V279M429.5 1V279M449.5 1V279M469.5 1V279M489.5 1V279M509.5 1V279M529.5 1V279M549.5 1V279M569.5 1V279M589.5 1V279M609.5 1V279M629.5 1V279M649.5 1V279M669.5 1V279M689.5 1V279M709.5 1V279M729.5 1V279M749.5 1V279M769.5 1V279M789.5 1V279M809.5 1V279M829.5 1V279M849.5 1V279M869.5 1V279M889.5 1V279M909.5 1V279M929.5 1V279M949.5 1V279M969.5 1V279M989.5 1V279M1009.5 1V279M1029.5 1V279M1049.5 1V279M1069.5 1V279M1089.5 1V279M1109.5 1V279M1129.5 1V279M1149.5 1V279M1169.5 1V279M1189.5 1V279M1209.5 1V279M1229.5 1V279M1249.5 1V279M1269.5 1V279M1289.5 1V279M1309.5 1V279M1329.5 1V279M1349.5 1V279M1369.5 1V279M1389.5 1V279M1409.5 1V279M1429.5 1V279M1449.5 1V279M1469.5 1V279M1489.5 1V279M1509.5 1V279M1529.5 1V279M1549.5 1V279M1569.5 1V279M1589.5 1V279M1609.5 1V279M1629.5 1V279M1649.5 1V279M1669.5 1V279M1689.5 1V279M1709.5 1V279M1729.5 1V279M1749.5 1V279M1769.5 1V279M1789.5 1V279M1809.5 1V279M1829.5 1V279M1849.5 1V279M1869.5 1V279M1889.5 1V279M1909.5 1V279M1929.5 1V279M1949.5 1V279M1969.5 1V279M1989.5 1V279M2009.5 1V279M0 278.5H2027M0 258.5H2027M0 238.5H2027M0 218.5H2027M0 198.5H2027M0 178.5H2027M0 158.5H2027M0 138.5H2027M0 118.5H2027M0 98.5H2027M0 78.5H2027M0 58.5H2027M0 38.5H2027M0 18.5H2027" stroke="#abc5e8" stroke-width="1" fill="none"/>
<path d="M89.5 197.5H91.5H94.5H97.5H98.5V154.5H100.5H100.5V197.5H103.5H106.5H109.5H112.5H113.5V154.5H115.5H115.5V197.5H118.5H121.5H124.5H125.5V99.5H127.5H127.5V168.5H130.5H130.5V197.5H133.5H134.5V71.5H136.5H136.5V127.5H139.5H139.5V182.5H142.5H142.5V197.5H145.5H148.5H149.5V154.5H151.5H151.5V197.5H154.5H155.5V140.5H157.5H157.5V168.5H160.5H160.5V197.5H163.5H166.5H169.5H170.5V154.5H172.5H172.5V182.5H175.5H175.5V197.5H178.5H181.5H184.5H187.5H190.5H191.5V113.5H193.5H196.5H199.5H202.5H202.5V168.5H205.5H206.5V154.5H208.5H209.5V99.5H211.5H211.5V154.5H214.5H214.5V182.5H217.5H217.5V197.5H220.5H223.5H226.5H229.5H230.5V113.5H232.5H232.5V154.5H235.5H235.5V182.5H238.5H239.5V140.5H241.5H241.5V154.5H244.5H247.5H247.5V182.5H250.5H250.5V197.5H253.5H256.5H259.5H262.5H265.5H268.5H271.5H274.5H277.5H280.5H283.5H286.5H289.5H292.5H295.5H298.5H301.5H304.5H307.5H310.5H313.5H316.5H319.5H322.5H325.5H328.5H331.5H334.5H337.5H340.5H343.5H346.5H349.5H352.5H355.5H356.5V99.5H358.5H358.5V168.5H361.5H361.5V197.5H364.5H367.5H368.5V182.5H370.5H370.5V197.5H373.5H376.5H379.5H382.5H385.5H388.5H391.5H394.5H397.5H400.5H403.5H406.5H409.5H412.5H415.5H418.5H421.5H424.5H425.5V140.5H427.5H427.5V182.5H430.5H430.5V197.5H433.5H436.5H439.5H442.5H445.5H448.5H451.5H454.5H457.5H460.5H463.5H466.5H469.5H472.5H475.5H478.5H481.5H484.5H487.5H490.5H493.5H496.5H499.5H502.5H505.5H508.5H511.5H514.5H517.5H520.5H521.5V140.5H523.5H523.5V168.5H526.5H526.5V197.5H529.5H532.5H535.5H538.5H541.5H544.5H547.5H550.5H553.5H556.5H559.5H562.5H565.5H568.5H571.5H574.5H575.5V140.5H577.5H578.5V113.5H580.5H580.5V154.5H583.5H583.5V197.5H586.5H589.5H592.5H595.5H598.5H601.5H604.5H607.5H610.5H613.5H616.5H619.5H622.5H625.5H628.5H631.5H634.5H637.5H638.5V71.5H640.5H640.5V127.5H643.5H643.5V168.5H646.5H646.5V197.5H649.5H652.5H655.5H658.5H661.5H664.5H667.5H668.5V113.5H670.5H671.5V99.5H673.5H673.5V168.5H676.5H677.5V113.5H679.5H680.5V99.5H682.5H682.5V182.5H685.5H685.5V197.5H688.5H691.5H694.5H697.5H700.5H703.5H704.5V140.5H706.5H706.5V182.5H709.5H709.5V197.5H712.5H715.5H718.5H721.5H724.5H727.5H730.5H733.5H736.5H739.5H742.5H745.5H748.5H751.5H754.5H757.5H760.5H763.5H766.5H769.5H772.5H775.5H778.5H781.5H784.5H787.5H788.5V182.5H790.5H790.5V197.5H793.5H796.5H799.5H802.5H805.5H808.5H811.5H812.5V127.5H814.5H814.5V182.5H817.5H817.5V197.5H820.5H823.5H826.5H829.5H832.5H835.5H838.5H841.5H844.5H847.5H850.5H853.5H856.5H859.5H862.5H865.5H868.5H869.5V182.5H871.5H871.5V197.5H874.5H877.5H880.5H883.5H886.5H889.5H892.5H895.5H898.5H901.5H904.5H907.5H910.5H913.5H916.5H919.5H922.5H925.5H928.5H931.5H934.5H937.5H940.5H943.5H946.5H949.5H952.5H955.5H958.5H961.5H964.5H967.5H970.5H973.5H976.5H979.5H982.5H985.5H988.5H991.5H994.5H997.5H1000.5H1003.5H1006.5H1009.5H1012.5H1015.5H1016.5V154.5H1018.5H1019.5V99.5H1021.5H1021.5V182.5H1024.5H1025.5V154.5H1027.5H1030.5H1031.5V99.5H1033.5H1033.5V140.5H1036.5H1036.5V182.5H1039.5H1039.5V197.5H1042.5H1045.5H1048.5H1049.5V71.5H1051.5H1051.5V127.5H1054.5H1054.5V168.5H1057.5H1060.5H1060.5V197.5H1063.5H1066.5H1069.5H1072.5H1075.5H1078.5H1081.5H1084.5H1087.5H1088.5V154.5H1090.5H1090.5V197.5H1093.5H1094.5V71.5H1096.5H1096.5V154.5H1099.5H1099.5V197.5H1102.5H1105.5H1108.5H1109.5V113.5H1111.5H1111.5V154.5H1114.5H1114.5V182.5H1117.5H1117.5V197.5H1120.5H1123.5H1124.5V113.5H1126.5H1126.5V154.5H1129.5H1129.5V197.5H1132.5H1135.5H1138.5H1139.5V99.5H1141.5H1141.5V154.5H1144.5H1144.5V197.5H1147.5H1148.5V140.5H1150.5H1150.5V168.5H1153.5H1153.5V197.5H1156.5H1159.5H1162.5H1165.5H1168.5H1171.5H1174.5H1175.5V182.5H1177.5H1177.5V197.5H1180.5H1183.5H1186.5H1187.5V113.5H1189.5H1189.5V154.5H1192.5H1192.5V197.5H1195.5H1196.5V182.5H1198.5H1198.5V197.5H1201.5H1204.5H1207.5H1210.5H1213.5H1216.5H1219.5H1222.5H1225.5H1228.5H1231.5H1234.5H1237.5H1240.5H1243.5H1246.5H1249.5H1252.5H1255.5H1258.5H1261.5H1264.5H1267.5H1270.5H1273.5H1276.5H1279.5H1280.5V140.5H1282.5H1282.5V154.5H1285.5H1288.5H1289.5V99.5H1291.5H1291.5V154.5H1294.5H1294.5V182.5H1297.5H1297.5V197.5H1300.5H1303.5H1306.5H1309.5H1310.5V154.5H1312.5H1313.5V127.5H1315.5H1315.5V154.5H1318.5H1318.5V182.5H1321.5H1321.5V197.5H1324.5H1327.5H1330.5H1333.5H1336.5H1339.5H1342.5H1345.5H1348.5H1351.5H1354.5H1357.5H1360.5H1363.5H1366.5H1369.5H1372.5H1375.5H1378.5H1381.5H1384.5H1387.5H1390.5H1393.5H1396.5H1399.5H1402.5H1405.5H1408.5H1409.5V71.5H1411.5H1411.5V127.5H1414.5H1414.5V168.5H1417.5H1417.5V197.5H1420.5H1423.5H1426.5H1429.5H1432.5H1435.5H1436.5V154.5H1438.5H1438.5V197.5H1441.5H1444.5H1447.5H1450.5H1451.5V99.5H1453.5H1453.5V168.5H1456.5H1457.5V99.5H1459.5H1459.5V168.5H1462.5H1462.5V197.5H1465.5H1468.5H1471.5H1474.5H1477.5H1480.5H1483.5H1486.5H1489.5H1492.5H1495.5H1496.5V154.5H1498.5H1498.5V197.5H1501.5H1504.5H1507.5H1510.5H1513.5H1516.5H1519.5H1522.5H1525.5H1528.5H1531.5H1534.5H1537.5H1538.5V154.5H1540.5H1540.5V197.5H1543.5H1546.5H1549.5H1552.5H1555.5H1556.5V127.5H1558.5H1558.5V182.5H1561.5H1561.5V197.5H1564.5H1567.5H1570.5H1571.5V113.5H1573.5H1573.5V168.5H1576.5H1577.5V113.5H1579.5H1579.5V182.5H1582.5H1582.5V197.5H1585.5H1588.5H1591.5H1592.5V154.5H1594.5H1597.5H1598.5V140.5H1600.5H1600.5V154.5H1603.5H1606.5H1607.5V99.5H1609.5H1609.5V154.5H1612.5H1613.5V140.5H1615.5H1616.5V99.5H1618.5H1618.5V140.5H1621.5H1621.5V197.5H1624.5H1627.5H1630.5H1633.5H1636.5H1639.5H1642.5H1645.5H1646.5V140.5H1648.5H1648.5V182.5H1651.5H1651.5V197.5H1654.5H1657.5H1660.5H1663.5H1666.5H1669.5H1672.5H1675.5H1678.5H1681.5H1684.5H1687.5H1690.5H1693.5H1696.5H1699.5H1702.5H1705.5H1708.5H1711.5H1714.5H1717.5H1720.5H1723.5H1726.5H1729.5H1732.5H1735.5H1738.5H1741.5H1744.5H1745.5V113.5H1747.5H1747.5V154.5H1750.5H1753.5H1753.5V197.5H1756.5H1759.5H1762.5H1765.5H1766.5V71.5H1768.5H1768.5V127.5H1771.5H1771.5V154.5H1774.5H1774.5V197.5H1777.5H1780.5H1783.5H1786.5H1789.5H1792.5H1795.5H1798.5H1801.5H1804.5H1807.5H1810.5H1813.5H1816.5H1819.5H1822.5H1825.5H1828.5H1831.5H1834.5H1837.5H1840.5H1843.5H1844.5V140.5H1846.5H1846.5V197.5H1849.5H1852.5H1855.5H1858.5H1859.5V154.5H1861.5H1861.5V182.5H1864.5H1864.5V197.5H1867.5H1870.5H1873.5H1876.5H1879.5H1882.5H1885.5H1888.5H1891.5H1894.5H1897.5H1900.5H1903.5H1906.5H1909.5H1912.5H1915.5H1918.5H1921.5H1924.5H1927.5H1928.5V113.5H1930.5H1930.5V182.5H1933.5H1933.5V197.5H1936.5H1939.5H1942.5H1945.5H1948.5H1951.5H1954.5H1955.5V154.5H1957.5H1957.5V182.5H1960.5H1960.5V197.5H1963.5H1966.5H1967.5V127.5H1969.5H1969.5V168.5H1972.5H1973.5V85.5H1975.5H1975.5V154.5H1978.5H1981.5H1984.5H1985.5V71.5H1987.5H1987.5V127.5H1990.5H1990.5V182.5H1993.5H1993.5V197.5H1996.5H1999.5H2002.5H2003.5V154.5H2005.5H2006.5V113.5H2008.5H2008.5V168.5H2011.5H2011.5V197.5H2014.5H2017.5H2020.5H2021.5V182.5H2023.5H2023.5V197.5H2026.5H2026.5" fill="none" stroke="#3a7272" stroke-width="1"/>
<path d="M0 0.5H2027.5V279.5H0" stroke="#8c8c8c" stroke-width="1" fill="none"/>
<defs><linearGradient id="shc4" x1="0" x2="1"><stop offset="0" stop-color="#4e5e64" stop-opacity="0.5"/><stop offset="0.1" stop-color="#5a6a70" stop-opacity="0.22"/><stop offset="0.5" stop-color="#5a6a70" stop-opacity="0.07"/><stop offset="1" stop-color="#5a6a70" stop-opacity="0"/></linearGradient></defs>
<rect x="0" y="1" width="36" height="278" fill="url(#shc4)"/>
</svg>
<div class="tb" style="left:3711px;top:1141px;width:102px;height:25px">1000.0</div>
<div class="sq" style="left:3719px;top:1234px;background:#f6fff6"></div>
<div class="sq" style="left:3751px;top:1234px;background:#e0f6fc"></div>
<div class="sq" style="left:3783px;top:1234px;background:#a9c3e6"></div>
<div class="tb" style="left:3711px;top:1271px;width:100px;height:25px">300.0 MHz</div>
<div class="gbtn" style="left:3713px;top:1314px;width:100px;height:32px;line-height:30px">Auto Fit</div>
<div class="gbtn" style="left:3713px;top:1350px;width:100px;height:32px;line-height:30px">Reset</div>
<div class="tb" style="left:3711px;top:1395px;width:102px;height:25px">0.0</div>
<div class="a" style="left:1677px;top:1433px;width:2153px;height:321px;background:#f0f0f0;border:1px solid #8a8a8a;border-radius:8px;box-shadow:0 1px 1px rgba(0,0,0,0.12),0 -1px 1px rgba(0,0,0,0.08)"></div>
<div class="a" style="left:1678px;top:1434px;width:2151px;height:43px;background:linear-gradient(#c9c9c9,#dfdfdf);border-radius:7px 7px 0 0"></div>
<svg class="i" style="left:1686px;top:1442px" width="24" height="24"><use href="#logo"/></svg>
<div class="a" style="left:1716px;top:1443px;font-size:17.5px;line-height:24px;color:#8a8a8a;white-space:nowrap">CPU GT Cores (Graphics)</div>
<svg class="i" style="left:3796px;top:1447px" width="16" height="16"><path d="M0.5 0.5 L15.5 15.5 M15.5 0.5 L0.5 15.5" stroke="#8e8e8e" stroke-width="1.3"/></svg>
<svg class="i" style="left:1678px;top:1477px" width="2028" height="275">
<rect x="0" y="0" width="2028" height="275" fill="#e0f6fc"/>
<defs><linearGradient id="gc5" x1="0" y1="0" x2="0" y2="274" gradientUnits="userSpaceOnUse"><stop offset="0" stop-color="#7470b4"/><stop offset="1" stop-color="#1e1c34"/></linearGradient></defs><path d="M89 274V153H92V157H95V150H98V150H101V143H104V141H107V150H110V141H113V141H116V141H119V141H122V141H125V141H128V138H131V141H134V141H137V141H140V138H143V138H146V138H149V136H152V138H155V138H158V136H161V136H164V138H167V136H170V138H173V130H176V138H179V130H182V130H185V130H188V130H191V130H194V130H197V130H200V136H203V130H206V130H209V130H212V130H215V130H218V130H221V130H224V130H227V130H230V130H233V130H236V127H239V130H242V130H245V127H248V130H251V130H254V130H257V127H260V127H263V127H266V127H269V130H272V127H275V127H278V127H281V127H284V127H287V124H290V127H293V127H296V124H299V127H302V127H305V130H308V130H311V127H314V130H317V127H320V124H323V127H326V127H329V124H332V127H335V130H338V127H341V127H344V127H347V127H350V127H353V124H356V127H359V127H362V130H365V127H368V130H371V127H374V127H377V127H380V130H383V127H386V130H389V130H392V127H395V127H398V127H401V124H404V130H407V127H410V127H413V124H416V124H419V124H422V127H425V127H428V127H431V124H434V127H437V127H440V127H443V127H446V127H449V127H452V127H455V127H458V130H461V124H464V124H467V124H470V124H473V124H476V127H479V127H482V127H485V127H488V127H491V124H494V124H497V124H500V124H503V124H506V124H509V127H512V124H515V124H518V124H521V124H524V127H527V127H530V124H533V124H536V124H539V127H542V124H545V124H548V127H551V127H554V127H557V124H560V124H563V127H566V127H569V127H572V124H575V124H578V127H581V127H584V127H587V124H590V127H593V124H596V127H599V124H602V124H605V127H608V124H611V124H614V127H617V127H620V127H623V124H626V124H629V127H632V127H635V122H638V127H641V127H644V124H647V124H650V124H653V124H656V124H659V124H662V127H665V124H668V124H671V124H674V124H677V124H680V127H683V124H686V122H689V124H692V124H695V124H698V124H701V127H704V127H707V124H710V124H713V124H716V127H719V124H722V127H725V124H728V125H731V125H734V127H737V125H740V125H743V127H746V125H749V127H752V125H755V125H758V127H761V125H764V127H767V123H770V125H773V127H776V125H779V125H782V125H785V125H788V125H791V125H794V127H797V125H800V127H803V125H806V125H809V125H812V125H815V123H818V125H821V125H824V125H827V125H830V127H833V125H836V125H839V127H842V127H845V125H848V125H851V125H854V125H857V125H860V125H863V125H866V125H869V127H872V125H875V123H878V125H881V125H884V127H887V127H890V125H893V125H896V125H899V125H902V125H905V123H908V125H911V125H914V125H917V125H920V125H923V125H926V125H929V125H932V125H935V125H938V125H941V125H944V125H947V125H950V125H953V125H956V125H959V123H962V125H965V125H968V125H971V125H974V127H977V125H980V125H983V125H986V125H989V127H992V125H995V125H998V125H1001V125H1004V125H1007V123H1010V123H1013V123H1016V125H1019V125H1022V125H1025V125H1028V127H1031V125H1034V125H1037V123H1040V125H1043V125H1046V125H1049V123H1052V125H1055V123H1058V123H1061V125H1064V125H1067V125H1070V125H1073V123H1076V123H1079V125H1082V123H1085V123H1088V123H1091V123H1094V123H1097V125H1100V125H1103V123H1106V125H1109V125H1112V125H1115V125H1118V123H1121V125H1124V125H1127V125H1130V125H1133V123H1136V127H1139V125H1142V125H1145V127H1148V125H1151V125H1154V125H1157V125H1160V127H1163V123H1166V125H1169V125H1172V125H1175V125H1178V125H1181V125H1184V125H1187V125H1190V125H1193V125H1196V125H1199V123H1202V125H1205V123H1208V125H1211V125H1214V125H1217V123H1220V123H1223V125H1226V125H1229V123H1232V125H1235V125H1238V125H1241V123H1244V123H1247V125H1250V125H1253V125H1256V123H1259V123H1262V123H1265V125H1268V125H1271V123H1274V125H1277V123H1280V127H1283V125H1286V125H1289V123H1292V123H1295V125H1298V125H1301V125H1304V125H1307V123H1310V125H1313V125H1316V125H1319V125H1322V125H1325V125H1328V127H1331V125H1334V123H1337V123H1340V125H1343V125H1346V125H1349V125H1352V125H1355V125H1358V123H1361V127H1364V125H1367V124H1370V123H1373V124H1376V124H1379V123H1382V123H1385V124H1388V124H1391V124H1394V124H1397V128H1400V124H1403V124H1406V124H1409V124H1412V124H1415V124H1418V124H1421V123H1424V124H1427V123H1430V124H1433V123H1436V124H1439V123H1442V123H1445V124H1448V124H1451V124H1454V123H1457V123H1460V128H1463V124H1466V123H1469V124H1472V124H1475V124H1478V124H1481V124H1484V123H1487V124H1490V124H1493V124H1496V124H1499V124H1502V123H1505V124H1508V124H1511V123H1514V124H1517V123H1520V123H1523V124H1526V124H1529V124H1532V124H1535V124H1538V124H1541V123H1544V123H1547V124H1550V124H1553V124H1556V123H1559V123H1562V124H1565V124H1568V124H1571V124H1574V124H1577V124H1580V128H1583V128H1586V124H1589V123H1592V124H1595V124H1598V124H1601V124H1604V124H1607V124H1610V123H1613V124H1616V124H1619V128H1622V123H1625V124H1628V123H1631V123H1634V123H1637V123H1640V124H1643V123H1646V124H1649V124H1652V123H1655V124H1658V123H1661V123H1664V124H1667V124H1670V124H1673V128H1676V124H1679V124H1682V123H1685V128H1688V124H1691V127H1694V124H1697V124H1700V124H1703V124H1706V124H1709V124H1712V124H1715V124H1718V124H1721V124H1724V124H1727V122H1730V124H1733V122H1736V124H1739V124H1742V124H1745V124H1748V124H1751V124H1754V122H1757V124H1760V124H1763V127H1766V122H1769V124H1772V124H1775V127H1778V124H1781V124H1784V124H1787V124H1790V124H1793V122H1796V124H1799V124H1802V124H1805V127H1808V124H1811V124H1814V124H1817V124H1820V124H1823V122H1826V116H1829V122H1832V122H1835V124H1838V116H1841V122H1844V122H1847V122H1850V122H1853V122H1856V122H1859V122H1862V124H1865V122H1868V124H1871V122H1874V122H1877V124H1880V124H1883V122H1886V124H1889V122H1892V124H1895V124H1898V124H1901V124H1904V124H1907V122H1910V124H1913V122H1916V124H1919V124H1922V124H1925V124H1928V124H1931V122H1934V124H1937V124H1940V124H1943V122H1946V122H1949V124H1952V122H1955V124H1958V122H1961V122H1964V127H1967V124H1970V124H1973V124H1976V124H1979V124H1982V124H1985V124H1988V116H1991V124H1994V124H1997V124H2000V124H2003V124H2006V124H2009V124H2012V122H2015V124H2018V124H2021V122H2024V122H2027V124H2027V274Z" fill="url(#gc5)"/>
<path d="M8.5 1V274M28.5 1V274M48.5 1V274M68.5 1V274M88.5 1V274M109.5 1V274M129.5 1V274M149.5 1V274M169.5 1V274M189.5 1V274M209.5 1V274M229.5 1V274M249.5 1V274M269.5 1V274M289.5 1V274M309.5 1V274M329.5 1V274M349.5 1V274M369.5 1V274M389.5 1V274M409.5 1V274M429.5 1V274M449.5 1V274M469.5 1V274M489.5 1V274M509.5 1V274M529.5 1V274M549.5 1V274M569.5 1V274M589.5 1V274M609.5 1V274M629.5 1V274M649.5 1V274M669.5 1V274M689.5 1V274M709.5 1V274M729.5 1V274M749.5 1V274M769.5 1V274M789.5 1V274M809.5 1V274M829.5 1V274M849.5 1V274M869.5 1V274M889.5 1V274M909.5 1V274M929.5 1V274M949.5 1V274M969.5 1V274M989.5 1V274M1009.5 1V274M1029.5 1V274M1049.5 1V274M1069.5 1V274M1089.5 1V274M1109.5 1V274M1129.5 1V274M1149.5 1V274M1169.5 1V274M1189.5 1V274M1209.5 1V274M1229.5 1V274M1249.5 1V274M1269.5 1V274M1289.5 1V274M1309.5 1V274M1329.5 1V274M1349.5 1V274M1369.5 1V274M1389.5 1V274M1409.5 1V274M1429.5 1V274M1449.5 1V274M1469.5 1V274M1489.5 1V274M1509.5 1V274M1529.5 1V274M1549.5 1V274M1569.5 1V274M1589.5 1V274M1609.5 1V274M1629.5 1V274M1649.5 1V274M1669.5 1V274M1689.5 1V274M1709.5 1V274M1729.5 1V274M1749.5 1V274M1769.5 1V274M1789.5 1V274M1809.5 1V274M1829.5 1V274M1849.5 1V274M1869.5 1V274M1889.5 1V274M1909.5 1V274M1929.5 1V274M1949.5 1V274M1969.5 1V274M1989.5 1V274M2009.5 1V274M0 273.5H2027M0 253.5H2027M0 233.5H2027M0 213.5H2027M0 193.5H2027M0 173.5H2027M0 153.5H2027M0 133.5H2027M0 113.5H2027M0 93.5H2027M0 73.5H2027M0 53.5H2027M0 33.5H2027M0 13.5H2027" stroke="#abc5e8" stroke-width="1" fill="none"/>
<path d="M89.5 153.5H91.5H91.5V157.5H94.5H95.5V150.5H97.5H100.5H101.5V143.5H103.5H104.5V141.5H106.5H106.5V150.5H109.5H110.5V141.5H112.5H115.5H118.5H121.5H124.5H127.5H128.5V138.5H130.5H130.5V141.5H133.5H136.5H139.5H140.5V138.5H142.5H145.5H148.5H149.5V136.5H151.5H151.5V138.5H154.5H157.5H158.5V136.5H160.5H163.5H163.5V138.5H166.5H167.5V136.5H169.5H169.5V138.5H172.5H173.5V130.5H175.5H175.5V138.5H178.5H179.5V130.5H181.5H184.5H187.5H190.5H193.5H196.5H199.5H199.5V136.5H202.5H203.5V130.5H205.5H208.5H211.5H214.5H217.5H220.5H223.5H226.5H229.5H232.5H235.5H236.5V127.5H238.5H238.5V130.5H241.5H244.5H245.5V127.5H247.5H247.5V130.5H250.5H253.5H256.5H257.5V127.5H259.5H262.5H265.5H268.5H268.5V130.5H271.5H272.5V127.5H274.5H277.5H280.5H283.5H286.5H287.5V124.5H289.5H289.5V127.5H292.5H295.5H296.5V124.5H298.5H298.5V127.5H301.5H304.5H304.5V130.5H307.5H310.5H311.5V127.5H313.5H313.5V130.5H316.5H317.5V127.5H319.5H320.5V124.5H322.5H322.5V127.5H325.5H328.5H329.5V124.5H331.5H331.5V127.5H334.5H334.5V130.5H337.5H338.5V127.5H340.5H343.5H346.5H349.5H352.5H353.5V124.5H355.5H355.5V127.5H358.5H361.5H361.5V130.5H364.5H365.5V127.5H367.5H367.5V130.5H370.5H371.5V127.5H373.5H376.5H379.5H379.5V130.5H382.5H383.5V127.5H385.5H385.5V130.5H388.5H391.5H392.5V127.5H394.5H397.5H400.5H401.5V124.5H403.5H403.5V130.5H406.5H407.5V127.5H409.5H412.5H413.5V124.5H415.5H418.5H421.5H421.5V127.5H424.5H427.5H430.5H431.5V124.5H433.5H433.5V127.5H436.5H439.5H442.5H445.5H448.5H451.5H454.5H457.5H457.5V130.5H460.5H461.5V124.5H463.5H466.5H469.5H472.5H475.5H475.5V127.5H478.5H481.5H484.5H487.5H490.5H491.5V124.5H493.5H496.5H499.5H502.5H505.5H508.5H508.5V127.5H511.5H512.5V124.5H514.5H517.5H520.5H523.5H523.5V127.5H526.5H529.5H530.5V124.5H532.5H535.5H538.5H538.5V127.5H541.5H542.5V124.5H544.5H547.5H547.5V127.5H550.5H553.5H556.5H557.5V124.5H559.5H562.5H562.5V127.5H565.5H568.5H571.5H572.5V124.5H574.5H577.5H577.5V127.5H580.5H583.5H586.5H587.5V124.5H589.5H589.5V127.5H592.5H593.5V124.5H595.5H595.5V127.5H598.5H599.5V124.5H601.5H604.5H604.5V127.5H607.5H608.5V124.5H610.5H613.5H613.5V127.5H616.5H619.5H622.5H623.5V124.5H625.5H628.5H628.5V127.5H631.5H634.5H635.5V122.5H637.5H637.5V127.5H640.5H643.5H644.5V124.5H646.5H649.5H652.5H655.5H658.5H661.5H661.5V127.5H664.5H665.5V124.5H667.5H670.5H673.5H676.5H679.5H679.5V127.5H682.5H683.5V124.5H685.5H686.5V122.5H688.5H688.5V124.5H691.5H694.5H697.5H700.5H700.5V127.5H703.5H706.5H707.5V124.5H709.5H712.5H715.5H715.5V127.5H718.5H719.5V124.5H721.5H721.5V127.5H724.5H725.5V124.5H727.5H727.5V125.5H730.5H733.5H733.5V127.5H736.5H737.5V125.5H739.5H742.5H742.5V127.5H745.5H746.5V125.5H748.5H748.5V127.5H751.5H752.5V125.5H754.5H757.5H757.5V127.5H760.5H761.5V125.5H763.5H763.5V127.5H766.5H767.5V123.5H769.5H769.5V125.5H772.5H772.5V127.5H775.5H776.5V125.5H778.5H781.5H784.5H787.5H790.5H793.5H793.5V127.5H796.5H797.5V125.5H799.5H799.5V127.5H802.5H803.5V125.5H805.5H808.5H811.5H814.5H815.5V123.5H817.5H817.5V125.5H820.5H823.5H826.5H829.5H829.5V127.5H832.5H833.5V125.5H835.5H838.5H838.5V127.5H841.5H844.5H845.5V125.5H847.5H850.5H853.5H856.5H859.5H862.5H865.5H868.5H868.5V127.5H871.5H872.5V125.5H874.5H875.5V123.5H877.5H877.5V125.5H880.5H883.5H883.5V127.5H886.5H889.5H890.5V125.5H892.5H895.5H898.5H901.5H904.5H905.5V123.5H907.5H907.5V125.5H910.5H913.5H916.5H919.5H922.5H925.5H928.5H931.5H934.5H937.5H940.5H943.5H946.5H949.5H952.5H955.5H958.5H959.5V123.5H961.5H961.5V125.5H964.5H967.5H970.5H973.5H973.5V127.5H976.5H977.5V125.5H979.5H982.5H985.5H988.5H988.5V127.5H991.5H992.5V125.5H994.5H997.5H1000.5H1003.5H1006.5H1007.5V123.5H1009.5H1012.5H1015.5H1015.5V125.5H1018.5H1021.5H1024.5H1027.5H1027.5V127.5H1030.5H1031.5V125.5H1033.5H1036.5H1037.5V123.5H1039.5H1039.5V125.5H1042.5H1045.5H1048.5H1049.5V123.5H1051.5H1051.5V125.5H1054.5H1055.5V123.5H1057.5H1060.5H1060.5V125.5H1063.5H1066.5H1069.5H1072.5H1073.5V123.5H1075.5H1078.5H1078.5V125.5H1081.5H1082.5V123.5H1084.5H1087.5H1090.5H1093.5H1096.5H1096.5V125.5H1099.5H1102.5H1103.5V123.5H1105.5H1105.5V125.5H1108.5H1111.5H1114.5H1117.5H1118.5V123.5H1120.5H1120.5V125.5H1123.5H1126.5H1129.5H1132.5H1133.5V123.5H1135.5H1135.5V127.5H1138.5H1139.5V125.5H1141.5H1144.5H1144.5V127.5H1147.5H1148.5V125.5H1150.5H1153.5H1156.5H1159.5H1159.5V127.5H1162.5H1163.5V123.5H1165.5H1165.5V125.5H1168.5H1171.5H1174.5H1177.5H1180.5H1183.5H1186.5H1189.5H1192.5H1195.5H1198.5H1199.5V123.5H1201.5H1201.5V125.5H1204.5H1205.5V123.5H1207.5H1207.5V125.5H1210.5H1213.5H1216.5H1217.5V123.5H1219.5H1222.5H1222.5V125.5H1225.5H1228.5H1229.5V123.5H1231.5H1231.5V125.5H1234.5H1237.5H1240.5H1241.5V123.5H1243.5H1246.5H1246.5V125.5H1249.5H1252.5H1255.5H1256.5V123.5H1258.5H1261.5H1264.5H1264.5V125.5H1267.5H1270.5H1271.5V123.5H1273.5H1273.5V125.5H1276.5H1277.5V123.5H1279.5H1279.5V127.5H1282.5H1283.5V125.5H1285.5H1288.5H1289.5V123.5H1291.5H1294.5H1294.5V125.5H1297.5H1300.5H1303.5H1306.5H1307.5V123.5H1309.5H1309.5V125.5H1312.5H1315.5H1318.5H1321.5H1324.5H1327.5H1327.5V127.5H1330.5H1331.5V125.5H1333.5H1334.5V123.5H1336.5H1339.5H1339.5V125.5H1342.5H1345.5H1348.5H1351.5H1354.5H1357.5H1358.5V123.5H1360.5H1360.5V127.5H1363.5H1364.5V125.5H1366.5H1367.5V124.5H1369.5H1370.5V123.5H1372.5H1372.5V124.5H1375.5H1378.5H1379.5V123.5H1381.5H1384.5H1384.5V124.5H1387.5H1390.5H1393.5H1396.5H1396.5V128.5H1399.5H1400.5V124.5H1402.5H1405.5H1408.5H1411.5H1414.5H1417.5H1420.5H1421.5V123.5H1423.5H1423.5V124.5H1426.5H1427.5V123.5H1429.5H1429.5V124.5H1432.5H1433.5V123.5H1435.5H1435.5V124.5H1438.5H1439.5V123.5H1441.5H1444.5H1444.5V124.5H1447.5H1450.5H1453.5H1454.5V123.5H1456.5H1459.5H1459.5V128.5H1462.5H1463.5V124.5H1465.5H1466.5V123.5H1468.5H1468.5V124.5H1471.5H1474.5H1477.5H1480.5H1483.5H1484.5V123.5H1486.5H1486.5V124.5H1489.5H1492.5H1495.5H1498.5H1501.5H1502.5V123.5H1504.5H1504.5V124.5H1507.5H1510.5H1511.5V123.5H1513.5H1513.5V124.5H1516.5H1517.5V123.5H1519.5H1522.5H1522.5V124.5H1525.5H1528.5H1531.5H1534.5H1537.5H1540.5H1541.5V123.5H1543.5H1546.5H1546.5V124.5H1549.5H1552.5H1555.5H1556.5V123.5H1558.5H1561.5H1561.5V124.5H1564.5H1567.5H1570.5H1573.5H1576.5H1579.5H1579.5V128.5H1582.5H1585.5H1586.5V124.5H1588.5H1589.5V123.5H1591.5H1591.5V124.5H1594.5H1597.5H1600.5H1603.5H1606.5H1609.5H1610.5V123.5H1612.5H1612.5V124.5H1615.5H1618.5H1618.5V128.5H1621.5H1622.5V123.5H1624.5H1624.5V124.5H1627.5H1628.5V123.5H1630.5H1633.5H1636.5H1639.5H1639.5V124.5H1642.5H1643.5V123.5H1645.5H1645.5V124.5H1648.5H1651.5H1652.5V123.5H1654.5H1654.5V124.5H1657.5H1658.5V123.5H1660.5H1663.5H1663.5V124.5H1666.5H1669.5H1672.5H1672.5V128.5H1675.5H1676.5V124.5H1678.5H1681.5H1682.5V123.5H1684.5H1684.5V128.5H1687.5H1688.5V124.5H1690.5H1690.5V127.5H1693.5H1694.5V124.5H1696.5H1699.5H1702.5H1705.5H1708.5H1711.5H1714.5H1717.5H1720.5H1723.5H1726.5H1727.5V122.5H1729.5H1729.5V124.5H1732.5H1733.5V122.5H1735.5H1735.5V124.5H1738.5H1741.5H1744.5H1747.5H1750.5H1753.5H1754.5V122.5H1756.5H1756.5V124.5H1759.5H1762.5H1762.5V127.5H1765.5H1766.5V122.5H1768.5H1768.5V124.5H1771.5H1774.5H1774.5V127.5H1777.5H1778.5V124.5H1780.5H1783.5H1786.5H1789.5H1792.5H1793.5V122.5H1795.5H1795.5V124.5H1798.5H1801.5H1804.5H1804.5V127.5H1807.5H1808.5V124.5H1810.5H1813.5H1816.5H1819.5H1822.5H1823.5V122.5H1825.5H1826.5V116.5H1828.5H1828.5V122.5H1831.5H1834.5H1834.5V124.5H1837.5H1838.5V116.5H1840.5H1840.5V122.5H1843.5H1846.5H1849.5H1852.5H1855.5H1858.5H1861.5H1861.5V124.5H1864.5H1865.5V122.5H1867.5H1867.5V124.5H1870.5H1871.5V122.5H1873.5H1876.5H1876.5V124.5H1879.5H1882.5H1883.5V122.5H1885.5H1885.5V124.5H1888.5H1889.5V122.5H1891.5H1891.5V124.5H1894.5H1897.5H1900.5H1903.5H1906.5H1907.5V122.5H1909.5H1909.5V124.5H1912.5H1913.5V122.5H1915.5H1915.5V124.5H1918.5H1921.5H1924.5H1927.5H1930.5H1931.5V122.5H1933.5H1933.5V124.5H1936.5H1939.5H1942.5H1943.5V122.5H1945.5H1948.5H1948.5V124.5H1951.5H1952.5V122.5H1954.5H1954.5V124.5H1957.5H1958.5V122.5H1960.5H1963.5H1963.5V127.5H1966.5H1967.5V124.5H1969.5H1972.5H1975.5H1978.5H1981.5H1984.5H1987.5H1988.5V116.5H1990.5H1990.5V124.5H1993.5H1996.5H1999.5H2002.5H2005.5H2008.5H2011.5H2012.5V122.5H2014.5H2014.5V124.5H2017.5H2020.5H2021.5V122.5H2023.5H2026.5H2026.5V124.5H2026.5" fill="none" stroke="#7a78c0" stroke-width="1"/>
<path d="M0 0.5H2027.5V274.5H0" stroke="#8c8c8c" stroke-width="1" fill="none"/>
<defs><linearGradient id="shc5" x1="0" x2="1"><stop offset="0" stop-color="#4e5e64" stop-opacity="0.5"/><stop offset="0.1" stop-color="#5a6a70" stop-opacity="0.22"/><stop offset="0.5" stop-color="#5a6a70" stop-opacity="0.07"/><stop offset="1" stop-color="#5a6a70" stop-opacity="0"/></linearGradient></defs>
<rect x="0" y="1" width="36" height="273" fill="url(#shc5)"/>
<defs><linearGradient id="tsh" x1="0" y1="0" x2="0" y2="1"><stop offset="0" stop-color="#000" stop-opacity="0.07"/><stop offset="1" stop-color="#000" stop-opacity="0"/></linearGradient></defs>
<rect x="1" y="1" width="2026" height="45" fill="url(#tsh)"/>
</svg>
<div class="tb" style="left:3711px;top:1478px;width:102px;height:25px">100</div>
<div class="sq" style="left:3719px;top:1566px;background:#f6fff6"></div>
<div class="sq" style="left:3751px;top:1566px;background:#e0f6fc"></div>
<div class="sq" style="left:3783px;top:1566px;background:#a9c3e6"></div>
<div class="tb" style="left:3711px;top:1603px;width:100px;height:25px">56 °C</div>
<div class="gbtn" style="left:3713px;top:1646px;width:100px;height:32px;line-height:30px">Auto Fit</div>
<div class="gbtn" style="left:3713px;top:1682px;width:100px;height:32px;line-height:30px">Reset</div>
<div class="tb" style="left:3711px;top:1727px;width:102px;height:25px">0</div>
<div class="a" style="left:1677px;top:1770px;width:2153px;height:308px;background:#f0f0f0;border:1px solid #8a8a8a;border-radius:8px;box-shadow:0 1px 1px rgba(0,0,0,0.12),0 -1px 1px rgba(0,0,0,0.08)"></div>
<div class="a" style="left:1678px;top:1771px;width:2151px;height:43px;background:#f3f3f3;border-radius:7px 7px 0 0;border-top:1px solid #f9f9f9"></div>
<svg class="i" style="left:1686px;top:1779px" width="24" height="24"><use href="#logo"/></svg>
<div class="a" style="left:1716px;top:1780px;font-size:17.5px;line-height:24px;color:#8a8a8a;white-space:nowrap">GT Cores Power</div>
<svg class="i" style="left:3796px;top:1784px" width="16" height="16"><path d="M0.5 0.5 L15.5 15.5 M15.5 0.5 L0.5 15.5" stroke="#8e8e8e" stroke-width="1.3"/></svg>
<svg class="i" style="left:1678px;top:1814px" width="2028" height="262">
<rect x="0" y="0" width="2028" height="262" fill="#e0f6fc"/>
<rect x="92" y="256" width="3" height="4" fill="#001828"/><rect x="98" y="254" width="3" height="6" fill="#001828"/>
<path d="M8.5 1V261M28.5 1V261M48.5 1V261M68.5 1V261M88.5 1V261M109.5 1V261M129.5 1V261M149.5 1V261M169.5 1V261M189.5 1V261M209.5 1V261M229.5 1V261M249.5 1V261M269.5 1V261M289.5 1V261M309.5 1V261M329.5 1V261M349.5 1V261M369.5 1V261M389.5 1V261M409.5 1V261M429.5 1V261M449.5 1V261M469.5 1V261M489.5 1V261M509.5 1V261M529.5 1V261M549.5 1V261M569.5 1V261M589.5 1V261M609.5 1V261M629.5 1V261M649.5 1V261M669.5 1V261M689.5 1V261M709.5 1V261M729.5 1V261M749.5 1V261M769.5 1V261M789.5 1V261M809.5 1V261M829.5 1V261M849.5 1V261M869.5 1V261M889.5 1V261M909.5 1V261M929.5 1V261M949.5 1V261M969.5 1V261M989.5 1V261M1009.5 1V261M1029.5 1V261M1049.5 1V261M1069.5 1V261M1089.5 1V261M1109.5 1V261M1129.5 1V261M1149.5 1V261M1169.5 1V261M1189.5 1V261M1209.5 1V261M1229.5 1V261M1249.5 1V261M1269.5 1V261M1289.5 1V261M1309.5 1V261M1329.5 1V261M1349.5 1V261M1369.5 1V261M1389.5 1V261M1409.5 1V261M1429.5 1V261M1449.5 1V261M1469.5 1V261M1489.5 1V261M1509.5 1V261M1529.5 1V261M1549.5 1V261M1569.5 1V261M1589.5 1V261M1609.5 1V261M1629.5 1V261M1649.5 1V261M1669.5 1V261M1689.5 1V261M1709.5 1V261M1729.5 1V261M1749.5 1V261M1769.5 1V261M1789.5 1V261M1809.5 1V261M1829.5 1V261M1849.5 1V261M1869.5 1V261M1889.5 1V261M1909.5 1V261M1929.5 1V261M1949.5 1V261M1969.5 1V261M1989.5 1V261M2009.5 1V261M0 260.5H2027M0 240.5H2027M0 220.5H2027M0 200.5H2027M0 180.5H2027M0 160.5H2027M0 140.5H2027M0 120.5H2027M0 100.5H2027M0 80.5H2027M0 60.5H2027M0 40.5H2027M0 20.5H2027" stroke="#abc5e8" stroke-width="1" fill="none"/>
<path d="M89 260.5H92V256.5H94V260.5H98V254.5H100V260.5H104V259.5H106V260.5H2027" stroke="#0a7ac8" stroke-width="1.6" fill="none"/>
<path d="M0 0.5H2027.5V261.5H0" stroke="#8c8c8c" stroke-width="1" fill="none"/>
<defs><linearGradient id="shc6" x1="0" x2="1"><stop offset="0" stop-color="#4e5e64" stop-opacity="0.5"/><stop offset="0.1" stop-color="#5a6a70" stop-opacity="0.22"/><stop offset="0.5" stop-color="#5a6a70" stop-opacity="0.07"/><stop offset="1" stop-color="#5a6a70" stop-opacity="0"/></linearGradient></defs>
<rect x="0" y="1" width="36" height="260" fill="url(#shc6)"/>
</svg>
<div class="tb" style="left:3711px;top:1815px;width:102px;height:25px">10.000</div>
<div class="sq" style="left:3719px;top:1890px;background:#f6fff6"></div>
<div class="sq" style="left:3751px;top:1890px;background:#e0f6fc"></div>
<div class="sq" style="left:3783px;top:1890px;background:#a9c3e6"></div>
<div class="tb" style="left:3711px;top:1927px;width:100px;height:25px">0.018 W</div>
<div class="gbtn" style="left:3713px;top:1970px;width:100px;height:32px;line-height:30px">Auto Fit</div>
<div class="gbtn" style="left:3713px;top:2006px;width:100px;height:32px;line-height:30px">Reset</div>
<div class="tb" style="left:3711px;top:2051px;width:102px;height:25px">0.000</div>
<div class="a" style="left:3830px;top:0;width:10px;height:2084px;background:linear-gradient(to right,#8e8e8e,#b4b4b4 30%,#c2c2c2)"></div>
<div class="a" style="left:0;top:2077px;width:3840px;height:7px;background:linear-gradient(#8a8a8a,#a4a4a4 60%,#a9a9a9)"></div>
<div class="a" style="left:0;top:1px;width:1678px;height:2076px;background:#f0f0f0;border:1px solid #8c8c8c;border-left:2px solid #9a9a9a;border-top-color:#9c9c9c;border-radius:8px"></div>
<div class="a" style="left:2px;top:2px;width:1675px;height:43px;background:#f3f3f3;border-top:1px solid #f9f9f9;border-radius:7px 7px 0 0"></div>
<svg class="i" style="left:13px;top:10px" width="24" height="24"><use href="#logo"/></svg>
<div class="a" style="left:43px;top:11px;font-size:17.5px;line-height:24px;white-space:nowrap">HWiNFO® 64 v8.06-5500 Sensor Status [50 values hidden]</div>
<svg class="i" style="left:1490px;top:10px" width="170" height="26"><path d="M6 12.7 H21" stroke="#1a1a1a" stroke-width="1.1"/><rect x="75.5" y="5.5" width="14.5" height="14.5" rx="2" fill="none" stroke="#1a1a1a" stroke-width="1.1"/><path d="M146 5.5 L161 20.5 M161 5.5 L146 20.5" stroke="#1a1a1a" stroke-width="1.1"/></svg>
<div class="a" style="left:2px;top:45px;width:838px;height:1952px;background:#fff;border:1px solid #8793a0;border-right:none"></div>
<div class="a" style="left:839px;top:45px;width:839px;height:1952px;background:#fff;border-top:1px solid #6f6f6f;border-left:2px solid #6a6a6a;border-bottom:1px solid #6f6f6f"></div>
<div class="t" style="left:10px;top:47px;height:26px;line-height:28px">Sensor</div>
<div class="a" style="left:328px;top:47px;width:1px;height:25px;background:#e5e5e5"></div>
<div class="a" style="left:448px;top:47px;width:1px;height:25px;background:#e5e5e5"></div>
<div class="a" style="left:568px;top:47px;width:1px;height:25px;background:#e5e5e5"></div>
<div class="a" style="left:688px;top:47px;width:1px;height:25px;background:#e5e5e5"></div>
<div class="a" style="left:808px;top:47px;width:1px;height:25px;background:#e5e5e5"></div>
<div class="v" style="left:325px;top:47px">Current</div>
<div class="v" style="left:445px;top:47px">Minimum</div>
<div class="v" style="left:565px;top:47px">Maximum</div>
<div class="v" style="left:685px;top:47px">Average</div>
<div class="hd" style="left:59px;top:72px;width:750px"></div>
<div class="sep" style="left:35px;top:96px;width:24px"></div>
<svg class="i" style="left:11px;top:72px" width="24" height="25"><use href="#chv"/></svg>
<svg class="i" style="left:35px;top:72px" width="24" height="25"><use href="#chip"/></svg>
<div class="t b" style="left:61px;top:72px">System</div>
<div class="bg1" style="left:59px;top:97px;width:750px"></div>
<div class="sep" style="left:35px;top:121px;width:774px"></div>
<svg class="i" style="left:35px;top:97px" width="24" height="25"><use href="#clk"/></svg>
<div class="t" style="left:61px;top:97px">Virtual Memory Committed</div>
<div class="v" style="left:325px;top:97px">4,936 MB</div>
<div class="v" style="left:445px;top:97px">4,832 MB</div>
<div class="v" style="left:565px;top:97px">5,033 MB</div>
<div class="v" style="left:685px;top:97px">4,887 MB</div>
<div class="sep" style="left:35px;top:146px;width:774px"></div>
<svg class="i" style="left:35px;top:122px" width="24" height="25"><use href="#clk"/></svg>
<div class="t" style="left:61px;top:122px">Virtual Memory Available</div>
<div class="v" style="left:325px;top:122px">12,216 MB</div>
<div class="v" style="left:445px;top:122px">12,119 MB</div>
<div class="v" style="left:565px;top:122px">12,320 MB</div>
<div class="v" style="left:685px;top:122px">12,265 MB</div>
<div class="bg1" style="left:59px;top:147px;width:750px"></div>
<div class="sep" style="left:35px;top:171px;width:774px"></div>
<svg class="i" style="left:35px;top:147px" width="24" height="25"><use href="#clk"/></svg>
<div class="t" style="left:61px;top:147px">Virtual Memory Load</div>
<div class="v" style="left:325px;top:147px">28.7 %</div>
<div class="v" style="left:445px;top:147px">28.1 %</div>
<div class="v" style="left:565px;top:147px">29.3 %</div>
<div class="v" style="left:685px;top:147px">28.4 %</div>
<div class="sep" style="left:35px;top:196px;width:774px"></div>
<svg class="i" style="left:35px;top:172px" width="24" height="25"><use href="#clk"/></svg>
<div class="t" style="left:61px;top:172px">Physical Memory Used</div>
<div class="v" style="left:325px;top:172px">4,673 MB</div>
<div class="v" style="left:445px;top:172px">4,633 MB</div>
<div class="v" style="left:565px;top:172px">4,879 MB</div>
<div class="v" style="left:685px;top:172px">4,713 MB</div>
<div class="bg1" style="left:59px;top:197px;width:750px"></div>
<div class="sep" style="left:35px;top:221px;width:774px"></div>
<svg class="i" style="left:35px;top:197px" width="24" height="25"><use href="#clk"/></svg>
<div class="t" style="left:61px;top:197px">Physical Memory Available</div>
<div class="v" style="left:325px;top:197px">11,455 MB</div>
<div class="v" style="left:445px;top:197px">11,249 MB</div>
<div class="v" style="left:565px;top:197px">11,494 MB</div>
<div class="v" style="left:685px;top:197px">11,415 MB</div>
<div class="sep" style="left:35px;top:246px;width:774px"></div>
<svg class="i" style="left:35px;top:222px" width="24" height="25"><use href="#clk"/></svg>
<div class="t" style="left:61px;top:222px">Physical Memory Load</div>
<div class="v" style="left:325px;top:222px">28.9 %</div>
<div class="v" style="left:445px;top:222px">28.7 %</div>
<div class="v" style="left:565px;top:222px">30.2 %</div>
<div class="v" style="left:685px;top:222px">29.2 %</div>
<div class="bg1" style="left:59px;top:247px;width:750px"></div>
<div class="sep" style="left:35px;top:271px;width:774px"></div>
<svg class="i" style="left:35px;top:247px" width="24" height="25"><use href="#clk"/></svg>
<div class="t" style="left:61px;top:247px">Page File Usage</div>
<div class="v" style="left:325px;top:247px">0.1 %</div>
<div class="v" style="left:445px;top:247px">0.1 %</div>
<div class="v" style="left:565px;top:247px">0.1 %</div>
<div class="v" style="left:685px;top:247px">0.1 %</div>
<div class="hd" style="left:59px;top:297px;width:750px"></div>
<div class="sep" style="left:35px;top:321px;width:24px"></div>
<svg class="i" style="left:11px;top:297px" width="24" height="25"><use href="#chv"/></svg>
<svg class="i" style="left:35px;top:297px" width="24" height="25"><use href="#chip"/></svg>
<div class="t b" style="left:61px;top:297px">CPU [#0]: Intel Processor N100</div>
<div class="sep" style="left:59px;top:346px;width:750px"></div>
<svg class="i" style="left:35px;top:322px" width="24" height="25"><use href="#chr"/></svg>
<svg class="i" style="left:59px;top:322px" width="24" height="25"><use href="#bolt"/></svg>
<div class="t" style="left:85px;top:322px">Core VIDs</div>
<div class="v" style="left:325px;top:322px">0.999 V</div>
<div class="v" style="left:445px;top:322px">0.685 V</div>
<div class="v" style="left:565px;top:322px">1.008 V</div>
<div class="v" style="left:685px;top:322px">1.000 V</div>
<div class="bg1" style="left:59px;top:347px;width:750px"></div>
<div class="sep" style="left:35px;top:371px;width:774px"></div>
<svg class="i" style="left:35px;top:347px" width="24" height="25"><use href="#bolt"/></svg>
<div class="t" style="left:61px;top:347px">SA VID</div>
<div class="v" style="left:325px;top:347px">0.713 V</div>
<div class="v" style="left:445px;top:347px">0.711 V</div>
<div class="v" style="left:565px;top:347px">0.733 V</div>
<div class="v" style="left:685px;top:347px">0.715 V</div>
<div class="sep" style="left:59px;top:396px;width:750px"></div>
<svg class="i" style="left:35px;top:372px" width="24" height="25"><use href="#chr"/></svg>
<svg class="i" style="left:59px;top:372px" width="24" height="25"><use href="#clk"/></svg>
<div class="t" style="left:85px;top:372px">Core Clocks</div>
<div class="v" style="left:325px;top:372px">2,892.9 MHz</div>
<div class="v" style="left:445px;top:372px">1,496.3 MHz</div>
<div class="v" style="left:565px;top:372px">2,893.6 MHz</div>
<div class="v" style="left:685px;top:372px">2,891.9 MHz</div>
<div class="bg1" style="left:59px;top:397px;width:750px"></div>
<div class="sep" style="left:35px;top:421px;width:774px"></div>
<svg class="i" style="left:35px;top:397px" width="24" height="25"><use href="#clk"/></svg>
<div class="t" style="left:61px;top:397px">Bus Clock</div>
<div class="v" style="left:325px;top:397px">99.8 MHz</div>
<div class="v" style="left:445px;top:397px">99.7 MHz</div>
<div class="v" style="left:565px;top:397px">99.8 MHz</div>
<div class="v" style="left:685px;top:397px">99.8 MHz</div>
<div class="sep" style="left:35px;top:446px;width:774px"></div>
<svg class="i" style="left:35px;top:422px" width="24" height="25"><use href="#clk"/></svg>
<div class="t" style="left:61px;top:422px">Ring/LLC Clock</div>
<div class="v" style="left:325px;top:422px">2,294.4 MHz</div>
<div class="v" style="left:445px;top:422px">2,293.8 MHz</div>
<div class="v" style="left:565px;top:422px">2,294.9 MHz</div>
<div class="v" style="left:685px;top:422px">2,294.4 MHz</div>
<div class="bg1" style="left:83px;top:447px;width:726px"></div>
<div class="sep" style="left:59px;top:471px;width:750px"></div>
<svg class="i" style="left:35px;top:447px" width="24" height="25"><use href="#chv"/></svg>
<svg class="i" style="left:59px;top:447px" width="24" height="25"><use href="#clk"/></svg>
<div class="t" style="left:85px;top:447px">Core Effective Clocks</div>
<div class="v" style="left:325px;top:447px">2,890.3 MHz</div>
<div class="v" style="left:445px;top:447px">1,324.8 MHz</div>
<div class="v" style="left:565px;top:447px">2,892.6 MHz</div>
<div class="v" style="left:685px;top:447px">2,891.6 MHz</div>
<div class="sep" style="left:59px;top:496px;width:750px"></div>
<svg class="i" style="left:59px;top:472px" width="24" height="25"><use href="#clk"/></svg>
<div class="t" style="left:85px;top:472px">Core 0 Effective Clock</div>
<div class="v" style="left:325px;top:472px">2,888.0 MHz</div>
<div class="v" style="left:445px;top:472px">1,345.4 MHz</div>
<div class="v" style="left:565px;top:472px">2,890.9 MHz</div>
<div class="v" style="left:685px;top:472px">2,890.2 MHz</div>
<div class="bg1" style="left:83px;top:497px;width:726px"></div>
<div class="sep" style="left:59px;top:521px;width:750px"></div>
<svg class="i" style="left:59px;top:497px" width="24" height="25"><use href="#clk"/></svg>
<div class="t" style="left:85px;top:497px">Core 1 Effective Clock</div>
<div class="v" style="left:325px;top:497px">2,890.7 MHz</div>
<div class="v" style="left:445px;top:497px">1,410.4 MHz</div>
<div class="v" style="left:565px;top:497px">2,892.5 MHz</div>
<div class="v" style="left:685px;top:497px">2,891.9 MHz</div>
<div class="sep" style="left:59px;top:546px;width:750px"></div>
<svg class="i" style="left:59px;top:522px" width="24" height="25"><use href="#clk"/></svg>
<div class="t" style="left:85px;top:522px">Core 2 Effective Clock</div>
<div class="v" style="left:325px;top:522px">2,891.0 MHz</div>
<div class="v" style="left:445px;top:522px">1,307.5 MHz</div>
<div class="v" style="left:565px;top:522px">2,892.6 MHz</div>
<div class="v" style="left:685px;top:522px">2,892.1 MHz</div>
<div class="bg1" style="left:83px;top:547px;width:726px"></div>
<div class="sep" style="left:59px;top:571px;width:750px"></div>
<svg class="i" style="left:59px;top:547px" width="24" height="25"><use href="#clk"/></svg>
<div class="t" style="left:85px;top:547px">Core 3 Effective Clock</div>
<div class="v" style="left:325px;top:547px">2,891.5 MHz</div>
<div class="v" style="left:445px;top:547px">1,235.9 MHz</div>
<div class="v" style="left:565px;top:547px">2,892.6 MHz</div>
<div class="v" style="left:685px;top:547px">2,892.2 MHz</div>
<div class="sep" style="left:35px;top:596px;width:774px"></div>
<svg class="i" style="left:35px;top:572px" width="24" height="25"><use href="#clk"/></svg>
<div class="t" style="left:61px;top:572px">Average Effective Clock</div>
<div class="v" style="left:325px;top:572px">2,890.3 MHz</div>
<div class="v" style="left:445px;top:572px">1,324.8 MHz</div>
<div class="v" style="left:565px;top:572px">2,892.1 MHz</div>
<div class="v" style="left:685px;top:572px">2,891.6 MHz</div>
<div class="bg1" style="left:83px;top:597px;width:726px"></div>
<div class="sep" style="left:59px;top:621px;width:750px"></div>
<svg class="i" style="left:35px;top:597px" width="24" height="25"><use href="#chv"/></svg>
<svg class="i" style="left:59px;top:597px" width="24" height="25"><use href="#clk"/></svg>
<div class="t" style="left:85px;top:597px">Core Usage</div>
<div class="v" style="left:325px;top:597px">100.0 %</div>
<div class="v" style="left:445px;top:597px">55.3 %</div>
<div class="v" style="left:565px;top:597px">100.0 %</div>
<div class="v" style="left:685px;top:597px">100.0 %</div>
<div class="sep" style="left:59px;top:646px;width:750px"></div>
<svg class="i" style="left:59px;top:622px" width="24" height="25"><use href="#clk"/></svg>
<div class="t" style="left:85px;top:622px">Core 0 Usage</div>
<div class="v" style="left:325px;top:622px">100.0 %</div>
<div class="v" style="left:445px;top:622px">59.4 %</div>
<div class="v" style="left:565px;top:622px">100.0 %</div>
<div class="v" style="left:685px;top:622px">100.0 %</div>
<div class="bg1" style="left:83px;top:647px;width:726px"></div>
<div class="sep" style="left:59px;top:671px;width:750px"></div>
<svg class="i" style="left:59px;top:647px" width="24" height="25"><use href="#clk"/></svg>
<div class="t" style="left:85px;top:647px">Core 1 Usage</div>
<div class="v" style="left:325px;top:647px">100.0 %</div>
<div class="v" style="left:445px;top:647px">61.6 %</div>
<div class="v" style="left:565px;top:647px">100.0 %</div>
<div class="v" style="left:685px;top:647px">100.0 %</div>
<div class="sep" style="left:59px;top:696px;width:750px"></div>
<svg class="i" style="left:59px;top:672px" width="24" height="25"><use href="#clk"/></svg>
<div class="t" style="left:85px;top:672px">Core 2 Usage</div>
<div class="v" style="left:325px;top:672px">100.0 %</div>
<div class="v" style="left:445px;top:672px">54.0 %</div>
<div class="v" style="left:565px;top:672px">100.0 %</div>
<div class="v" style="left:685px;top:672px">100.0 %</div>
<div class="bg1" style="left:83px;top:697px;width:726px"></div>
<div class="sep" style="left:59px;top:721px;width:750px"></div>
<svg class="i" style="left:59px;top:697px" width="24" height="25"><use href="#clk"/></svg>
<div class="t" style="left:85px;top:697px">Core 3 Usage</div>
<div class="v" style="left:325px;top:697px">100.0 %</div>
<div class="v" style="left:445px;top:697px">46.3 %</div>
<div class="v" style="left:565px;top:697px">100.0 %</div>
<div class="v" style="left:685px;top:697px">100.0 %</div>
<div class="sep" style="left:35px;top:746px;width:774px"></div>
<svg class="i" style="left:35px;top:722px" width="24" height="25"><use href="#clk"/></svg>
<div class="t" style="left:61px;top:722px">Max CPU/Thread Usage</div>
<div class="v" style="left:325px;top:722px">100.0 %</div>
<div class="v" style="left:445px;top:722px">61.6 %</div>
<div class="v" style="left:565px;top:722px">100.0 %</div>
<div class="v" style="left:685px;top:722px">100.0 %</div>
<div class="bg1" style="left:59px;top:747px;width:750px"></div>
<div class="sep" style="left:35px;top:771px;width:774px"></div>
<svg class="i" style="left:35px;top:747px" width="24" height="25"><use href="#clk"/></svg>
<div class="t" style="left:61px;top:747px">Total CPU Usage</div>
<div class="v" style="left:325px;top:747px">100.0 %</div>
<div class="v" style="left:445px;top:747px">55.3 %</div>
<div class="v" style="left:565px;top:747px">100.0 %</div>
<div class="v" style="left:685px;top:747px">100.0 %</div>
<div class="sep" style="left:35px;top:796px;width:774px"></div>
<svg class="i" style="left:35px;top:772px" width="24" height="25"><use href="#clk"/></svg>
<div class="t" style="left:61px;top:772px">On-Demand Clock Modulation</div>
<div class="v" style="left:325px;top:772px">100.0 %</div>
<div class="v" style="left:445px;top:772px">100.0 %</div>
<div class="v" style="left:565px;top:772px">100.0 %</div>
<div class="v" style="left:685px;top:772px">100.0 %</div>
<div class="bg1" style="left:83px;top:797px;width:726px"></div>
<div class="sep" style="left:59px;top:821px;width:750px"></div>
<svg class="i" style="left:35px;top:797px" width="24" height="25"><use href="#chr"/></svg>
<svg class="i" style="left:59px;top:797px" width="24" height="25"><use href="#clk"/></svg>
<div class="t" style="left:85px;top:797px">Core Utility</div>
<div class="v" style="left:325px;top:797px">362.0 %</div>
<div class="v" style="left:445px;top:797px">166.5 %</div>
<div class="v" style="left:565px;top:797px">362.0 %</div>
<div class="v" style="left:685px;top:797px">362.0 %</div>
<div class="sep" style="left:35px;top:846px;width:774px"></div>
<svg class="i" style="left:35px;top:822px" width="24" height="25"><use href="#clk"/></svg>
<div class="t" style="left:61px;top:822px">Total CPU Utility</div>
<div class="v" style="left:325px;top:822px">362.0 %</div>
<div class="v" style="left:445px;top:822px">166.5 %</div>
<div class="v" style="left:565px;top:822px">362.1 %</div>
<div class="v" style="left:685px;top:822px">362.0 %</div>
<div class="bg1" style="left:83px;top:847px;width:726px"></div>
<div class="sep" style="left:59px;top:871px;width:750px"></div>
<svg class="i" style="left:35px;top:847px" width="24" height="25"><use href="#chr"/></svg>
<svg class="i" style="left:59px;top:847px" width="24" height="25"><use href="#clk"/></svg>
<div class="t" style="left:85px;top:847px">Core Ratios</div>
<div class="v" style="left:325px;top:847px">29.0 x</div>
<div class="v" style="left:445px;top:847px">15.0 x</div>
<div class="v" style="left:565px;top:847px">29.0 x</div>
<div class="v" style="left:685px;top:847px">29.0 x</div>
<div class="sep" style="left:35px;top:896px;width:774px"></div>
<svg class="i" style="left:35px;top:872px" width="24" height="25"><use href="#clk"/></svg>
<div class="t" style="left:61px;top:872px">Uncore Ratio</div>
<div class="v" style="left:325px;top:872px">23.0 x</div>
<div class="v" style="left:445px;top:872px">23.0 x</div>
<div class="v" style="left:565px;top:872px">23.0 x</div>
<div class="v" style="left:685px;top:872px">23.0 x</div>
<div class="bg1" style="left:59px;top:897px;width:750px"></div>
<div class="hd" style="left:59px;top:922px;width:750px"></div>
<div class="sep" style="left:35px;top:946px;width:24px"></div>
<svg class="i" style="left:11px;top:922px" width="24" height="25"><use href="#chv"/></svg>
<svg class="i" style="left:35px;top:922px" width="24" height="25"><use href="#chip"/></svg>
<div class="t b" style="left:61px;top:922px">CPU [#0]: Intel Processor N100: DTS</div>
<div class="bg1" style="left:83px;top:947px;width:726px"></div>
<div class="sep" style="left:59px;top:971px;width:750px"></div>
<svg class="i" style="left:35px;top:947px" width="24" height="25"><use href="#chv"/></svg>
<svg class="i" style="left:59px;top:947px" width="24" height="25"><use href="#therm"/></svg>
<div class="t" style="left:85px;top:947px">Core Temperatures</div>
<div class="v" style="left:325px;top:947px">70 °C</div>
<div class="v" style="left:445px;top:947px">60 °C</div>
<div class="v" style="left:565px;top:947px">73 °C</div>
<div class="v" style="left:685px;top:947px">68 °C</div>
<div class="sep" style="left:59px;top:996px;width:750px"></div>
<svg class="i" style="left:59px;top:972px" width="24" height="25"><use href="#therm"/></svg>
<div class="t" style="left:85px;top:972px">Core 0</div>
<div class="v" style="left:325px;top:972px">70 °C</div>
<div class="v" style="left:445px;top:972px">60 °C</div>
<div class="v" style="left:565px;top:972px">73 °C</div>
<div class="v" style="left:685px;top:972px">68 °C</div>
<div class="bg1" style="left:83px;top:997px;width:726px"></div>
<div class="sep" style="left:59px;top:1021px;width:750px"></div>
<svg class="i" style="left:59px;top:997px" width="24" height="25"><use href="#therm"/></svg>
<div class="t" style="left:85px;top:997px">Core 1</div>
<div class="v" style="left:325px;top:997px">70 °C</div>
<div class="v" style="left:445px;top:997px">60 °C</div>
<div class="v" style="left:565px;top:997px">71 °C</div>
<div class="v" style="left:685px;top:997px">69 °C</div>
<div class="sep" style="left:59px;top:1046px;width:750px"></div>
<svg class="i" style="left:59px;top:1022px" width="24" height="25"><use href="#therm"/></svg>
<div class="t" style="left:85px;top:1022px">Core 2</div>
<div class="v" style="left:325px;top:1022px">70 °C</div>
<div class="v" style="left:445px;top:1022px">60 °C</div>
<div class="v" style="left:565px;top:1022px">73 °C</div>
<div class="v" style="left:685px;top:1022px">69 °C</div>
<div class="bg1" style="left:83px;top:1047px;width:726px"></div>
<div class="sep" style="left:59px;top:1071px;width:750px"></div>
<svg class="i" style="left:59px;top:1047px" width="24" height="25"><use href="#therm"/></svg>
<div class="t" style="left:85px;top:1047px">Core 3</div>
<div class="v" style="left:325px;top:1047px">70 °C</div>
<div class="v" style="left:445px;top:1047px">60 °C</div>
<div class="v" style="left:565px;top:1047px">73 °C</div>
<div class="v" style="left:685px;top:1047px">68 °C</div>
<div class="sep" style="left:59px;top:1096px;width:750px"></div>
<svg class="i" style="left:35px;top:1072px" width="24" height="25"><use href="#chv"/></svg>
<svg class="i" style="left:59px;top:1072px" width="24" height="25"><use href="#therm"/></svg>
<div class="t" style="left:85px;top:1072px">Core Distance to TjMAX</div>
<div class="v" style="left:325px;top:1072px">35 °C</div>
<div class="v" style="left:445px;top:1072px">32 °C</div>
<div class="v" style="left:565px;top:1072px">45 °C</div>
<div class="v" style="left:685px;top:1072px">37 °C</div>
<div class="bg1" style="left:83px;top:1097px;width:726px"></div>
<div class="sep" style="left:59px;top:1121px;width:750px"></div>
<svg class="i" style="left:59px;top:1097px" width="24" height="25"><use href="#therm"/></svg>
<div class="t" style="left:85px;top:1097px">Core 0 Distance to TjMAX</div>
<div class="v" style="left:325px;top:1097px">35 °C</div>
<div class="v" style="left:445px;top:1097px">32 °C</div>
<div class="v" style="left:565px;top:1097px">45 °C</div>
<div class="v" style="left:685px;top:1097px">37 °C</div>
<div class="sep" style="left:59px;top:1146px;width:750px"></div>
<svg class="i" style="left:59px;top:1122px" width="24" height="25"><use href="#therm"/></svg>
<div class="t" style="left:85px;top:1122px">Core 1 Distance to TjMAX</div>
<div class="v" style="left:325px;top:1122px">35 °C</div>
<div class="v" style="left:445px;top:1122px">34 °C</div>
<div class="v" style="left:565px;top:1122px">45 °C</div>
<div class="v" style="left:685px;top:1122px">36 °C</div>
<div class="bg1" style="left:83px;top:1147px;width:726px"></div>
<div class="sep" style="left:59px;top:1171px;width:750px"></div>
<svg class="i" style="left:59px;top:1147px" width="24" height="25"><use href="#therm"/></svg>
<div class="t" style="left:85px;top:1147px">Core 2 Distance to TjMAX</div>
<div class="v" style="left:325px;top:1147px">35 °C</div>
<div class="v" style="left:445px;top:1147px">32 °C</div>
<div class="v" style="left:565px;top:1147px">45 °C</div>
<div class="v" style="left:685px;top:1147px">36 °C</div>
<div class="sep" style="left:59px;top:1196px;width:750px"></div>
<svg class="i" style="left:59px;top:1172px" width="24" height="25"><use href="#therm"/></svg>
<div class="t" style="left:85px;top:1172px">Core 3 Distance to TjMAX</div>
<div class="v" style="left:325px;top:1172px">35 °C</div>
<div class="v" style="left:445px;top:1172px">32 °C</div>
<div class="v" style="left:565px;top:1172px">45 °C</div>
<div class="v" style="left:685px;top:1172px">37 °C</div>
<div class="bg1" style="left:59px;top:1197px;width:750px"></div>
<div class="sep" style="left:35px;top:1221px;width:774px"></div>
<svg class="i" style="left:35px;top:1197px" width="24" height="25"><use href="#therm"/></svg>
<div class="t" style="left:61px;top:1197px">CPU Package</div>
<div class="v" style="left:325px;top:1197px">70 °C</div>
<div class="v" style="left:445px;top:1197px">60 °C</div>
<div class="v" style="left:565px;top:1197px">73 °C</div>
<div class="v" style="left:685px;top:1197px">68 °C</div>
<div class="sep" style="left:35px;top:1246px;width:774px"></div>
<svg class="i" style="left:35px;top:1222px" width="24" height="25"><use href="#therm"/></svg>
<div class="t" style="left:61px;top:1222px">Core Max</div>
<div class="v" style="left:325px;top:1222px">70 °C</div>
<div class="v" style="left:445px;top:1222px">60 °C</div>
<div class="v" style="left:565px;top:1222px">73 °C</div>
<div class="v" style="left:685px;top:1222px">69 °C</div>
<div class="bg1" style="left:83px;top:1247px;width:726px"></div>
<div class="sep" style="left:59px;top:1271px;width:750px"></div>
<svg class="i" style="left:35px;top:1247px" width="24" height="25"><use href="#chv"/></svg>
<svg class="i" style="left:59px;top:1247px" width="24" height="25"><use href="#clk"/></svg>
<div class="t" style="left:85px;top:1247px">Core Thermal Throttling</div>
<div class="v" style="left:325px;top:1247px">No</div>
<div class="v" style="left:445px;top:1247px">No</div>
<div class="v" style="left:565px;top:1247px">No</div>
<div class="sep" style="left:59px;top:1296px;width:750px"></div>
<svg class="i" style="left:59px;top:1272px" width="24" height="25"><use href="#clk"/></svg>
<div class="t" style="left:85px;top:1272px">Core 0 Thermal Throttling</div>
<div class="v" style="left:325px;top:1272px">No</div>
<div class="v" style="left:445px;top:1272px">No</div>
<div class="v" style="left:565px;top:1272px">No</div>
<div class="bg1" style="left:83px;top:1297px;width:726px"></div>
<div class="sep" style="left:59px;top:1321px;width:750px"></div>
<svg class="i" style="left:59px;top:1297px" width="24" height="25"><use href="#clk"/></svg>
<div class="t" style="left:85px;top:1297px">Core 1 Thermal Throttling</div>
<div class="v" style="left:325px;top:1297px">No</div>
<div class="v" style="left:445px;top:1297px">No</div>
<div class="v" style="left:565px;top:1297px">No</div>
<div class="sep" style="left:59px;top:1346px;width:750px"></div>
<svg class="i" style="left:59px;top:1322px" width="24" height="25"><use href="#clk"/></svg>
<div class="t" style="left:85px;top:1322px">Core 2 Thermal Throttling</div>
<div class="v" style="left:325px;top:1322px">No</div>
<div class="v" style="left:445px;top:1322px">No</div>
<div class="v" style="left:565px;top:1322px">No</div>
<div class="bg1" style="left:83px;top:1347px;width:726px"></div>
<div class="sep" style="left:59px;top:1371px;width:750px"></div>
<svg class="i" style="left:59px;top:1347px" width="24" height="25"><use href="#clk"/></svg>
<div class="t" style="left:85px;top:1347px">Core 3 Thermal Throttling</div>
<div class="v" style="left:325px;top:1347px">No</div>
<div class="v" style="left:445px;top:1347px">No</div>
<div class="v" style="left:565px;top:1347px">No</div>
<div class="sep" style="left:59px;top:1396px;width:750px"></div>
<svg class="i" style="left:35px;top:1372px" width="24" height="25"><use href="#chv"/></svg>
<svg class="i" style="left:59px;top:1372px" width="24" height="25"><use href="#clk"/></svg>
<div class="t" style="left:85px;top:1372px">Core Critical Temperature</div>
<div class="v" style="left:325px;top:1372px">No</div>
<div class="v" style="left:445px;top:1372px">No</div>
<div class="v" style="left:565px;top:1372px">No</div>
<div class="bg1" style="left:83px;top:1397px;width:726px"></div>
<div class="sep" style="left:59px;top:1421px;width:750px"></div>
<svg class="i" style="left:59px;top:1397px" width="24" height="25"><use href="#clk"/></svg>
<div class="t" style="left:85px;top:1397px">Core 0 Critical Temperature</div>
<div class="v" style="left:325px;top:1397px">No</div>
<div class="v" style="left:445px;top:1397px">No</div>
<div class="v" style="left:565px;top:1397px">No</div>
<div class="sep" style="left:59px;top:1446px;width:750px"></div>
<svg class="i" style="left:59px;top:1422px" width="24" height="25"><use href="#clk"/></svg>
<div class="t" style="left:85px;top:1422px">Core 1 Critical Temperature</div>
<div class="v" style="left:325px;top:1422px">No</div>
<div class="v" style="left:445px;top:1422px">No</div>
<div class="v" style="left:565px;top:1422px">No</div>
<div class="bg1" style="left:83px;top:1447px;width:726px"></div>
<div class="sep" style="left:59px;top:1471px;width:750px"></div>
<svg class="i" style="left:59px;top:1447px" width="24" height="25"><use href="#clk"/></svg>
<div class="t" style="left:85px;top:1447px">Core 2 Critical Temperature</div>
<div class="v" style="left:325px;top:1447px">No</div>
<div class="v" style="left:445px;top:1447px">No</div>
<div class="v" style="left:565px;top:1447px">No</div>
<div class="sep" style="left:59px;top:1496px;width:750px"></div>
<svg class="i" style="left:59px;top:1472px" width="24" height="25"><use href="#clk"/></svg>
<div class="t" style="left:85px;top:1472px">Core 3 Critical Temperature</div>
<div class="v" style="left:325px;top:1472px">No</div>
<div class="v" style="left:445px;top:1472px">No</div>
<div class="v" style="left:565px;top:1472px">No</div>
<div class="bg1" style="left:83px;top:1497px;width:726px"></div>
<div class="sep" style="left:59px;top:1521px;width:750px"></div>
<svg class="i" style="left:35px;top:1497px" width="24" height="25"><use href="#chv"/></svg>
<svg class="i" style="left:59px;top:1497px" width="24" height="25"><use href="#clk"/></svg>
<div class="t" style="left:85px;top:1497px">Core Power Limit Exceeded</div>
<div class="v" style="left:325px;top:1497px">No</div>
<div class="v" style="left:445px;top:1497px">No</div>
<div class="v" style="left:565px;top:1497px">No</div>
<div class="sep" style="left:59px;top:1546px;width:750px"></div>
<svg class="i" style="left:59px;top:1522px" width="24" height="25"><use href="#clk"/></svg>
<div class="t" style="left:85px;top:1522px">Core 0 Power Limit Exceeded</div>
<div class="v" style="left:325px;top:1522px">No</div>
<div class="v" style="left:445px;top:1522px">No</div>
<div class="v" style="left:565px;top:1522px">No</div>
<div class="bg1" style="left:83px;top:1547px;width:726px"></div>
<div class="sep" style="left:59px;top:1571px;width:750px"></div>
<svg class="i" style="left:59px;top:1547px" width="24" height="25"><use href="#clk"/></svg>
<div class="t" style="left:85px;top:1547px">Core 1 Power Limit Exceeded</div>
<div class="v" style="left:325px;top:1547px">No</div>
<div class="v" style="left:445px;top:1547px">No</div>
<div class="v" style="left:565px;top:1547px">No</div>
<div class="sep" style="left:59px;top:1596px;width:750px"></div>
<svg class="i" style="left:59px;top:1572px" width="24" height="25"><use href="#clk"/></svg>
<div class="t" style="left:85px;top:1572px">Core 2 Power Limit Exceeded</div>
<div class="v" style="left:325px;top:1572px">No</div>
<div class="v" style="left:445px;top:1572px">No</div>
<div class="v" style="left:565px;top:1572px">No</div>
<div class="bg1" style="left:83px;top:1597px;width:726px"></div>
<div class="sep" style="left:59px;top:1621px;width:750px"></div>
<svg class="i" style="left:59px;top:1597px" width="24" height="25"><use href="#clk"/></svg>
<div class="t" style="left:85px;top:1597px">Core 3 Power Limit Exceeded</div>
<div class="v" style="left:325px;top:1597px">No</div>
<div class="v" style="left:445px;top:1597px">No</div>
<div class="v" style="left:565px;top:1597px">No</div>
<div class="sep" style="left:35px;top:1646px;width:774px"></div>
<svg class="i" style="left:35px;top:1622px" width="24" height="25"><use href="#clk"/></svg>
<div class="t" style="left:61px;top:1622px">Package/Ring Thermal Throttling</div>
<div class="v" style="left:325px;top:1622px">No</div>
<div class="v" style="left:445px;top:1622px">No</div>
<div class="v" style="left:565px;top:1622px">No</div>
<div class="bg1" style="left:59px;top:1647px;width:750px"></div>
<div class="sep" style="left:35px;top:1671px;width:774px"></div>
<svg class="i" style="left:35px;top:1647px" width="24" height="25"><use href="#clk"/></svg>
<div class="t" style="left:61px;top:1647px">Package/Ring Critical Temperature</div>
<div class="v" style="left:325px;top:1647px">No</div>
<div class="v" style="left:445px;top:1647px">No</div>
<div class="v" style="left:565px;top:1647px">No</div>
<div class="sep" style="left:35px;top:1696px;width:774px"></div>
<svg class="i" style="left:35px;top:1672px" width="24" height="25"><use href="#clk"/></svg>
<div class="t" style="left:61px;top:1672px">Package/Ring Power Limit Exceeded</div>
<div class="v" style="left:325px;top:1672px">No</div>
<div class="v" style="left:445px;top:1672px">No</div>
<div class="v" style="left:565px;top:1672px">No</div>
<div class="bg1" style="left:59px;top:1697px;width:750px"></div>
<div class="hd" style="left:59px;top:1722px;width:750px"></div>
<div class="sep" style="left:35px;top:1746px;width:24px"></div>
<svg class="i" style="left:11px;top:1722px" width="24" height="25"><use href="#chv"/></svg>
<svg class="i" style="left:35px;top:1722px" width="24" height="25"><use href="#chip"/></svg>
<div class="t b" style="left:61px;top:1722px">CPU [#0]: Intel Processor N100: Enhanced</div>
<div class="bg1" style="left:59px;top:1747px;width:750px"></div>
<div class="sep" style="left:35px;top:1771px;width:774px"></div>
<svg class="i" style="left:35px;top:1747px" width="24" height="25"><use href="#therm"/></svg>
<div class="t" style="left:61px;top:1747px">CPU Package</div>
<div class="v" style="left:325px;top:1747px">70 °C</div>
<div class="v" style="left:445px;top:1747px">60 °C</div>
<div class="v" style="left:565px;top:1747px">73 °C</div>
<div class="v" style="left:685px;top:1747px">68 °C</div>
<div class="sep" style="left:35px;top:1796px;width:774px"></div>
<svg class="i" style="left:35px;top:1772px" width="24" height="25"><use href="#therm"/></svg>
<div class="t" style="left:61px;top:1772px">CPU IA Cores</div>
<div class="v" style="left:325px;top:1772px">70 °C</div>
<div class="v" style="left:445px;top:1772px">60 °C</div>
<div class="v" style="left:565px;top:1772px">73 °C</div>
<div class="v" style="left:685px;top:1772px">68 °C</div>
<div class="bg1" style="left:59px;top:1797px;width:750px"></div>
<div class="sep" style="left:35px;top:1821px;width:774px"></div>
<svg class="i" style="left:35px;top:1797px" width="24" height="25"><use href="#therm"/></svg>
<div class="t" style="left:61px;top:1797px">CPU GT Cores (Graphics)</div>
<div class="v" style="left:325px;top:1797px">56 °C</div>
<div class="v" style="left:445px;top:1797px">46 °C</div>
<div class="v" style="left:565px;top:1797px">58 °C</div>
<div class="v" style="left:685px;top:1797px">55 °C</div>
<div class="sep" style="left:35px;top:1846px;width:774px"></div>
<svg class="i" style="left:35px;top:1822px" width="24" height="25"><use href="#bolt"/></svg>
<div class="t" style="left:61px;top:1822px">iGPU VID</div>
<div class="v" style="left:325px;top:1822px">0.240 V</div>
<div class="v" style="left:445px;top:1822px">0.235 V</div>
<div class="v" style="left:565px;top:1822px">0.292 V</div>
<div class="v" style="left:685px;top:1822px">0.244 V</div>
<div class="bg1" style="left:83px;top:1847px;width:726px"></div>
<div class="sep" style="left:59px;top:1871px;width:750px"></div>
<svg class="i" style="left:35px;top:1847px" width="24" height="25"><use href="#chr"/></svg>
<svg class="i" style="left:59px;top:1847px" width="24" height="25"><use href="#bolt"/></svg>
<div class="t" style="left:85px;top:1847px">Voltage Offsets</div>
<div class="v" style="left:445px;top:1847px">0.000 V</div>
<div class="v" style="left:565px;top:1847px">0.000 V</div>
<div class="sep" style="left:35px;top:1896px;width:774px"></div>
<svg class="i" style="left:35px;top:1872px" width="24" height="25"><use href="#bolt"/></svg>
<div class="t" style="left:61px;top:1872px">VDDQ TX Voltage</div>
<div class="v" style="left:325px;top:1872px">0.800 V</div>
<div class="v" style="left:445px;top:1872px">0.800 V</div>
<div class="v" style="left:565px;top:1872px">0.800 V</div>
<div class="v" style="left:685px;top:1872px">0.800 V</div>
<div class="bg1" style="left:59px;top:1897px;width:750px"></div>
<div class="sep" style="left:35px;top:1921px;width:774px"></div>
<svg class="i" style="left:35px;top:1897px" width="24" height="25"><use href="#bolt"/></svg>
<div class="t" style="left:61px;top:1897px">VR VCC Current (SVID IOUT)</div>
<div class="v" style="left:325px;top:1897px">7.660 A</div>
<div class="v" style="left:445px;top:1897px">6.625 A</div>
<div class="v" style="left:565px;top:1897px">10.973 A</div>
<div class="v" style="left:685px;top:1897px">7.644 A</div>
<div class="sep" style="left:35px;top:1946px;width:774px"></div>
<svg class="i" style="left:35px;top:1922px" width="24" height="25"><use href="#bolt"/></svg>
<div class="t" style="left:61px;top:1922px">CPU Package Power</div>
<div class="v" style="left:325px;top:1922px">10.331 W</div>
<div class="v" style="left:445px;top:1922px">6.679 W</div>
<div class="v" style="left:565px;top:1922px">11.784 W</div>
<div class="v" style="left:685px;top:1922px">10.257 W</div>
<div class="bg1" style="left:59px;top:1947px;width:750px"></div>
<div class="sep" style="left:35px;top:1971px;width:774px"></div>
<svg class="i" style="left:35px;top:1947px" width="24" height="25"><use href="#bolt"/></svg>
<div class="t" style="left:61px;top:1947px">IA Cores Power</div>
<div class="v" style="left:325px;top:1947px">6.996 W</div>
<div class="v" style="left:445px;top:1947px">3.219 W</div>
<div class="v" style="left:565px;top:1947px">8.114 W</div>
<div class="v" style="left:685px;top:1947px">6.973 W</div>
<div class="t" style="left:847px;top:46px;height:26px;line-height:28px">Sensor</div>
<div class="a" style="left:1161px;top:46px;width:1px;height:25px;background:#e5e5e5"></div>
<div class="a" style="left:1281px;top:46px;width:1px;height:25px;background:#e5e5e5"></div>
<div class="a" style="left:1401px;top:46px;width:1px;height:25px;background:#e5e5e5"></div>
<div class="a" style="left:1521px;top:46px;width:1px;height:25px;background:#e5e5e5"></div>
<div class="a" style="left:1641px;top:46px;width:1px;height:25px;background:#e5e5e5"></div>
<div class="v" style="left:1158px;top:46px">Current</div>
<div class="v" style="left:1278px;top:46px">Minimum</div>
<div class="v" style="left:1398px;top:46px">Maximum</div>
<div class="v" style="left:1518px;top:46px">Average</div>
<div class="sep" style="left:872px;top:95px;width:770px"></div>
<svg class="i" style="left:872px;top:71px" width="24" height="25"><use href="#bolt"/></svg>
<div class="t" style="left:898px;top:71px">GT Cores Power</div>
<div class="v" style="left:1158px;top:71px">0.018 W</div>
<div class="v" style="left:1278px;top:71px">0.010 W</div>
<div class="v" style="left:1398px;top:71px">0.276 W</div>
<div class="v" style="left:1518px;top:71px">0.013 W</div>
<div class="bg1" style="left:896px;top:96px;width:746px"></div>
<div class="sep" style="left:872px;top:120px;width:770px"></div>
<svg class="i" style="left:872px;top:96px" width="24" height="25"><use href="#bolt"/></svg>
<div class="t" style="left:898px;top:96px">System Agent Power</div>
<div class="v" style="left:1158px;top:96px">2.974 W</div>
<div class="v" style="left:1278px;top:96px">2.855 W</div>
<div class="v" style="left:1398px;top:96px">3.402 W</div>
<div class="v" style="left:1518px;top:96px">2.939 W</div>
<div class="sep" style="left:872px;top:145px;width:770px"></div>
<svg class="i" style="left:872px;top:121px" width="24" height="25"><use href="#bolt"/></svg>
<div class="t" style="left:898px;top:121px">Rest-of-Chip Power</div>
<div class="v" style="left:1158px;top:121px">0.218 W</div>
<div class="v" style="left:1278px;top:121px">0.200 W</div>
<div class="v" style="left:1398px;top:121px">0.338 W</div>
<div class="v" style="left:1518px;top:121px">0.205 W</div>
<div class="bg1" style="left:896px;top:146px;width:746px"></div>
<div class="sep" style="left:872px;top:170px;width:770px"></div>
<svg class="i" style="left:872px;top:146px" width="24" height="25"><use href="#bolt"/></svg>
<div class="t" style="left:898px;top:146px">PCH Power</div>
<div class="v" style="left:1158px;top:146px">0.084 W</div>
<div class="v" style="left:1278px;top:146px">0.083 W</div>
<div class="v" style="left:1398px;top:146px">0.085 W</div>
<div class="v" style="left:1518px;top:146px">0.084 W</div>
<div class="sep" style="left:872px;top:195px;width:770px"></div>
<svg class="i" style="left:872px;top:171px" width="24" height="25"><use href="#bolt"/></svg>
<div class="t" style="left:898px;top:171px">PL1 Power Limit (Static)</div>
<div class="v" style="left:1158px;top:171px">15.0 W</div>
<div class="v" style="left:1278px;top:171px">15.0 W</div>
<div class="v" style="left:1398px;top:171px">15.0 W</div>
<div class="v" style="left:1518px;top:171px">15.0 W</div>
<div class="bg1" style="left:896px;top:196px;width:746px"></div>
<div class="sep" style="left:872px;top:220px;width:770px"></div>
<svg class="i" style="left:872px;top:196px" width="24" height="25"><use href="#bolt"/></svg>
<div class="t" style="left:898px;top:196px">PL2 Power Limit (Static)</div>
<div class="v" style="left:1158px;top:196px">25.0 W</div>
<div class="v" style="left:1278px;top:196px">25.0 W</div>
<div class="v" style="left:1398px;top:196px">25.0 W</div>
<div class="v" style="left:1518px;top:196px">25.0 W</div>
<div class="sep" style="left:872px;top:245px;width:770px"></div>
<svg class="i" style="left:872px;top:221px" width="24" height="25"><use href="#clk"/></svg>
<div class="t" style="left:898px;top:221px">GPU Clock</div>
<div class="v" style="left:1158px;top:221px">300.0 MHz</div>
<div class="v" style="left:1278px;top:221px">300.0 MHz</div>
<div class="v" style="left:1398px;top:221px">750.0 MHz</div>
<div class="v" style="left:1518px;top:221px">342.5 MHz</div>
<div class="bg1" style="left:896px;top:246px;width:746px"></div>
<div class="sep" style="left:872px;top:270px;width:770px"></div>
<svg class="i" style="left:872px;top:246px" width="24" height="25"><use href="#clk"/></svg>
<div class="t" style="left:898px;top:246px">GPU D3D Usage</div>
<div class="v" style="left:1158px;top:246px">3.7 %</div>
<div class="v" style="left:1278px;top:246px">1.3 %</div>
<div class="v" style="left:1398px;top:246px">34.9 %</div>
<div class="v" style="left:1518px;top:246px">2.5 %</div>
<div class="sep" style="left:896px;top:295px;width:746px"></div>
<svg class="i" style="left:872px;top:271px" width="24" height="25"><use href="#chr"/></svg>
<svg class="i" style="left:896px;top:271px" width="24" height="25"><use href="#clk"/></svg>
<div class="t" style="left:922px;top:271px">GPU D3D Utilizations</div>
<div class="v" style="left:1278px;top:271px">0.0 %</div>
<div class="v" style="left:1398px;top:271px">0.0 %</div>
<div class="bg1" style="left:896px;top:296px;width:746px"></div>
<div class="sep" style="left:872px;top:320px;width:770px"></div>
<svg class="i" style="left:872px;top:296px" width="24" height="25"><use href="#clk"/></svg>
<div class="t" style="left:898px;top:296px">GPU D3D Memory Dynamic</div>
<div class="v" style="left:1158px;top:296px">564 MB</div>
<div class="v" style="left:1278px;top:296px">532 MB</div>
<div class="v" style="left:1398px;top:296px">665 MB</div>
<div class="v" style="left:1518px;top:296px">563 MB</div>
<div class="hd" style="left:896px;top:346px;width:746px"></div>
<div class="sep" style="left:872px;top:370px;width:24px"></div>
<svg class="i" style="left:848px;top:346px" width="24" height="25"><use href="#chv"/></svg>
<svg class="i" style="left:872px;top:346px" width="24" height="25"><use href="#chip"/></svg>
<div class="t b" style="left:898px;top:346px">Memory Timings</div>
<div class="sep" style="left:872px;top:395px;width:770px"></div>
<svg class="i" style="left:872px;top:371px" width="24" height="25"><use href="#clk"/></svg>
<div class="t" style="left:898px;top:371px">Memory Clock</div>
<div class="v" style="left:1158px;top:371px">2,194.6 MHz</div>
<div class="v" style="left:1278px;top:371px">1,995.1 MHz</div>
<div class="v" style="left:1398px;top:371px">2,394.1 MHz</div>
<div class="v" style="left:1518px;top:371px">2,194.6 MHz</div>
<div class="bg1" style="left:896px;top:396px;width:746px"></div>
<div class="sep" style="left:872px;top:420px;width:770px"></div>
<svg class="i" style="left:872px;top:396px" width="24" height="25"><use href="#clk"/></svg>
<div class="t" style="left:898px;top:396px">Memory Clock Ratio</div>
<div class="v" style="left:1158px;top:396px">22.00 x</div>
<div class="v" style="left:1278px;top:396px">20.00 x</div>
<div class="v" style="left:1398px;top:396px">24.00 x</div>
<div class="v" style="left:1518px;top:396px">22.00 x</div>
<div class="sep" style="left:872px;top:445px;width:770px"></div>
<svg class="i" style="left:872px;top:421px" width="24" height="25"><use href="#clk"/></svg>
<div class="t" style="left:898px;top:421px">Tcas</div>
<div class="v" style="left:1158px;top:421px">52 T</div>
<div class="v" style="left:1278px;top:421px">48 T</div>
<div class="v" style="left:1398px;top:421px">52 T</div>
<div class="bg1" style="left:896px;top:446px;width:746px"></div>
<div class="sep" style="left:872px;top:470px;width:770px"></div>
<svg class="i" style="left:872px;top:446px" width="24" height="25"><use href="#clk"/></svg>
<div class="t" style="left:898px;top:446px">Trcd</div>
<div class="v" style="left:1158px;top:446px">40 T</div>
<div class="v" style="left:1278px;top:446px">36 T</div>
<div class="v" style="left:1398px;top:446px">44 T</div>
<div class="sep" style="left:872px;top:495px;width:770px"></div>
<svg class="i" style="left:872px;top:471px" width="24" height="25"><use href="#clk"/></svg>
<div class="t" style="left:898px;top:471px">Trp</div>
<div class="v" style="left:1158px;top:471px">40 T</div>
<div class="v" style="left:1278px;top:471px">36 T</div>
<div class="v" style="left:1398px;top:471px">44 T</div>
<div class="bg1" style="left:896px;top:496px;width:746px"></div>
<div class="sep" style="left:872px;top:520px;width:770px"></div>
<svg class="i" style="left:872px;top:496px" width="24" height="25"><use href="#clk"/></svg>
<div class="t" style="left:898px;top:496px">Tras</div>
<div class="v" style="left:1158px;top:496px">96 T</div>
<div class="v" style="left:1278px;top:496px">84 T</div>
<div class="v" style="left:1398px;top:496px">104 T</div>
<div class="sep" style="left:872px;top:545px;width:770px"></div>
<svg class="i" style="left:872px;top:521px" width="24" height="25"><use href="#clk"/></svg>
<div class="t" style="left:898px;top:521px">Trc</div>
<div class="v" style="left:1158px;top:521px">148 T</div>
<div class="v" style="left:1278px;top:521px">148 T</div>
<div class="v" style="left:1398px;top:521px">148 T</div>
<div class="bg1" style="left:896px;top:546px;width:746px"></div>
<div class="sep" style="left:872px;top:570px;width:770px"></div>
<svg class="i" style="left:872px;top:546px" width="24" height="25"><use href="#clk"/></svg>
<div class="t" style="left:898px;top:546px">Trfc</div>
<div class="v" style="left:1158px;top:546px">616 T</div>
<div class="v" style="left:1278px;top:546px">560 T</div>
<div class="v" style="left:1398px;top:546px">672 T</div>
<div class="sep" style="left:872px;top:595px;width:770px"></div>
<svg class="i" style="left:872px;top:571px" width="24" height="25"><use href="#clk"/></svg>
<div class="t" style="left:898px;top:571px">Command Rate</div>
<div class="v" style="left:1158px;top:571px">1 T</div>
<div class="v" style="left:1278px;top:571px">1 T</div>
<div class="v" style="left:1398px;top:571px">1 T</div>
<div class="bg1" style="left:896px;top:596px;width:746px"></div>
<div class="sep" style="left:872px;top:620px;width:770px"></div>
<svg class="i" style="left:872px;top:596px" width="24" height="25"><use href="#clk"/></svg>
<div class="t" style="left:898px;top:596px">Gear Mode</div>
<div class="v" style="left:1158px;top:596px;padding-right:5px">4</div>
<div class="v" style="left:1278px;top:596px;padding-right:5px">4</div>
<div class="v" style="left:1398px;top:596px;padding-right:5px">4</div>
<div class="hd" style="left:896px;top:646px;width:746px"></div>
<div class="sep" style="left:872px;top:670px;width:24px"></div>
<svg class="i" style="left:848px;top:646px" width="24" height="25"><use href="#chv"/></svg>
<svg class="i" style="left:872px;top:646px" width="24" height="25"><use href="#chip"/></svg>
<div class="t b" style="left:898px;top:646px">CPU [#0]: Intel Processor N100: Performance Limit Reasons</div>
<div class="sep" style="left:896px;top:695px;width:746px"></div>
<svg class="i" style="left:872px;top:671px" width="24" height="25"><use href="#chv"/></svg>
<svg class="i" style="left:896px;top:671px" width="24" height="25"><use href="#clk"/></svg>
<div class="t" style="left:922px;top:671px">IA Limit Reasons</div>
<div class="v" style="left:1158px;top:671px">Yes</div>
<div class="v" style="left:1278px;top:671px">No</div>
<div class="v" style="left:1398px;top:671px">Yes</div>
<div class="bg1" style="left:920px;top:696px;width:722px"></div>
<div class="sep" style="left:896px;top:720px;width:746px"></div>
<svg class="i" style="left:896px;top:696px" width="24" height="25"><use href="#clk"/></svg>
<div class="t" style="left:922px;top:696px">IA: PROCHOT</div>
<div class="v" style="left:1158px;top:696px">No</div>
<div class="v" style="left:1278px;top:696px">No</div>
<div class="v" style="left:1398px;top:696px">No</div>
<div class="sep" style="left:896px;top:745px;width:746px"></div>
<svg class="i" style="left:896px;top:721px" width="24" height="25"><use href="#clk"/></svg>
<div class="t" style="left:922px;top:721px">IA: Thermal Event</div>
<div class="v" style="left:1158px;top:721px">No</div>
<div class="v" style="left:1278px;top:721px">No</div>
<div class="v" style="left:1398px;top:721px">No</div>
<div class="bg1" style="left:920px;top:746px;width:722px"></div>
<div class="sep" style="left:896px;top:770px;width:746px"></div>
<svg class="i" style="left:896px;top:746px" width="24" height="25"><use href="#clk"/></svg>
<div class="t" style="left:922px;top:746px">IA: Residency State Regulation</div>
<div class="v" style="left:1158px;top:746px">No</div>
<div class="v" style="left:1278px;top:746px">No</div>
<div class="v" style="left:1398px;top:746px">No</div>
<div class="sep" style="left:896px;top:795px;width:746px"></div>
<svg class="i" style="left:896px;top:771px" width="24" height="25"><use href="#clk"/></svg>
<div class="t" style="left:922px;top:771px">IA: Running Average Thermal ...</div>
<div class="v" style="left:1158px;top:771px">No</div>
<div class="v" style="left:1278px;top:771px">No</div>
<div class="v" style="left:1398px;top:771px">No</div>
<div class="bg1" style="left:920px;top:796px;width:722px"></div>
<div class="sep" style="left:896px;top:820px;width:746px"></div>
<svg class="i" style="left:896px;top:796px" width="24" height="25"><use href="#clk"/></svg>
<div class="t" style="left:922px;top:796px">IA: VR Thermal Alert</div>
<div class="v" style="left:1158px;top:796px">No</div>
<div class="v" style="left:1278px;top:796px">No</div>
<div class="v" style="left:1398px;top:796px">No</div>
<div class="sep" style="left:896px;top:845px;width:746px"></div>
<svg class="i" style="left:896px;top:821px" width="24" height="25"><use href="#clk"/></svg>
<div class="t" style="left:922px;top:821px">IA: VR TDC</div>
<div class="v" style="left:1158px;top:821px">No</div>
<div class="v" style="left:1278px;top:821px">No</div>
<div class="v" style="left:1398px;top:821px">No</div>
<div class="bg1" style="left:920px;top:846px;width:722px"></div>
<div class="sep" style="left:896px;top:870px;width:746px"></div>
<svg class="i" style="left:896px;top:846px" width="24" height="25"><use href="#clk"/></svg>
<div class="t" style="left:922px;top:846px">IA: Electrical Design Point/Oth...</div>
<div class="v" style="left:1158px;top:846px">No</div>
<div class="v" style="left:1278px;top:846px">No</div>
<div class="v" style="left:1398px;top:846px">No</div>
<div class="sep" style="left:896px;top:895px;width:746px"></div>
<svg class="i" style="left:896px;top:871px" width="24" height="25"><use href="#clk"/></svg>
<div class="t" style="left:922px;top:871px">IA: Package-Level RAPL/PBM PL1</div>
<div class="v" style="left:1158px;top:871px">No</div>
<div class="v" style="left:1278px;top:871px">No</div>
<div class="v" style="left:1398px;top:871px">No</div>
<div class="bg1" style="left:920px;top:896px;width:722px"></div>
<div class="sep" style="left:896px;top:920px;width:746px"></div>
<svg class="i" style="left:896px;top:896px" width="24" height="25"><use href="#clk"/></svg>
<div class="t" style="left:922px;top:896px">IA: Package-Level RAPL/PBM P...</div>
<div class="v" style="left:1158px;top:896px">No</div>
<div class="v" style="left:1278px;top:896px">No</div>
<div class="v" style="left:1398px;top:896px">No</div>
<div class="sep" style="left:896px;top:945px;width:746px"></div>
<svg class="i" style="left:896px;top:921px" width="24" height="25"><use href="#clk"/></svg>
<div class="t" style="left:922px;top:921px">IA: Max Turbo Limit</div>
<div class="v" style="left:1158px;top:921px">Yes</div>
<div class="v" style="left:1278px;top:921px">Yes</div>
<div class="v" style="left:1398px;top:921px">Yes</div>
<div class="bg1" style="left:920px;top:946px;width:722px"></div>
<div class="sep" style="left:896px;top:970px;width:746px"></div>
<svg class="i" style="left:896px;top:946px" width="24" height="25"><use href="#clk"/></svg>
<div class="t" style="left:922px;top:946px">IA: Turbo Attenuation (MCT)</div>
<div class="v" style="left:1158px;top:946px">No</div>
<div class="v" style="left:1278px;top:946px">No</div>
<div class="v" style="left:1398px;top:946px">No</div>
<div class="sep" style="left:896px;top:995px;width:746px"></div>
<svg class="i" style="left:896px;top:971px" width="24" height="25"><use href="#clk"/></svg>
<div class="t" style="left:922px;top:971px">IA: Thermal Velocity Boost</div>
<div class="v" style="left:1158px;top:971px">No</div>
<div class="v" style="left:1278px;top:971px">No</div>
<div class="v" style="left:1398px;top:971px">No</div>
<div class="bg1" style="left:920px;top:996px;width:722px"></div>
<div class="sep" style="left:896px;top:1020px;width:746px"></div>
<svg class="i" style="left:872px;top:996px" width="24" height="25"><use href="#chv"/></svg>
<svg class="i" style="left:896px;top:996px" width="24" height="25"><use href="#clk"/></svg>
<div class="t" style="left:922px;top:996px">GT Limit Reasons</div>
<div class="v" style="left:1158px;top:996px">No</div>
<div class="v" style="left:1278px;top:996px">No</div>
<div class="v" style="left:1398px;top:996px">No</div>
<div class="sep" style="left:896px;top:1045px;width:746px"></div>
<svg class="i" style="left:896px;top:1021px" width="24" height="25"><use href="#clk"/></svg>
<div class="t" style="left:922px;top:1021px">GT: PROCHOT</div>
<div class="v" style="left:1158px;top:1021px">No</div>
<div class="v" style="left:1278px;top:1021px">No</div>
<div class="v" style="left:1398px;top:1021px">No</div>
<div class="bg1" style="left:920px;top:1046px;width:722px"></div>
<div class="sep" style="left:896px;top:1070px;width:746px"></div>
<svg class="i" style="left:896px;top:1046px" width="24" height="25"><use href="#clk"/></svg>
<div class="t" style="left:922px;top:1046px">GT: Thermal Event</div>
<div class="v" style="left:1158px;top:1046px">No</div>
<div class="v" style="left:1278px;top:1046px">No</div>
<div class="v" style="left:1398px;top:1046px">No</div>
<div class="sep" style="left:896px;top:1095px;width:746px"></div>
<svg class="i" style="left:896px;top:1071px" width="24" height="25"><use href="#clk"/></svg>
<div class="t" style="left:922px;top:1071px">GT: DDR RAPL</div>
<div class="v" style="left:1158px;top:1071px">No</div>
<div class="v" style="left:1278px;top:1071px">No</div>
<div class="v" style="left:1398px;top:1071px">No</div>
<div class="bg1" style="left:920px;top:1096px;width:722px"></div>
<div class="sep" style="left:896px;top:1120px;width:746px"></div>
<svg class="i" style="left:896px;top:1096px" width="24" height="25"><use href="#clk"/></svg>
<div class="t" style="left:922px;top:1096px">GT: Residency State Regulation</div>
<div class="v" style="left:1158px;top:1096px">No</div>
<div class="v" style="left:1278px;top:1096px">No</div>
<div class="v" style="left:1398px;top:1096px">No</div>
<div class="sep" style="left:896px;top:1145px;width:746px"></div>
<svg class="i" style="left:896px;top:1121px" width="24" height="25"><use href="#clk"/></svg>
<div class="t" style="left:922px;top:1121px">GT: Running Average Thermal ...</div>
<div class="v" style="left:1158px;top:1121px">No</div>
<div class="v" style="left:1278px;top:1121px">No</div>
<div class="v" style="left:1398px;top:1121px">No</div>
<div class="bg1" style="left:920px;top:1146px;width:722px"></div>
<div class="sep" style="left:896px;top:1170px;width:746px"></div>
<svg class="i" style="left:896px;top:1146px" width="24" height="25"><use href="#clk"/></svg>
<div class="t" style="left:922px;top:1146px">GT: VR Thermal Alert</div>
<div class="v" style="left:1158px;top:1146px">No</div>
<div class="v" style="left:1278px;top:1146px">No</div>
<div class="v" style="left:1398px;top:1146px">No</div>
<div class="sep" style="left:896px;top:1195px;width:746px"></div>
<svg class="i" style="left:896px;top:1171px" width="24" height="25"><use href="#clk"/></svg>
<div class="t" style="left:922px;top:1171px">GT: VR TDC</div>
<div class="v" style="left:1158px;top:1171px">No</div>
<div class="v" style="left:1278px;top:1171px">No</div>
<div class="v" style="left:1398px;top:1171px">No</div>
<div class="bg1" style="left:920px;top:1196px;width:722px"></div>
<div class="sep" style="left:896px;top:1220px;width:746px"></div>
<svg class="i" style="left:896px;top:1196px" width="24" height="25"><use href="#clk"/></svg>
<div class="t" style="left:922px;top:1196px">GT: Max VR Voltage, ICCmax, ...</div>
<div class="v" style="left:1158px;top:1196px">No</div>
<div class="v" style="left:1278px;top:1196px">No</div>
<div class="v" style="left:1398px;top:1196px">No</div>
<div class="sep" style="left:896px;top:1245px;width:746px"></div>
<svg class="i" style="left:896px;top:1221px" width="24" height="25"><use href="#clk"/></svg>
<div class="t" style="left:922px;top:1221px">GT: Domain-Level PBM PLGT</div>
<div class="v" style="left:1158px;top:1221px">No</div>
<div class="v" style="left:1278px;top:1221px">No</div>
<div class="v" style="left:1398px;top:1221px">No</div>
<div class="bg1" style="left:920px;top:1246px;width:722px"></div>
<div class="sep" style="left:896px;top:1270px;width:746px"></div>
<svg class="i" style="left:896px;top:1246px" width="24" height="25"><use href="#clk"/></svg>
<div class="t" style="left:922px;top:1246px">GT: Package-Level RAPL/PBM ...</div>
<div class="v" style="left:1158px;top:1246px">No</div>
<div class="v" style="left:1278px;top:1246px">No</div>
<div class="v" style="left:1398px;top:1246px">No</div>
<div class="sep" style="left:896px;top:1295px;width:746px"></div>
<svg class="i" style="left:896px;top:1271px" width="24" height="25"><use href="#clk"/></svg>
<div class="t" style="left:922px;top:1271px">GT: Package-Level RAPL/PBM ...</div>
<div class="v" style="left:1158px;top:1271px">No</div>
<div class="v" style="left:1278px;top:1271px">No</div>
<div class="v" style="left:1398px;top:1271px">No</div>
<div class="bg1" style="left:920px;top:1296px;width:722px"></div>
<div class="sep" style="left:896px;top:1320px;width:746px"></div>
<svg class="i" style="left:896px;top:1296px" width="24" height="25"><use href="#clk"/></svg>
<div class="t" style="left:922px;top:1296px">GT: Inefficient Operation</div>
<div class="v" style="left:1158px;top:1296px">No</div>
<div class="v" style="left:1278px;top:1296px">No</div>
<div class="v" style="left:1398px;top:1296px">No</div>
<div class="sep" style="left:896px;top:1345px;width:746px"></div>
<svg class="i" style="left:896px;top:1321px" width="24" height="25"><use href="#clk"/></svg>
<div class="t" style="left:922px;top:1321px">GT: Fuses limit</div>
<div class="v" style="left:1158px;top:1321px">No</div>
<div class="v" style="left:1278px;top:1321px">No</div>
<div class="v" style="left:1398px;top:1321px">No</div>
<div class="bg1" style="left:920px;top:1346px;width:722px"></div>
<div class="sep" style="left:896px;top:1370px;width:746px"></div>
<svg class="i" style="left:872px;top:1346px" width="24" height="25"><use href="#chv"/></svg>
<svg class="i" style="left:896px;top:1346px" width="24" height="25"><use href="#clk"/></svg>
<div class="t" style="left:922px;top:1346px">Ring Limit Reasons</div>
<div class="v" style="left:1158px;top:1346px">No</div>
<div class="v" style="left:1278px;top:1346px">No</div>
<div class="v" style="left:1398px;top:1346px">No</div>
<div class="sep" style="left:896px;top:1395px;width:746px"></div>
<svg class="i" style="left:896px;top:1371px" width="24" height="25"><use href="#clk"/></svg>
<div class="t" style="left:922px;top:1371px">RING: PROCHOT</div>
<div class="v" style="left:1158px;top:1371px">No</div>
<div class="v" style="left:1278px;top:1371px">No</div>
<div class="v" style="left:1398px;top:1371px">No</div>
<div class="bg1" style="left:920px;top:1396px;width:722px"></div>
<div class="sep" style="left:896px;top:1420px;width:746px"></div>
<svg class="i" style="left:896px;top:1396px" width="24" height="25"><use href="#clk"/></svg>
<div class="t" style="left:922px;top:1396px">RING: Thermal Event</div>
<div class="v" style="left:1158px;top:1396px">No</div>
<div class="v" style="left:1278px;top:1396px">No</div>
<div class="v" style="left:1398px;top:1396px">No</div>
<div class="sep" style="left:896px;top:1445px;width:746px"></div>
<svg class="i" style="left:896px;top:1421px" width="24" height="25"><use href="#clk"/></svg>
<div class="t" style="left:922px;top:1421px">RING: DDR RAPL</div>
<div class="v" style="left:1158px;top:1421px">No</div>
<div class="v" style="left:1278px;top:1421px">No</div>
<div class="v" style="left:1398px;top:1421px">No</div>
<div class="bg1" style="left:920px;top:1446px;width:722px"></div>
<div class="sep" style="left:896px;top:1470px;width:746px"></div>
<svg class="i" style="left:896px;top:1446px" width="24" height="25"><use href="#clk"/></svg>
<div class="t" style="left:922px;top:1446px">RING: Residency State Regulati...</div>
<div class="v" style="left:1158px;top:1446px">No</div>
<div class="v" style="left:1278px;top:1446px">No</div>
<div class="v" style="left:1398px;top:1446px">No</div>
<div class="sep" style="left:896px;top:1495px;width:746px"></div>
<svg class="i" style="left:896px;top:1471px" width="24" height="25"><use href="#clk"/></svg>
<div class="t" style="left:922px;top:1471px">RING: Running Average Therm...</div>
<div class="v" style="left:1158px;top:1471px">No</div>
<div class="v" style="left:1278px;top:1471px">No</div>
<div class="v" style="left:1398px;top:1471px">No</div>
<div class="bg1" style="left:920px;top:1496px;width:722px"></div>
<div class="sep" style="left:896px;top:1520px;width:746px"></div>
<svg class="i" style="left:896px;top:1496px" width="24" height="25"><use href="#clk"/></svg>
<div class="t" style="left:922px;top:1496px">RING: VR Thermal Alert</div>
<div class="v" style="left:1158px;top:1496px">No</div>
<div class="v" style="left:1278px;top:1496px">No</div>
<div class="v" style="left:1398px;top:1496px">No</div>
<div class="sep" style="left:896px;top:1545px;width:746px"></div>
<svg class="i" style="left:896px;top:1521px" width="24" height="25"><use href="#clk"/></svg>
<div class="t" style="left:922px;top:1521px">RING: VR TDC</div>
<div class="v" style="left:1158px;top:1521px">No</div>
<div class="v" style="left:1278px;top:1521px">No</div>
<div class="v" style="left:1398px;top:1521px">No</div>
<div class="bg1" style="left:920px;top:1546px;width:722px"></div>
<div class="sep" style="left:896px;top:1570px;width:746px"></div>
<svg class="i" style="left:896px;top:1546px" width="24" height="25"><use href="#clk"/></svg>
<div class="t" style="left:922px;top:1546px">RING: Max VR Voltage, ICCma...</div>
<div class="v" style="left:1158px;top:1546px">No</div>
<div class="v" style="left:1278px;top:1546px">No</div>
<div class="v" style="left:1398px;top:1546px">No</div>
<div class="sep" style="left:896px;top:1595px;width:746px"></div>
<svg class="i" style="left:896px;top:1571px" width="24" height="25"><use href="#clk"/></svg>
<div class="t" style="left:922px;top:1571px">RING: Package-Level RAPL/PB...</div>
<div class="v" style="left:1158px;top:1571px">No</div>
<div class="v" style="left:1278px;top:1571px">No</div>
<div class="v" style="left:1398px;top:1571px">No</div>
<div class="bg1" style="left:920px;top:1596px;width:722px"></div>
<div class="sep" style="left:896px;top:1620px;width:746px"></div>
<svg class="i" style="left:896px;top:1596px" width="24" height="25"><use href="#clk"/></svg>
<div class="t" style="left:922px;top:1596px">RING: Package-Level RAPL/PB...</div>
<div class="v" style="left:1158px;top:1596px">No</div>
<div class="v" style="left:1278px;top:1596px">No</div>
<div class="v" style="left:1398px;top:1596px">No</div>
<div class="hd" style="left:896px;top:1646px;width:746px"></div>
<div class="sep" style="left:872px;top:1670px;width:24px"></div>
<svg class="i" style="left:848px;top:1646px" width="24" height="25"><use href="#chv"/></svg>
<svg class="i" style="left:872px;top:1646px" width="24" height="25"><use href="#chip"/></svg>
<div class="t b" style="left:898px;top:1646px">S.M.A.R.T.: MII Azerty 512GB (YS2019119808)</div>
<div class="sep" style="left:872px;top:1695px;width:770px"></div>
<svg class="i" style="left:872px;top:1671px" width="24" height="25"><use href="#therm"/></svg>
<div class="t" style="left:898px;top:1671px">Drive Temperature</div>
<div class="v" style="left:1158px;top:1671px">40 °C</div>
<div class="v" style="left:1278px;top:1671px">40 °C</div>
<div class="v" style="left:1398px;top:1671px">40 °C</div>
<div class="v" style="left:1518px;top:1671px">40 °C</div>
<div class="bg1" style="left:896px;top:1696px;width:746px"></div>
<div class="sep" style="left:872px;top:1720px;width:770px"></div>
<svg class="i" style="left:872px;top:1696px" width="24" height="25"><use href="#clk"/></svg>
<div class="t" style="left:898px;top:1696px">Drive Remaining Life</div>
<div class="v red" style="left:1158px;top:1696px">0.0 %</div>
<div class="v red" style="left:1278px;top:1696px">0.0 %</div>
<div class="v red" style="left:1398px;top:1696px">0.0 %</div>
<div class="sep" style="left:872px;top:1745px;width:770px"></div>
<svg class="i" style="left:872px;top:1721px" width="24" height="25"><use href="#clk"/></svg>
<div class="t" style="left:898px;top:1721px">Drive Failure</div>
<div class="v" style="left:1158px;top:1721px">No</div>
<div class="v" style="left:1278px;top:1721px">No</div>
<div class="v" style="left:1398px;top:1721px">No</div>
<div class="bg1" style="left:896px;top:1746px;width:746px"></div>
<div class="sep" style="left:872px;top:1770px;width:770px"></div>
<svg class="i" style="left:872px;top:1746px" width="24" height="25"><use href="#clk"/></svg>
<div class="t" style="left:898px;top:1746px">Drive Warning</div>
<div class="v" style="left:1158px;top:1746px">Yes</div>
<div class="v" style="left:1278px;top:1746px">Yes</div>
<div class="v" style="left:1398px;top:1746px">Yes</div>
<div class="sep" style="left:872px;top:1795px;width:770px"></div>
<svg class="i" style="left:872px;top:1771px" width="24" height="25"><use href="#clk"/></svg>
<div class="t" style="left:898px;top:1771px">Total Host Writes</div>
<div class="v" style="left:1158px;top:1771px">839 GB</div>
<div class="v" style="left:1278px;top:1771px">839 GB</div>
<div class="v" style="left:1398px;top:1771px">839 GB</div>
<div class="bg1" style="left:896px;top:1796px;width:746px"></div>
<div class="sep" style="left:872px;top:1820px;width:770px"></div>
<svg class="i" style="left:872px;top:1796px" width="24" height="25"><use href="#clk"/></svg>
<div class="t" style="left:898px;top:1796px">Total Host Reads</div>
<div class="v" style="left:1158px;top:1796px">1,620 GB</div>
<div class="v" style="left:1278px;top:1796px">1,620 GB</div>
<div class="v" style="left:1398px;top:1796px">1,620 GB</div>
<div class="sep" style="left:872px;top:1845px;width:770px"></div>
<svg class="i" style="left:872px;top:1821px" width="24" height="25"><use href="#clk"/></svg>
<div class="t" style="left:898px;top:1821px">Warning: Remaining Life:</div>
<div class="v" style="left:1158px;top:1821px;padding-right:5px">0</div>
<div class="v" style="left:1278px;top:1821px;padding-right:5px">0</div>
<div class="v" style="left:1398px;top:1821px;padding-right:5px">0</div>
<div class="btn" style="left:3px;top:2008px;width:63px;height:53px"></div>
<div class="btn" style="left:68px;top:2008px;width:63px;height:53px"></div>
<div class="btn" style="left:1225px;top:2008px;width:63px;height:53px"></div>
<div class="btn" style="left:1459px;top:2008px;width:63px;height:53px"></div>
<div class="btn" style="left:1528px;top:2008px;width:63px;height:53px"></div>
<div class="btn" style="left:1598px;top:2008px;width:63px;height:53px"></div>
<div class="btn" style="left:1391px;top:2008px;width:63px;height:53px;border:1.5px solid #1a73d0"></div>
<div class="a" style="left:1325px;top:2020px;font-family:'Liberation Serif',serif;font-size:19px;line-height:24px">0:21:35</div>
<svg class="i" style="left:0;top:0" width="140" height="2084"><defs><linearGradient id="arw" x1="0" y1="0" x2="0" y2="1"><stop offset="0" stop-color="#45a2ec"/><stop offset="1" stop-color="#3490e0"/></linearGradient></defs><path d="M10.0 2036.4 L20.9 2025.4 L20.9 2031.0 L31.799999999999997 2031.0 L31.799999999999997 2041.8000000000002 L20.9 2041.8000000000002 L20.9 2047.4 ZM57.9 2036.4 L46.7 2025.4 L46.7 2031.0 L35.900000000000006 2031.0 L35.900000000000006 2041.8000000000002 L46.7 2041.8000000000002 L46.7 2047.4 ZM98.6 2036.4 L87.5 2025.4 L87.5 2031.0 L76.9 2031.0 L76.9 2041.8000000000002 L87.5 2041.8000000000002 L87.5 2047.4 ZM98.6 2036.4 L109.39999999999999 2025.4 L109.39999999999999 2031.0 L120.89999999999999 2031.0 L120.89999999999999 2041.8000000000002 L109.39999999999999 2041.8000000000002 L109.39999999999999 2047.4 Z" fill="none" stroke="#c8c8c8" stroke-width="2.6" stroke-dasharray="1 1"/><path d="M10.0 2036.4 L20.9 2025.4 L20.9 2031.0 L31.799999999999997 2031.0 L31.799999999999997 2041.8000000000002 L20.9 2041.8000000000002 L20.9 2047.4 ZM57.9 2036.4 L46.7 2025.4 L46.7 2031.0 L35.900000000000006 2031.0 L35.900000000000006 2041.8000000000002 L46.7 2041.8000000000002 L46.7 2047.4 ZM98.6 2036.4 L87.5 2025.4 L87.5 2031.0 L76.9 2031.0 L76.9 2041.8000000000002 L87.5 2041.8000000000002 L87.5 2047.4 ZM98.6 2036.4 L109.39999999999999 2025.4 L109.39999999999999 2031.0 L120.89999999999999 2031.0 L120.89999999999999 2041.8000000000002 L109.39999999999999 2041.8000000000002 L109.39999999999999 2047.4 Z" fill="url(#arw)" stroke="#2272c4" stroke-width="1"/></svg>
<svg class="i" style="left:1225px;top:2008px" width="63" height="53"><defs>
<linearGradient id="scr" x1="0" y1="0" x2="1" y2="1"><stop offset="0" stop-color="#f0f8ff"/><stop offset="0.25" stop-color="#4a9ee8"/><stop offset="0.55" stop-color="#1a78d8"/><stop offset="0.85" stop-color="#2c90e4"/><stop offset="1" stop-color="#a0dcfc"/></linearGradient>
<radialGradient id="stand" cx="0.45" cy="0.35" r="0.7"><stop offset="0" stop-color="#e4e8e8"/><stop offset="1" stop-color="#80888c"/></radialGradient></defs>
<path d="M30.9 15.3 H44.4 V25.3" fill="none" stroke="#6a6e72" stroke-width="1.5"/>
<path d="M17.5 24.5 L24 25 L23.5 29 L18 29 Z" fill="#888"/>
<ellipse cx="19.7" cy="29.4" rx="7.8" ry="4" fill="url(#stand)"/>
<path d="M9.4 4 L31.3 7.6 L29.6 24.6 L7.2 20.9 Z" fill="#3c4044"/>
<path d="M10.6 5.6 L29.9 8.8 L28.6 23 L8.8 19.8 Z" fill="url(#scr)"/>
<path d="M9.5 16 Q14 7.5 29 9.5 L29.2 11 Q16 10 10 17.8 Z" fill="#ffffff" opacity="0.55"/>
<circle cx="24.5" cy="24.3" r="0.9" fill="#40d040"/>
<path d="M39.5 43.5 L46 44 L45.5 48 L40 48 Z" fill="#888"/>
<ellipse cx="41.6" cy="48.4" rx="7.8" ry="4" fill="url(#stand)"/>
<path d="M31.3 24 L52.8 27.2 L51.3 44.2 L29.1 40.6 Z" fill="#3c4044"/>
<path d="M32.5 25.6 L51.4 28.4 L50.2 42.6 L30.7 39.5 Z" fill="url(#scr)"/>
<path d="M31.4 35.6 Q36 27 51 29.2 L51.1 30.6 Q38 29.6 32 37.4 Z" fill="#ffffff" opacity="0.55"/>
<circle cx="46.4" cy="43.8" r="0.9" fill="#40d040"/>
</svg>
<svg class="i" style="left:1391px;top:2008px" width="63" height="53">
<circle cx="31.2" cy="26.7" r="23.2" fill="#fdfdfd" stroke="#2a2a2a" stroke-width="1.6"/>
<path d="M31.2 10.0L31.2 4.7M40.5 10.5L42.2 7.6M47.4 17.3L50.3 15.7M47.9 26.7L53.2 26.7M47.4 36.0L50.3 37.7M40.5 42.9L42.2 45.8M31.2 43.4L31.2 48.7M21.8 42.9L20.2 45.8M15.0 36.1L12.1 37.7M14.5 26.7L9.2 26.7M15.0 17.3L12.1 15.7M21.8 10.5L20.2 7.6" stroke="#1a1a1a" stroke-width="2.2"/>
<path d="M31.2 26.7 L42.7 26.7" stroke="#111" stroke-width="3.2" stroke-linecap="round"/>
<path d="M31.2 26.7 L33.6 7.199999999999999" stroke="#111" stroke-width="2" stroke-linecap="round"/>
<circle cx="31.2" cy="26.7" r="2" fill="#111"/>
</svg>
<svg class="i" style="left:1459px;top:2008px" width="63" height="53"><defs>
<linearGradient id="pls" x1="0" y1="0" x2="0" y2="1"><stop offset="0" stop-color="#b8de68"/><stop offset="1" stop-color="#80b838"/></linearGradient>
<linearGradient id="docsh" x1="0" y1="0" x2="0" y2="1"><stop offset="0" stop-color="#000" stop-opacity="0.12"/><stop offset="1" stop-color="#000" stop-opacity="0"/></linearGradient></defs>
<rect x="10" y="44" width="40" height="5" fill="url(#docsh)"/>
<path d="M14.3 4.2 H40.6 L49.4 13 V45.3 H14.3 Z" fill="#f4f4f4" stroke="#a8a8a8" stroke-width="1.8"/>
<path d="M40.6 4.2 V13 H49.4" fill="#fafafa" stroke="#c0c0c0" stroke-width="1"/>
<path d="M16 16H36M16 19H36M16 22H36M16 25H36M16 28H36M16 31H36M16 34H36M16 37H36M16 40H36M23 14V42M30 14V42" stroke="#dcdcdc" stroke-width="1"/>
<path d="M41.3 29 H48.3 V35.3 H54.8 V42.3 H48.3 V48.6 H41.3 V42.3 H34.8 V35.3 H41.3 Z" fill="url(#pls)" stroke="#7aae3a" stroke-width="0.9"/>
</svg>
<svg class="i" style="left:1528px;top:2008px" width="63" height="53"><defs>
<linearGradient id="gr" x1="0" y1="0" x2="1" y2="1"><stop offset="0" stop-color="#b8bec2"/><stop offset="0.35" stop-color="#e4e8ea"/><stop offset="0.7" stop-color="#c4cacc"/><stop offset="1" stop-color="#7c8488"/></linearGradient>
<linearGradient id="gr2" x1="1" y1="1" x2="0" y2="0"><stop offset="0" stop-color="#d8dcde"/><stop offset="1" stop-color="#8c9498"/></linearGradient></defs>
<polygon points="23.1,10.5 26.5,4.7 33.7,4.7 34.8,9.7 37.1,10.5 43.6,8.8 48.7,13.9 45.9,18.2 47.0,20.4 52.8,23.8 52.8,31.0 47.8,32.1 47.0,34.4 48.7,40.9 43.6,46.0 39.2,43.2 37.1,44.3 33.7,50.1 26.5,50.1 25.4,45.1 23.1,44.3 16.6,46.0 11.5,40.9 14.3,36.5 13.2,34.4 7.4,31.0 7.4,23.8 12.4,22.7 13.2,20.4 11.5,13.9 16.6,8.8 20.9,11.6" fill="url(#gr)" stroke="#9aa2a6" stroke-width="0.8"/>
<circle cx="30.1" cy="27.4" r="14" fill="url(#gr2)"/>
<circle cx="30.1" cy="27.4" r="11.5" fill="#dfe3e5" stroke="#a9b0b4" stroke-width="1"/>
<circle cx="30.1" cy="27.4" r="8.6" fill="#fdfdfd" stroke="#8a9296" stroke-width="1.2"/>
</svg>
<svg class="i" style="left:1598px;top:2008px" width="63" height="53"><defs>
<linearGradient id="bx" x1="14" y1="10" x2="48" y2="44" gradientUnits="userSpaceOnUse"><stop offset="0" stop-color="#1670b2"/><stop offset="0.5" stop-color="#3596d4"/><stop offset="1" stop-color="#5cc2f5"/></linearGradient></defs>
<path d="M17.8 13.75 L44.2 40.25 M44.2 13.75 L17.8 40.25" stroke="url(#bx)" stroke-width="11"/>
</svg>
</body></html>
